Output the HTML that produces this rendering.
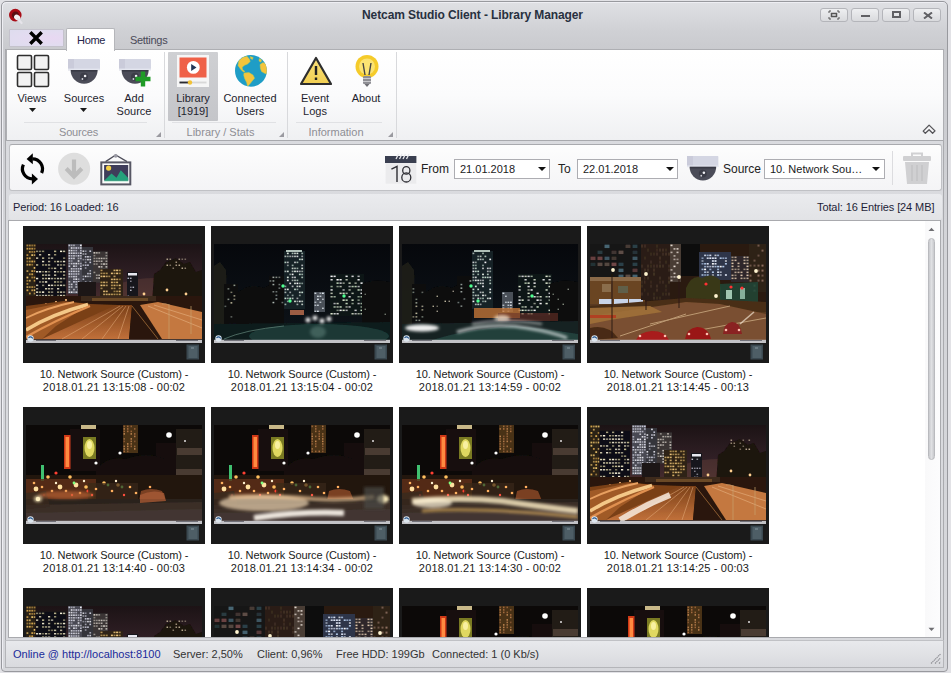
<!DOCTYPE html>
<html><head><meta charset="utf-8">
<style>
*{margin:0;padding:0;box-sizing:border-box}
html,body{width:951px;height:673px;overflow:hidden;background:#e2e2e6;font-family:"Liberation Sans",sans-serif;font-size:11px;color:#1e1e2a}
.a{position:absolute}
#win{left:1px;top:1px;width:947px;height:671px;border:1px solid #98999e;border-radius:5px 5px 4px 4px;box-shadow:inset 1px 1px 0 #eeeef3;background:linear-gradient(#dfe0e4,#cfd0d4 30px,#c9cace 48px,#cdced2 140px,#d3d4d8 220px,#d6d7db);overflow:hidden}
.title{left:-3px;top:8px;width:951px;text-align:center;font-weight:bold;font-size:12px;color:#283040;letter-spacing:-0.1px}
.wbtn{top:8px;width:28px;height:14px;border:1px solid #b4b5ba;border-radius:3px;background:linear-gradient(#eeeff1,#d9dadd)}
.tab{font-size:11px;color:#2a2a3a;letter-spacing:-0.3px}
#ribbon{left:6px;top:49px;width:938px;height:92px;border:1px solid #aeafb3;border-bottom-color:#a8a9ad;background:linear-gradient(#ffffff,#fbfbfc 45px,#eff0f2 90px)}
.grp{top:0;height:90px;border-right:1px solid #d4d5d9}
.gl{color:#8e8e94;font-size:11px;text-align:center;margin-top:1px}
.bt{text-align:center;line-height:13px;font-size:11px;color:#1e1e2e;margin-top:1px}
.sep{height:1px;background:#e0e1e4}
#tb{left:9px;top:144px;width:933px;height:47px;border:1px solid #c0c1c5;border-top-color:#a9aaae;border-radius:3px;background:linear-gradient(#fdfdfd,#f4f4f6)}
#sr{left:9px;top:194px;width:933px;height:26px;border-radius:3px;background:linear-gradient(#eaebee,#e2e3e6)}
#content{left:8px;top:220px;width:933px;height:418px;border:1px solid #a9aaae;background:#fff;overflow:hidden}
.combo{top:159px;height:20px;border:1px solid #adadb2;background:#fff;font-size:11px;padding:3px 0 0 5px;color:#1a1a22}
.dd{width:0;height:0;border-left:4px solid transparent;border-right:4px solid transparent;border-top:4px solid #111}
.lbl{font-size:12px;color:#222}
.th{width:182px;height:137px;background:#1a1a1a}
.ph{left:3px;top:18px;width:176px;height:99px;overflow:hidden}
.cap{width:188px;text-align:center;font-size:11px;line-height:12.5px;color:#1a1a1a;letter-spacing:-0.1px}
#status{left:5px;top:640px;width:939px;height:28px;background:linear-gradient(#e8e9ec,#d9dade);border:1px solid #b4b5b9;border-top-color:#c0c1c5}
.st{top:648px;font-size:11px;color:#333}
</style></head><body>
<svg width="0" height="0" style="position:absolute">
<defs>
<!--SCENES-->
<filter id="bl" x="-5%" y="-5%" width="110%" height="110%"><feGaussianBlur stdDeviation="0.75"/></filter>
<filter id="bl2" x="-30%" y="-30%" width="160%" height="160%"><feGaussianBlur stdDeviation="1.8"/></filter>
<linearGradient id="skyA" x1="0" y1="0" x2="0" y2="1"><stop offset="0" stop-color="#1c1315"/><stop offset="0.35" stop-color="#312026"/><stop offset="0.62" stop-color="#4e3030"/><stop offset="1" stop-color="#4a3030"/></linearGradient>
<linearGradient id="roadA" x1="0" y1="0" x2="0" y2="1"><stop offset="0" stop-color="#7a4018"/><stop offset="1" stop-color="#c0703a"/></linearGradient>
<linearGradient id="skyB" x1="0" y1="0" x2="0" y2="1"><stop offset="0" stop-color="#06080c"/><stop offset="1" stop-color="#0e141a"/></linearGradient>
<symbol id="sA" viewBox="0 0 176 99"><rect width="176" height="99" fill="url(#skyA)"/><ellipse cx="130" cy="52" rx="50" ry="18" fill="#5a3a34" opacity="0.55"/><g filter="url(#bl)"><rect x="0" y="0" width="9.5" height="53" fill="#2a2014"/><rect x="0.5" y="0.6" width="1.8" height="1.8" fill="#d8a850" opacity="0.73"/><rect x="2.9" y="0.6" width="1.8" height="1.8" fill="#d8a850" opacity="0.71"/><rect x="5.3" y="0.6" width="1.8" height="1.8" fill="#d8a850" opacity="0.57"/><rect x="7.7" y="0.6" width="1.8" height="1.8" fill="#d8a850" opacity="0.66"/><rect x="0.5" y="3.8" width="1.8" height="1.8" fill="#d8a850" opacity="0.92"/><rect x="2.9" y="3.8" width="1.8" height="1.8" fill="#d8a850" opacity="0.83"/><rect x="5.3" y="3.8" width="1.8" height="1.8" fill="#d8a850" opacity="0.81"/><rect x="7.7" y="3.8" width="1.8" height="1.8" fill="#d8a850" opacity="0.57"/><rect x="2.9" y="7.0" width="1.8" height="1.8" fill="#d8a850" opacity="0.79"/><rect x="5.3" y="7.0" width="1.8" height="1.8" fill="#d8a850" opacity="0.60"/><rect x="7.7" y="7.0" width="1.8" height="1.8" fill="#d8a850" opacity="0.72"/><rect x="0.5" y="10.2" width="1.8" height="1.8" fill="#d8a850" opacity="0.80"/><rect x="5.3" y="10.2" width="1.8" height="1.8" fill="#f0c870" opacity="0.90"/><rect x="7.7" y="10.2" width="1.8" height="1.8" fill="#f0c870" opacity="0.71"/><rect x="0.5" y="13.4" width="1.8" height="1.8" fill="#d8a850" opacity="0.86"/><rect x="2.9" y="13.4" width="1.8" height="1.8" fill="#f0c870" opacity="0.79"/><rect x="0.5" y="16.6" width="1.8" height="1.8" fill="#d8a850" opacity="0.60"/><rect x="2.9" y="16.6" width="1.8" height="1.8" fill="#f0c870" opacity="0.62"/><rect x="5.3" y="16.6" width="1.8" height="1.8" fill="#d8a850" opacity="0.98"/><rect x="7.7" y="16.6" width="1.8" height="1.8" fill="#f0c870" opacity="0.70"/><rect x="0.5" y="19.8" width="1.8" height="1.8" fill="#f0c870" opacity="0.81"/><rect x="2.9" y="19.8" width="1.8" height="1.8" fill="#d8a850" opacity="0.98"/><rect x="5.3" y="19.8" width="1.8" height="1.8" fill="#d8a850" opacity="0.58"/><rect x="7.7" y="23.0" width="1.8" height="1.8" fill="#f0c870" opacity="0.95"/><rect x="0.5" y="26.2" width="1.8" height="1.8" fill="#f0c870" opacity="0.71"/><rect x="5.3" y="26.2" width="1.8" height="1.8" fill="#d8a850" opacity="0.90"/><rect x="7.7" y="26.2" width="1.8" height="1.8" fill="#d8a850" opacity="0.73"/><rect x="2.9" y="29.4" width="1.8" height="1.8" fill="#d8a850" opacity="0.75"/><rect x="5.3" y="29.4" width="1.8" height="1.8" fill="#d8a850" opacity="0.92"/><rect x="0.5" y="32.6" width="1.8" height="1.8" fill="#f0c870" opacity="0.99"/><rect x="5.3" y="32.6" width="1.8" height="1.8" fill="#d8a850" opacity="0.62"/><rect x="7.7" y="32.6" width="1.8" height="1.8" fill="#d8a850" opacity="0.85"/><rect x="0.5" y="35.8" width="1.8" height="1.8" fill="#d8a850" opacity="0.67"/><rect x="2.9" y="35.8" width="1.8" height="1.8" fill="#f0c870" opacity="0.79"/><rect x="7.7" y="35.8" width="1.8" height="1.8" fill="#d8a850" opacity="0.86"/><rect x="0.5" y="39.0" width="1.8" height="1.8" fill="#d8a850" opacity="0.76"/><rect x="0.5" y="42.2" width="1.8" height="1.8" fill="#f0c870" opacity="0.73"/><rect x="2.9" y="42.2" width="1.8" height="1.8" fill="#f0c870" opacity="0.58"/><rect x="5.3" y="42.2" width="1.8" height="1.8" fill="#d8a850" opacity="0.75"/><rect x="7.7" y="42.2" width="1.8" height="1.8" fill="#d8a850" opacity="0.60"/><rect x="0.5" y="45.4" width="1.8" height="1.8" fill="#d8a850" opacity="0.98"/><rect x="5.3" y="45.4" width="1.8" height="1.8" fill="#d8a850" opacity="0.83"/><rect x="7.7" y="45.4" width="1.8" height="1.8" fill="#f0c870" opacity="0.98"/><rect x="2.9" y="48.6" width="1.8" height="1.8" fill="#d8a850" opacity="0.93"/><rect x="7.7" y="48.6" width="1.8" height="1.8" fill="#f0c870" opacity="0.69"/><rect x="9.5" y="5.5" width="30.5" height="48" fill="#101014"/><rect x="10.0" y="6.6" width="2.2" height="1.5" fill="#c0b890" opacity="0.70"/><rect x="13.0" y="6.6" width="2.2" height="1.5" fill="#c0b890" opacity="0.62"/><rect x="16.0" y="6.6" width="2.2" height="1.5" fill="#c0b890" opacity="0.71"/><rect x="28.0" y="6.6" width="2.2" height="1.5" fill="#c0b890" opacity="0.94"/><rect x="34.0" y="6.6" width="2.2" height="1.5" fill="#fff8e0" opacity="0.96"/><rect x="37.0" y="6.6" width="2.2" height="1.5" fill="#e8e0c0" opacity="0.79"/><rect x="13.0" y="10.0" width="2.2" height="1.5" fill="#e8e0c0" opacity="0.83"/><rect x="22.0" y="10.0" width="2.2" height="1.5" fill="#e8e0c0" opacity="0.92"/><rect x="28.0" y="10.0" width="2.2" height="1.5" fill="#c0b890" opacity="0.77"/><rect x="10.0" y="13.4" width="2.2" height="1.5" fill="#e8e0c0" opacity="0.86"/><rect x="16.0" y="13.4" width="2.2" height="1.5" fill="#c0b890" opacity="0.99"/><rect x="22.0" y="13.4" width="2.2" height="1.5" fill="#e8e0c0" opacity="0.60"/><rect x="25.0" y="13.4" width="2.2" height="1.5" fill="#fff8e0" opacity="0.64"/><rect x="37.0" y="13.4" width="2.2" height="1.5" fill="#c0b890" opacity="0.70"/><rect x="16.0" y="16.8" width="2.2" height="1.5" fill="#fff8e0" opacity="0.90"/><rect x="22.0" y="16.8" width="2.2" height="1.5" fill="#e8e0c0" opacity="0.75"/><rect x="28.0" y="16.8" width="2.2" height="1.5" fill="#c0b890" opacity="0.73"/><rect x="31.0" y="16.8" width="2.2" height="1.5" fill="#e8e0c0" opacity="0.88"/><rect x="34.0" y="16.8" width="2.2" height="1.5" fill="#e8e0c0" opacity="0.56"/><rect x="37.0" y="16.8" width="2.2" height="1.5" fill="#fff8e0" opacity="0.91"/><rect x="10.0" y="20.2" width="2.2" height="1.5" fill="#c0b890" opacity="0.99"/><rect x="16.0" y="20.2" width="2.2" height="1.5" fill="#c0b890" opacity="0.80"/><rect x="19.0" y="20.2" width="2.2" height="1.5" fill="#c0b890" opacity="0.84"/><rect x="22.0" y="20.2" width="2.2" height="1.5" fill="#e8e0c0" opacity="0.75"/><rect x="31.0" y="20.2" width="2.2" height="1.5" fill="#fff8e0" opacity="0.65"/><rect x="34.0" y="20.2" width="2.2" height="1.5" fill="#c0b890" opacity="0.70"/><rect x="37.0" y="20.2" width="2.2" height="1.5" fill="#e8e0c0" opacity="0.58"/><rect x="22.0" y="23.6" width="2.2" height="1.5" fill="#c0b890" opacity="0.61"/><rect x="25.0" y="23.6" width="2.2" height="1.5" fill="#c0b890" opacity="0.56"/><rect x="28.0" y="23.6" width="2.2" height="1.5" fill="#e8e0c0" opacity="0.82"/><rect x="34.0" y="23.6" width="2.2" height="1.5" fill="#e8e0c0" opacity="0.76"/><rect x="10.0" y="27.0" width="2.2" height="1.5" fill="#fff8e0" opacity="0.86"/><rect x="13.0" y="27.0" width="2.2" height="1.5" fill="#fff8e0" opacity="0.90"/><rect x="16.0" y="27.0" width="2.2" height="1.5" fill="#c0b890" opacity="0.58"/><rect x="19.0" y="27.0" width="2.2" height="1.5" fill="#e8e0c0" opacity="0.90"/><rect x="22.0" y="27.0" width="2.2" height="1.5" fill="#c0b890" opacity="0.56"/><rect x="28.0" y="27.0" width="2.2" height="1.5" fill="#fff8e0" opacity="0.83"/><rect x="31.0" y="27.0" width="2.2" height="1.5" fill="#c0b890" opacity="0.64"/><rect x="34.0" y="27.0" width="2.2" height="1.5" fill="#c0b890" opacity="0.79"/><rect x="37.0" y="27.0" width="2.2" height="1.5" fill="#e8e0c0" opacity="0.86"/><rect x="16.0" y="30.4" width="2.2" height="1.5" fill="#c0b890" opacity="0.95"/><rect x="19.0" y="30.4" width="2.2" height="1.5" fill="#fff8e0" opacity="0.61"/><rect x="22.0" y="30.4" width="2.2" height="1.5" fill="#fff8e0" opacity="0.69"/><rect x="28.0" y="30.4" width="2.2" height="1.5" fill="#e8e0c0" opacity="0.85"/><rect x="37.0" y="30.4" width="2.2" height="1.5" fill="#c0b890" opacity="0.84"/><rect x="10.0" y="33.8" width="2.2" height="1.5" fill="#fff8e0" opacity="0.95"/><rect x="16.0" y="33.8" width="2.2" height="1.5" fill="#e8e0c0" opacity="0.73"/><rect x="19.0" y="33.8" width="2.2" height="1.5" fill="#c0b890" opacity="0.92"/><rect x="22.0" y="33.8" width="2.2" height="1.5" fill="#fff8e0" opacity="1.00"/><rect x="25.0" y="33.8" width="2.2" height="1.5" fill="#fff8e0" opacity="0.64"/><rect x="28.0" y="33.8" width="2.2" height="1.5" fill="#c0b890" opacity="0.71"/><rect x="31.0" y="33.8" width="2.2" height="1.5" fill="#fff8e0" opacity="0.75"/><rect x="34.0" y="33.8" width="2.2" height="1.5" fill="#fff8e0" opacity="0.78"/><rect x="37.0" y="33.8" width="2.2" height="1.5" fill="#e8e0c0" opacity="0.60"/><rect x="13.0" y="37.2" width="2.2" height="1.5" fill="#e8e0c0" opacity="0.59"/><rect x="16.0" y="37.2" width="2.2" height="1.5" fill="#e8e0c0" opacity="0.67"/><rect x="19.0" y="37.2" width="2.2" height="1.5" fill="#fff8e0" opacity="0.93"/><rect x="28.0" y="37.2" width="2.2" height="1.5" fill="#c0b890" opacity="0.96"/><rect x="31.0" y="37.2" width="2.2" height="1.5" fill="#c0b890" opacity="0.70"/><rect x="34.0" y="37.2" width="2.2" height="1.5" fill="#c0b890" opacity="0.63"/><rect x="10.0" y="40.6" width="2.2" height="1.5" fill="#e8e0c0" opacity="0.84"/><rect x="16.0" y="40.6" width="2.2" height="1.5" fill="#e8e0c0" opacity="0.58"/><rect x="22.0" y="40.6" width="2.2" height="1.5" fill="#fff8e0" opacity="1.00"/><rect x="25.0" y="40.6" width="2.2" height="1.5" fill="#fff8e0" opacity="0.83"/><rect x="28.0" y="40.6" width="2.2" height="1.5" fill="#c0b890" opacity="0.66"/><rect x="31.0" y="40.6" width="2.2" height="1.5" fill="#e8e0c0" opacity="0.67"/><rect x="34.0" y="40.6" width="2.2" height="1.5" fill="#fff8e0" opacity="0.83"/><rect x="37.0" y="40.6" width="2.2" height="1.5" fill="#e8e0c0" opacity="0.68"/><rect x="10.0" y="44.0" width="2.2" height="1.5" fill="#e8e0c0" opacity="0.67"/><rect x="19.0" y="44.0" width="2.2" height="1.5" fill="#e8e0c0" opacity="0.88"/><rect x="22.0" y="44.0" width="2.2" height="1.5" fill="#e8e0c0" opacity="0.78"/><rect x="25.0" y="44.0" width="2.2" height="1.5" fill="#fff8e0" opacity="0.60"/><rect x="31.0" y="44.0" width="2.2" height="1.5" fill="#fff8e0" opacity="0.80"/><rect x="10.0" y="47.4" width="2.2" height="1.5" fill="#e8e0c0" opacity="0.99"/><rect x="13.0" y="47.4" width="2.2" height="1.5" fill="#c0b890" opacity="0.88"/><rect x="16.0" y="47.4" width="2.2" height="1.5" fill="#fff8e0" opacity="0.99"/><rect x="22.0" y="47.4" width="2.2" height="1.5" fill="#c0b890" opacity="0.88"/><rect x="25.0" y="47.4" width="2.2" height="1.5" fill="#e8e0c0" opacity="0.57"/><rect x="31.0" y="47.4" width="2.2" height="1.5" fill="#c0b890" opacity="0.85"/><rect x="34.0" y="47.4" width="2.2" height="1.5" fill="#e8e0c0" opacity="0.86"/><rect x="37.0" y="47.4" width="2.2" height="1.5" fill="#e8e0c0" opacity="0.62"/><rect x="10.0" y="50.8" width="2.2" height="1.5" fill="#fff8e0" opacity="0.71"/><rect x="13.0" y="50.8" width="2.2" height="1.5" fill="#c0b890" opacity="0.70"/><rect x="16.0" y="50.8" width="2.2" height="1.5" fill="#fff8e0" opacity="0.65"/><rect x="19.0" y="50.8" width="2.2" height="1.5" fill="#fff8e0" opacity="0.72"/><rect x="22.0" y="50.8" width="2.2" height="1.5" fill="#c0b890" opacity="0.85"/><rect x="25.0" y="50.8" width="2.2" height="1.5" fill="#e8e0c0" opacity="0.59"/><rect x="31.0" y="50.8" width="2.2" height="1.5" fill="#c0b890" opacity="0.57"/><rect x="34.0" y="50.8" width="2.2" height="1.5" fill="#fff8e0" opacity="0.83"/><rect x="37.0" y="50.8" width="2.2" height="1.5" fill="#c0b890" opacity="0.93"/><rect x="42" y="0" width="14" height="50" fill="#4a4a52"/><rect x="42.5" y="0.6" width="1.7" height="1.6" fill="#d0d0e0" opacity="0.89"/><rect x="44.8" y="0.6" width="1.7" height="1.6" fill="#d0d0e0" opacity="0.62"/><rect x="47.1" y="0.6" width="1.7" height="1.6" fill="#f0f0f8" opacity="0.57"/><rect x="54.0" y="0.6" width="1.7" height="1.6" fill="#f0f0f8" opacity="0.96"/><rect x="44.8" y="3.2" width="1.7" height="1.6" fill="#f0f0f8" opacity="0.92"/><rect x="47.1" y="3.2" width="1.7" height="1.6" fill="#f0f0f8" opacity="0.59"/><rect x="49.4" y="3.2" width="1.7" height="1.6" fill="#d0d0e0" opacity="0.98"/><rect x="51.7" y="3.2" width="1.7" height="1.6" fill="#d0d0e0" opacity="0.80"/><rect x="54.0" y="3.2" width="1.7" height="1.6" fill="#f0f0f8" opacity="0.77"/><rect x="42.5" y="5.8" width="1.7" height="1.6" fill="#f0f0f8" opacity="0.89"/><rect x="44.8" y="5.8" width="1.7" height="1.6" fill="#f0f0f8" opacity="0.85"/><rect x="47.1" y="5.8" width="1.7" height="1.6" fill="#d0d0e0" opacity="0.66"/><rect x="49.4" y="5.8" width="1.7" height="1.6" fill="#d0d0e0" opacity="0.66"/><rect x="54.0" y="5.8" width="1.7" height="1.6" fill="#d0d0e0" opacity="0.77"/><rect x="42.5" y="8.4" width="1.7" height="1.6" fill="#d0d0e0" opacity="0.96"/><rect x="44.8" y="8.4" width="1.7" height="1.6" fill="#f0f0f8" opacity="0.83"/><rect x="47.1" y="8.4" width="1.7" height="1.6" fill="#f0f0f8" opacity="0.82"/><rect x="49.4" y="8.4" width="1.7" height="1.6" fill="#d0d0e0" opacity="0.83"/><rect x="51.7" y="8.4" width="1.7" height="1.6" fill="#d0d0e0" opacity="0.58"/><rect x="54.0" y="8.4" width="1.7" height="1.6" fill="#f0f0f8" opacity="0.86"/><rect x="42.5" y="11.0" width="1.7" height="1.6" fill="#d0d0e0" opacity="0.87"/><rect x="44.8" y="11.0" width="1.7" height="1.6" fill="#d0d0e0" opacity="0.76"/><rect x="47.1" y="11.0" width="1.7" height="1.6" fill="#f0f0f8" opacity="0.69"/><rect x="49.4" y="11.0" width="1.7" height="1.6" fill="#d0d0e0" opacity="0.56"/><rect x="51.7" y="11.0" width="1.7" height="1.6" fill="#d0d0e0" opacity="1.00"/><rect x="54.0" y="11.0" width="1.7" height="1.6" fill="#f0f0f8" opacity="0.58"/><rect x="42.5" y="13.6" width="1.7" height="1.6" fill="#d0d0e0" opacity="0.98"/><rect x="44.8" y="13.6" width="1.7" height="1.6" fill="#d0d0e0" opacity="0.95"/><rect x="47.1" y="13.6" width="1.7" height="1.6" fill="#f0f0f8" opacity="0.77"/><rect x="51.7" y="13.6" width="1.7" height="1.6" fill="#f0f0f8" opacity="0.55"/><rect x="54.0" y="13.6" width="1.7" height="1.6" fill="#d0d0e0" opacity="0.73"/><rect x="42.5" y="16.2" width="1.7" height="1.6" fill="#d0d0e0" opacity="0.70"/><rect x="44.8" y="16.2" width="1.7" height="1.6" fill="#d0d0e0" opacity="0.55"/><rect x="51.7" y="16.2" width="1.7" height="1.6" fill="#f0f0f8" opacity="0.87"/><rect x="42.5" y="18.8" width="1.7" height="1.6" fill="#d0d0e0" opacity="0.58"/><rect x="44.8" y="18.8" width="1.7" height="1.6" fill="#f0f0f8" opacity="0.71"/><rect x="47.1" y="18.8" width="1.7" height="1.6" fill="#d0d0e0" opacity="0.93"/><rect x="49.4" y="18.8" width="1.7" height="1.6" fill="#f0f0f8" opacity="0.93"/><rect x="51.7" y="18.8" width="1.7" height="1.6" fill="#f0f0f8" opacity="0.66"/><rect x="54.0" y="18.8" width="1.7" height="1.6" fill="#d0d0e0" opacity="0.64"/><rect x="42.5" y="21.4" width="1.7" height="1.6" fill="#d0d0e0" opacity="0.95"/><rect x="47.1" y="21.4" width="1.7" height="1.6" fill="#f0f0f8" opacity="0.87"/><rect x="49.4" y="21.4" width="1.7" height="1.6" fill="#d0d0e0" opacity="0.75"/><rect x="54.0" y="21.4" width="1.7" height="1.6" fill="#d0d0e0" opacity="0.77"/><rect x="44.8" y="24.0" width="1.7" height="1.6" fill="#f0f0f8" opacity="0.76"/><rect x="47.1" y="24.0" width="1.7" height="1.6" fill="#d0d0e0" opacity="0.67"/><rect x="49.4" y="24.0" width="1.7" height="1.6" fill="#d0d0e0" opacity="0.73"/><rect x="51.7" y="24.0" width="1.7" height="1.6" fill="#d0d0e0" opacity="0.80"/><rect x="54.0" y="24.0" width="1.7" height="1.6" fill="#f0f0f8" opacity="0.84"/><rect x="42.5" y="26.6" width="1.7" height="1.6" fill="#d0d0e0" opacity="0.80"/><rect x="44.8" y="26.6" width="1.7" height="1.6" fill="#d0d0e0" opacity="1.00"/><rect x="47.1" y="26.6" width="1.7" height="1.6" fill="#f0f0f8" opacity="0.80"/><rect x="49.4" y="26.6" width="1.7" height="1.6" fill="#f0f0f8" opacity="0.70"/><rect x="51.7" y="26.6" width="1.7" height="1.6" fill="#f0f0f8" opacity="0.72"/><rect x="42.5" y="29.2" width="1.7" height="1.6" fill="#f0f0f8" opacity="0.89"/><rect x="44.8" y="29.2" width="1.7" height="1.6" fill="#d0d0e0" opacity="0.89"/><rect x="47.1" y="29.2" width="1.7" height="1.6" fill="#d0d0e0" opacity="0.70"/><rect x="49.4" y="29.2" width="1.7" height="1.6" fill="#d0d0e0" opacity="0.81"/><rect x="51.7" y="29.2" width="1.7" height="1.6" fill="#f0f0f8" opacity="0.59"/><rect x="42.5" y="31.8" width="1.7" height="1.6" fill="#d0d0e0" opacity="0.74"/><rect x="44.8" y="31.8" width="1.7" height="1.6" fill="#f0f0f8" opacity="0.61"/><rect x="47.1" y="31.8" width="1.7" height="1.6" fill="#d0d0e0" opacity="0.99"/><rect x="49.4" y="31.8" width="1.7" height="1.6" fill="#f0f0f8" opacity="0.73"/><rect x="47.1" y="34.4" width="1.7" height="1.6" fill="#f0f0f8" opacity="0.65"/><rect x="49.4" y="34.4" width="1.7" height="1.6" fill="#f0f0f8" opacity="0.97"/><rect x="51.7" y="34.4" width="1.7" height="1.6" fill="#d0d0e0" opacity="0.59"/><rect x="42.5" y="37.0" width="1.7" height="1.6" fill="#f0f0f8" opacity="0.65"/><rect x="47.1" y="37.0" width="1.7" height="1.6" fill="#d0d0e0" opacity="0.98"/><rect x="49.4" y="37.0" width="1.7" height="1.6" fill="#d0d0e0" opacity="0.86"/><rect x="51.7" y="37.0" width="1.7" height="1.6" fill="#f0f0f8" opacity="0.69"/><rect x="42.5" y="39.6" width="1.7" height="1.6" fill="#d0d0e0" opacity="0.65"/><rect x="44.8" y="39.6" width="1.7" height="1.6" fill="#f0f0f8" opacity="0.79"/><rect x="49.4" y="39.6" width="1.7" height="1.6" fill="#d0d0e0" opacity="0.84"/><rect x="54.0" y="39.6" width="1.7" height="1.6" fill="#f0f0f8" opacity="0.80"/><rect x="42.5" y="42.2" width="1.7" height="1.6" fill="#d0d0e0" opacity="0.87"/><rect x="44.8" y="42.2" width="1.7" height="1.6" fill="#f0f0f8" opacity="0.64"/><rect x="49.4" y="42.2" width="1.7" height="1.6" fill="#f0f0f8" opacity="0.67"/><rect x="51.7" y="42.2" width="1.7" height="1.6" fill="#d0d0e0" opacity="0.65"/><rect x="54.0" y="42.2" width="1.7" height="1.6" fill="#d0d0e0" opacity="0.87"/><rect x="42.5" y="44.8" width="1.7" height="1.6" fill="#d0d0e0" opacity="0.64"/><rect x="47.1" y="44.8" width="1.7" height="1.6" fill="#f0f0f8" opacity="0.64"/><rect x="51.7" y="44.8" width="1.7" height="1.6" fill="#f0f0f8" opacity="0.65"/><rect x="54.0" y="44.8" width="1.7" height="1.6" fill="#d0d0e0" opacity="0.60"/><rect x="42.5" y="47.4" width="1.7" height="1.6" fill="#f0f0f8" opacity="0.95"/><rect x="44.8" y="47.4" width="1.7" height="1.6" fill="#f0f0f8" opacity="0.98"/><rect x="47.1" y="47.4" width="1.7" height="1.6" fill="#d0d0e0" opacity="0.57"/><rect x="49.4" y="47.4" width="1.7" height="1.6" fill="#f0f0f8" opacity="0.74"/><rect x="51.7" y="47.4" width="1.7" height="1.6" fill="#f0f0f8" opacity="0.73"/><rect x="56" y="3" width="11" height="44" fill="#34343a"/><rect x="56.5" y="6.4" width="1.7" height="1.6" fill="#e8e8f0" opacity="0.84"/><rect x="58.8" y="6.4" width="1.7" height="1.6" fill="#c8c8d8" opacity="0.56"/><rect x="63.4" y="6.4" width="1.7" height="1.6" fill="#c8c8d8" opacity="0.99"/><rect x="56.5" y="9.2" width="1.7" height="1.6" fill="#e8e8f0" opacity="0.55"/><rect x="58.8" y="9.2" width="1.7" height="1.6" fill="#c8c8d8" opacity="0.74"/><rect x="58.8" y="12.0" width="1.7" height="1.6" fill="#c8c8d8" opacity="0.92"/><rect x="61.1" y="12.0" width="1.7" height="1.6" fill="#e8e8f0" opacity="0.87"/><rect x="63.4" y="12.0" width="1.7" height="1.6" fill="#c8c8d8" opacity="0.64"/><rect x="56.5" y="14.8" width="1.7" height="1.6" fill="#c8c8d8" opacity="0.56"/><rect x="58.8" y="14.8" width="1.7" height="1.6" fill="#c8c8d8" opacity="0.57"/><rect x="61.1" y="14.8" width="1.7" height="1.6" fill="#e8e8f0" opacity="0.91"/><rect x="63.4" y="14.8" width="1.7" height="1.6" fill="#e8e8f0" opacity="0.89"/><rect x="58.8" y="17.6" width="1.7" height="1.6" fill="#c8c8d8" opacity="0.70"/><rect x="63.4" y="17.6" width="1.7" height="1.6" fill="#c8c8d8" opacity="0.97"/><rect x="56.5" y="20.4" width="1.7" height="1.6" fill="#e8e8f0" opacity="0.56"/><rect x="58.8" y="20.4" width="1.7" height="1.6" fill="#c8c8d8" opacity="0.87"/><rect x="61.1" y="20.4" width="1.7" height="1.6" fill="#c8c8d8" opacity="0.91"/><rect x="58.8" y="23.2" width="1.7" height="1.6" fill="#c8c8d8" opacity="0.63"/><rect x="63.4" y="26.0" width="1.7" height="1.6" fill="#c8c8d8" opacity="0.76"/><rect x="61.1" y="28.8" width="1.7" height="1.6" fill="#c8c8d8" opacity="0.89"/><rect x="63.4" y="28.8" width="1.7" height="1.6" fill="#e8e8f0" opacity="0.84"/><rect x="56.5" y="31.6" width="1.7" height="1.6" fill="#c8c8d8" opacity="0.62"/><rect x="58.8" y="31.6" width="1.7" height="1.6" fill="#e8e8f0" opacity="0.99"/><rect x="61.1" y="31.6" width="1.7" height="1.6" fill="#e8e8f0" opacity="0.64"/><rect x="63.4" y="31.6" width="1.7" height="1.6" fill="#c8c8d8" opacity="0.63"/><rect x="56.5" y="34.4" width="1.7" height="1.6" fill="#c8c8d8" opacity="0.83"/><rect x="58.8" y="37.2" width="1.7" height="1.6" fill="#c8c8d8" opacity="0.68"/><rect x="63.4" y="37.2" width="1.7" height="1.6" fill="#c8c8d8" opacity="0.64"/><rect x="56.5" y="40.0" width="1.7" height="1.6" fill="#e8e8f0" opacity="0.66"/><rect x="58.8" y="40.0" width="1.7" height="1.6" fill="#e8e8f0" opacity="0.70"/><rect x="61.1" y="40.0" width="1.7" height="1.6" fill="#e8e8f0" opacity="0.78"/><rect x="63.4" y="40.0" width="1.7" height="1.6" fill="#e8e8f0" opacity="0.84"/><rect x="58.8" y="42.8" width="1.7" height="1.6" fill="#c8c8d8" opacity="0.95"/><rect x="61.1" y="42.8" width="1.7" height="1.6" fill="#c8c8d8" opacity="0.96"/><rect x="63.4" y="42.8" width="1.7" height="1.6" fill="#c8c8d8" opacity="0.65"/><rect x="67" y="7.5" width="15" height="31" fill="#3a3636"/><rect x="67.5" y="8.1" width="1.8" height="1.5" fill="#e0d8d0" opacity="0.97"/><rect x="69.9" y="8.1" width="1.8" height="1.5" fill="#e0d8d0" opacity="0.75"/><rect x="72.3" y="8.1" width="1.8" height="1.5" fill="#e0d8d0" opacity="0.60"/><rect x="79.5" y="8.1" width="1.8" height="1.5" fill="#c8c0b8" opacity="0.70"/><rect x="67.5" y="10.9" width="1.8" height="1.5" fill="#c8c0b8" opacity="0.57"/><rect x="79.5" y="10.9" width="1.8" height="1.5" fill="#c8c0b8" opacity="0.63"/><rect x="67.5" y="13.7" width="1.8" height="1.5" fill="#e0d8d0" opacity="0.56"/><rect x="69.9" y="13.7" width="1.8" height="1.5" fill="#c8c0b8" opacity="0.58"/><rect x="72.3" y="13.7" width="1.8" height="1.5" fill="#c8c0b8" opacity="0.85"/><rect x="74.7" y="13.7" width="1.8" height="1.5" fill="#e0d8d0" opacity="0.84"/><rect x="77.1" y="13.7" width="1.8" height="1.5" fill="#c8c0b8" opacity="0.73"/><rect x="79.5" y="13.7" width="1.8" height="1.5" fill="#c8c0b8" opacity="0.74"/><rect x="67.5" y="16.5" width="1.8" height="1.5" fill="#c8c0b8" opacity="0.74"/><rect x="69.9" y="16.5" width="1.8" height="1.5" fill="#c8c0b8" opacity="0.84"/><rect x="72.3" y="16.5" width="1.8" height="1.5" fill="#c8c0b8" opacity="0.64"/><rect x="74.7" y="16.5" width="1.8" height="1.5" fill="#e0d8d0" opacity="0.74"/><rect x="79.5" y="16.5" width="1.8" height="1.5" fill="#c8c0b8" opacity="0.76"/><rect x="67.5" y="19.3" width="1.8" height="1.5" fill="#e0d8d0" opacity="0.57"/><rect x="69.9" y="19.3" width="1.8" height="1.5" fill="#c8c0b8" opacity="0.59"/><rect x="74.7" y="19.3" width="1.8" height="1.5" fill="#e0d8d0" opacity="0.62"/><rect x="77.1" y="19.3" width="1.8" height="1.5" fill="#e0d8d0" opacity="0.97"/><rect x="79.5" y="19.3" width="1.8" height="1.5" fill="#c8c0b8" opacity="0.89"/><rect x="72.3" y="22.1" width="1.8" height="1.5" fill="#e0d8d0" opacity="0.99"/><rect x="74.7" y="22.1" width="1.8" height="1.5" fill="#e0d8d0" opacity="0.82"/><rect x="79.5" y="22.1" width="1.8" height="1.5" fill="#e0d8d0" opacity="0.84"/><rect x="74.7" y="24.9" width="1.8" height="1.5" fill="#c8c0b8" opacity="0.63"/><rect x="77.1" y="24.9" width="1.8" height="1.5" fill="#c8c0b8" opacity="0.97"/><rect x="79.5" y="24.9" width="1.8" height="1.5" fill="#c8c0b8" opacity="0.61"/><rect x="67.5" y="27.7" width="1.8" height="1.5" fill="#e0d8d0" opacity="0.57"/><rect x="74.7" y="27.7" width="1.8" height="1.5" fill="#c8c0b8" opacity="0.60"/><rect x="69.9" y="30.5" width="1.8" height="1.5" fill="#c8c0b8" opacity="0.69"/><rect x="72.3" y="30.5" width="1.8" height="1.5" fill="#c8c0b8" opacity="0.85"/><rect x="74.7" y="30.5" width="1.8" height="1.5" fill="#c8c0b8" opacity="0.63"/><rect x="77.1" y="30.5" width="1.8" height="1.5" fill="#c8c0b8" opacity="0.76"/><rect x="79.5" y="30.5" width="1.8" height="1.5" fill="#c8c0b8" opacity="0.93"/><rect x="69.9" y="33.3" width="1.8" height="1.5" fill="#e0d8d0" opacity="0.61"/><rect x="72.3" y="33.3" width="1.8" height="1.5" fill="#e0d8d0" opacity="0.91"/><rect x="74.7" y="33.3" width="1.8" height="1.5" fill="#e0d8d0" opacity="0.57"/><rect x="77.1" y="33.3" width="1.8" height="1.5" fill="#c8c0b8" opacity="0.90"/><rect x="79.5" y="33.3" width="1.8" height="1.5" fill="#e0d8d0" opacity="0.89"/><rect x="74.7" y="36.1" width="1.8" height="1.5" fill="#e0d8d0" opacity="1.00"/><rect x="74" y="25" width="23" height="28" fill="#2e2212"/><rect x="74.5" y="25.6" width="2" height="1.6" fill="#f0c880" opacity="0.68"/><rect x="87.5" y="25.6" width="2" height="1.6" fill="#f0c880" opacity="0.82"/><rect x="90.1" y="25.6" width="2" height="1.6" fill="#f0c880" opacity="0.95"/><rect x="92.7" y="25.6" width="2" height="1.6" fill="#f0c880" opacity="0.61"/><rect x="74.5" y="28.6" width="2" height="1.6" fill="#f0c880" opacity="0.64"/><rect x="77.1" y="28.6" width="2" height="1.6" fill="#d8b068" opacity="0.69"/><rect x="79.7" y="28.6" width="2" height="1.6" fill="#d8b068" opacity="0.73"/><rect x="84.9" y="28.6" width="2" height="1.6" fill="#f0c880" opacity="0.95"/><rect x="87.5" y="28.6" width="2" height="1.6" fill="#f0c880" opacity="0.60"/><rect x="90.1" y="28.6" width="2" height="1.6" fill="#f0c880" opacity="0.98"/><rect x="92.7" y="28.6" width="2" height="1.6" fill="#d8b068" opacity="0.66"/><rect x="74.5" y="31.6" width="2" height="1.6" fill="#f0c880" opacity="0.88"/><rect x="77.1" y="31.6" width="2" height="1.6" fill="#f0c880" opacity="1.00"/><rect x="79.7" y="31.6" width="2" height="1.6" fill="#f0c880" opacity="0.70"/><rect x="82.3" y="31.6" width="2" height="1.6" fill="#d8b068" opacity="0.63"/><rect x="87.5" y="31.6" width="2" height="1.6" fill="#f0c880" opacity="0.69"/><rect x="84.9" y="34.6" width="2" height="1.6" fill="#f0c880" opacity="0.83"/><rect x="87.5" y="34.6" width="2" height="1.6" fill="#f0c880" opacity="0.95"/><rect x="90.1" y="34.6" width="2" height="1.6" fill="#d8b068" opacity="0.83"/><rect x="92.7" y="34.6" width="2" height="1.6" fill="#d8b068" opacity="0.55"/><rect x="74.5" y="37.6" width="2" height="1.6" fill="#d8b068" opacity="0.79"/><rect x="77.1" y="37.6" width="2" height="1.6" fill="#f0c880" opacity="0.81"/><rect x="79.7" y="37.6" width="2" height="1.6" fill="#d8b068" opacity="0.71"/><rect x="84.9" y="37.6" width="2" height="1.6" fill="#d8b068" opacity="0.97"/><rect x="87.5" y="37.6" width="2" height="1.6" fill="#d8b068" opacity="0.75"/><rect x="90.1" y="37.6" width="2" height="1.6" fill="#d8b068" opacity="0.94"/><rect x="74.5" y="40.6" width="2" height="1.6" fill="#f0c880" opacity="0.99"/><rect x="77.1" y="40.6" width="2" height="1.6" fill="#f0c880" opacity="0.82"/><rect x="79.7" y="40.6" width="2" height="1.6" fill="#f0c880" opacity="0.66"/><rect x="84.9" y="40.6" width="2" height="1.6" fill="#d8b068" opacity="0.73"/><rect x="87.5" y="40.6" width="2" height="1.6" fill="#d8b068" opacity="0.96"/><rect x="90.1" y="40.6" width="2" height="1.6" fill="#d8b068" opacity="0.61"/><rect x="92.7" y="40.6" width="2" height="1.6" fill="#f0c880" opacity="0.92"/><rect x="74.5" y="43.6" width="2" height="1.6" fill="#f0c880" opacity="0.58"/><rect x="84.9" y="43.6" width="2" height="1.6" fill="#d8b068" opacity="0.72"/><rect x="87.5" y="43.6" width="2" height="1.6" fill="#f0c880" opacity="0.59"/><rect x="92.7" y="43.6" width="2" height="1.6" fill="#d8b068" opacity="0.67"/><rect x="77.1" y="46.6" width="2" height="1.6" fill="#f0c880" opacity="0.87"/><rect x="79.7" y="46.6" width="2" height="1.6" fill="#f0c880" opacity="0.86"/><rect x="87.5" y="46.6" width="2" height="1.6" fill="#d8b068" opacity="0.59"/><rect x="90.1" y="46.6" width="2" height="1.6" fill="#d8b068" opacity="0.67"/><rect x="92.7" y="46.6" width="2" height="1.6" fill="#d8b068" opacity="0.98"/><rect x="77.1" y="49.6" width="2" height="1.6" fill="#f0c880" opacity="0.70"/><rect x="79.7" y="49.6" width="2" height="1.6" fill="#f0c880" opacity="0.76"/><rect x="82.3" y="49.6" width="2" height="1.6" fill="#d8b068" opacity="0.94"/><rect x="84.9" y="49.6" width="2" height="1.6" fill="#d8b068" opacity="0.81"/><rect x="87.5" y="49.6" width="2" height="1.6" fill="#d8b068" opacity="0.73"/><rect x="90.1" y="49.6" width="2" height="1.6" fill="#d8b068" opacity="0.62"/><rect x="92.7" y="49.6" width="2" height="1.6" fill="#d8b068" opacity="0.83"/><rect x="101" y="28" width="11" height="25" fill="#18161a"/><rect x="102" y="29" width="9" height="2.5" fill="#e8e8f0"/><rect x="101.5" y="33.6" width="1.6" height="1.4" fill="#c0c0d0" opacity="0.87"/><rect x="104.0" y="33.6" width="1.6" height="1.4" fill="#c0c0d0" opacity="0.86"/><rect x="104.0" y="36.6" width="1.6" height="1.4" fill="#c0c0d0" opacity="0.64"/><rect x="104.0" y="42.6" width="1.6" height="1.4" fill="#c0c0d0" opacity="0.60"/><rect x="106.5" y="42.6" width="1.6" height="1.4" fill="#c0c0d0" opacity="0.92"/><rect x="104.0" y="45.6" width="1.6" height="1.4" fill="#c0c0d0" opacity="0.91"/><rect x="101.5" y="51.6" width="1.6" height="1.4" fill="#c0c0d0" opacity="0.96"/><rect x="52" y="38" width="18" height="15" fill="#1c1814"/><path d="M126 60 L128 30 L134 26 L140 18 L150 14 L158 20 L164 18 L170 28 L176 26 L176 62Z" fill="#1a120c"/><rect x="140.5" y="14.6" width="1.6" height="1.2" fill="#e0d0b0" opacity="0.91"/><rect x="143.5" y="14.6" width="1.6" height="1.2" fill="#e0d0b0" opacity="0.71"/><rect x="152.5" y="14.6" width="1.6" height="1.2" fill="#e0d0b0" opacity="0.81"/><rect x="155.5" y="14.6" width="1.6" height="1.2" fill="#e0d0b0" opacity="0.55"/><rect x="158.5" y="14.6" width="1.6" height="1.2" fill="#e0d0b0" opacity="0.55"/><rect x="149.5" y="17.6" width="1.6" height="1.2" fill="#e0d0b0" opacity="0.82"/><rect x="140.5" y="20.6" width="1.6" height="1.2" fill="#e0d0b0" opacity="0.97"/><rect x="143.5" y="20.6" width="1.6" height="1.2" fill="#e0d0b0" opacity="0.60"/><rect x="149.5" y="20.6" width="1.6" height="1.2" fill="#e0d0b0" opacity="0.83"/><rect x="152.5" y="20.6" width="1.6" height="1.2" fill="#e0d0b0" opacity="0.97"/><rect x="146.5" y="23.6" width="1.6" height="1.2" fill="#e0d0b0" opacity="0.67"/><rect x="155.5" y="23.6" width="1.6" height="1.2" fill="#e0d0b0" opacity="0.97"/><rect x="158.5" y="23.6" width="1.6" height="1.2" fill="#e0d0b0" opacity="0.71"/><circle cx="141" cy="46" r="1.4" fill="#ffd090"/><circle cx="160" cy="50" r="1.4" fill="#ffd090"/><circle cx="118" cy="50" r="1.4" fill="#ffd090"/><circle cx="150" cy="56" r="1.4" fill="#ffd090"/><rect x="0" y="52" width="176" height="47" fill="#2a180c"/><rect x="55" y="52" width="75" height="5" fill="#3e2a1a"/><circle cx="30" cy="58" r="1.1" fill="#ffc080"/><circle cx="40" cy="56" r="1.1" fill="#ffc080"/><circle cx="96" cy="56" r="1.1" fill="#ffc080"/><circle cx="112" cy="55" r="1.1" fill="#ffc080"/><circle cx="20" cy="60" r="1.1" fill="#ffc080"/><path d="M0 62 L38 57 L64 60 L92 61 L106 61 L103 95 L0 95Z" fill="#7a4018"/><path d="M0 66 L40 58 L64 60 L30 82 L16 95 L0 95Z" fill="#a05a28"/><path d="M0 86 Q26 70 62 60.5" stroke="#f4c888" stroke-width="3.6" fill="none"/><path d="M0 93 Q30 76 64 62" stroke="#e09050" stroke-width="2.4" fill="none"/><path d="M0 74 Q20 64 48 58" stroke="#e8a060" stroke-width="1.8" fill="none"/><path d="M16 95 L90 61 L106 61 L103 95Z" fill="url(#roadA)"/><path d="M36 95 L94 62 M56 95 L97 62 M76 95 L100 62 M92 95 L103 62" stroke="#e8b080" stroke-width="0.9" opacity="0.55"/><path d="M103 95 L106 61 L114 61 L136 95Z" fill="#2a180c"/><path d="M106 62 L132 95" stroke="#8a5a30" stroke-width="1"/><path d="M114 61 L132 58 L176 68 L176 95 L136 95Z" fill="#c47840"/><path d="M122 62 L176 84 M128 61 L176 76" stroke="#eab888" stroke-width="1" opacity="0.55"/><path d="M143 60 L143 95 M165 62 L165 90" stroke="#c8a070" stroke-width="0.7"/><path d="M143 61 Q140 59 136 60" stroke="#c8a070" stroke-width="0.6" fill="none"/><rect x="66" y="54" width="56" height="3" fill="#6a4828"/></g><rect x="0" y="95.8" width="176" height="3.2" fill="#c2c2c6"/><rect x="10" y="96" width="20" height="1" fill="#707078"/><rect x="150" y="96" width="22" height="1" fill="#707078"/><circle cx="4.5" cy="94.5" r="3.2" fill="#dde6ee"/><path d="M2.5 94 Q4.5 91.5 7 94.5" stroke="#2a5a90" stroke-width="1.1" fill="none"/></symbol>
<symbol id="sA2" viewBox="0 0 176 99"><rect width="176" height="99" fill="url(#skyA)"/><ellipse cx="130" cy="52" rx="50" ry="18" fill="#5a3a34" opacity="0.55"/><g filter="url(#bl)"><rect x="0" y="0" width="9.5" height="53" fill="#2a2014"/><rect x="0.5" y="0.6" width="1.8" height="1.8" fill="#d8a850" opacity="0.94"/><rect x="2.9" y="0.6" width="1.8" height="1.8" fill="#f0c870" opacity="0.63"/><rect x="5.3" y="0.6" width="1.8" height="1.8" fill="#f0c870" opacity="0.81"/><rect x="7.7" y="0.6" width="1.8" height="1.8" fill="#f0c870" opacity="0.84"/><rect x="2.9" y="3.8" width="1.8" height="1.8" fill="#f0c870" opacity="0.69"/><rect x="0.5" y="7.0" width="1.8" height="1.8" fill="#d8a850" opacity="0.99"/><rect x="7.7" y="7.0" width="1.8" height="1.8" fill="#d8a850" opacity="0.70"/><rect x="0.5" y="10.2" width="1.8" height="1.8" fill="#d8a850" opacity="0.62"/><rect x="5.3" y="10.2" width="1.8" height="1.8" fill="#d8a850" opacity="0.99"/><rect x="2.9" y="13.4" width="1.8" height="1.8" fill="#d8a850" opacity="0.60"/><rect x="7.7" y="13.4" width="1.8" height="1.8" fill="#f0c870" opacity="0.76"/><rect x="0.5" y="16.6" width="1.8" height="1.8" fill="#f0c870" opacity="0.86"/><rect x="2.9" y="16.6" width="1.8" height="1.8" fill="#f0c870" opacity="0.76"/><rect x="5.3" y="16.6" width="1.8" height="1.8" fill="#f0c870" opacity="0.55"/><rect x="7.7" y="16.6" width="1.8" height="1.8" fill="#f0c870" opacity="0.87"/><rect x="0.5" y="19.8" width="1.8" height="1.8" fill="#f0c870" opacity="0.93"/><rect x="2.9" y="23.0" width="1.8" height="1.8" fill="#d8a850" opacity="0.86"/><rect x="7.7" y="23.0" width="1.8" height="1.8" fill="#f0c870" opacity="0.67"/><rect x="5.3" y="26.2" width="1.8" height="1.8" fill="#f0c870" opacity="0.87"/><rect x="0.5" y="29.4" width="1.8" height="1.8" fill="#f0c870" opacity="0.77"/><rect x="2.9" y="29.4" width="1.8" height="1.8" fill="#f0c870" opacity="0.78"/><rect x="2.9" y="32.6" width="1.8" height="1.8" fill="#d8a850" opacity="0.72"/><rect x="5.3" y="32.6" width="1.8" height="1.8" fill="#d8a850" opacity="0.57"/><rect x="7.7" y="32.6" width="1.8" height="1.8" fill="#d8a850" opacity="0.87"/><rect x="2.9" y="35.8" width="1.8" height="1.8" fill="#f0c870" opacity="0.60"/><rect x="5.3" y="35.8" width="1.8" height="1.8" fill="#d8a850" opacity="0.87"/><rect x="7.7" y="35.8" width="1.8" height="1.8" fill="#f0c870" opacity="0.78"/><rect x="0.5" y="39.0" width="1.8" height="1.8" fill="#f0c870" opacity="0.64"/><rect x="5.3" y="39.0" width="1.8" height="1.8" fill="#d8a850" opacity="0.88"/><rect x="2.9" y="42.2" width="1.8" height="1.8" fill="#f0c870" opacity="0.73"/><rect x="5.3" y="42.2" width="1.8" height="1.8" fill="#f0c870" opacity="0.96"/><rect x="2.9" y="45.4" width="1.8" height="1.8" fill="#d8a850" opacity="0.65"/><rect x="0.5" y="48.6" width="1.8" height="1.8" fill="#d8a850" opacity="1.00"/><rect x="5.3" y="48.6" width="1.8" height="1.8" fill="#d8a850" opacity="0.61"/><rect x="9.5" y="5.5" width="30.5" height="48" fill="#101014"/><rect x="16.0" y="6.6" width="2.2" height="1.5" fill="#c0b890" opacity="0.87"/><rect x="22.0" y="6.6" width="2.2" height="1.5" fill="#c0b890" opacity="0.84"/><rect x="31.0" y="6.6" width="2.2" height="1.5" fill="#fff8e0" opacity="0.89"/><rect x="10.0" y="10.0" width="2.2" height="1.5" fill="#e8e0c0" opacity="0.67"/><rect x="13.0" y="10.0" width="2.2" height="1.5" fill="#fff8e0" opacity="0.99"/><rect x="19.0" y="10.0" width="2.2" height="1.5" fill="#c0b890" opacity="0.91"/><rect x="22.0" y="10.0" width="2.2" height="1.5" fill="#c0b890" opacity="0.69"/><rect x="25.0" y="10.0" width="2.2" height="1.5" fill="#fff8e0" opacity="0.83"/><rect x="28.0" y="10.0" width="2.2" height="1.5" fill="#fff8e0" opacity="0.62"/><rect x="31.0" y="10.0" width="2.2" height="1.5" fill="#fff8e0" opacity="0.58"/><rect x="13.0" y="13.4" width="2.2" height="1.5" fill="#fff8e0" opacity="0.83"/><rect x="16.0" y="13.4" width="2.2" height="1.5" fill="#e8e0c0" opacity="0.64"/><rect x="19.0" y="13.4" width="2.2" height="1.5" fill="#fff8e0" opacity="0.66"/><rect x="22.0" y="13.4" width="2.2" height="1.5" fill="#e8e0c0" opacity="0.93"/><rect x="25.0" y="13.4" width="2.2" height="1.5" fill="#fff8e0" opacity="0.71"/><rect x="28.0" y="13.4" width="2.2" height="1.5" fill="#fff8e0" opacity="0.91"/><rect x="31.0" y="13.4" width="2.2" height="1.5" fill="#c0b890" opacity="0.82"/><rect x="19.0" y="16.8" width="2.2" height="1.5" fill="#c0b890" opacity="0.65"/><rect x="22.0" y="16.8" width="2.2" height="1.5" fill="#fff8e0" opacity="0.85"/><rect x="25.0" y="16.8" width="2.2" height="1.5" fill="#e8e0c0" opacity="0.67"/><rect x="28.0" y="16.8" width="2.2" height="1.5" fill="#e8e0c0" opacity="0.76"/><rect x="31.0" y="16.8" width="2.2" height="1.5" fill="#fff8e0" opacity="0.76"/><rect x="34.0" y="16.8" width="2.2" height="1.5" fill="#fff8e0" opacity="0.66"/><rect x="37.0" y="16.8" width="2.2" height="1.5" fill="#c0b890" opacity="0.94"/><rect x="10.0" y="20.2" width="2.2" height="1.5" fill="#fff8e0" opacity="0.76"/><rect x="13.0" y="20.2" width="2.2" height="1.5" fill="#c0b890" opacity="0.68"/><rect x="16.0" y="20.2" width="2.2" height="1.5" fill="#fff8e0" opacity="0.74"/><rect x="22.0" y="20.2" width="2.2" height="1.5" fill="#c0b890" opacity="0.71"/><rect x="28.0" y="20.2" width="2.2" height="1.5" fill="#e8e0c0" opacity="0.86"/><rect x="34.0" y="20.2" width="2.2" height="1.5" fill="#e8e0c0" opacity="0.78"/><rect x="37.0" y="20.2" width="2.2" height="1.5" fill="#e8e0c0" opacity="0.57"/><rect x="16.0" y="23.6" width="2.2" height="1.5" fill="#c0b890" opacity="0.71"/><rect x="19.0" y="23.6" width="2.2" height="1.5" fill="#c0b890" opacity="0.80"/><rect x="25.0" y="23.6" width="2.2" height="1.5" fill="#fff8e0" opacity="0.74"/><rect x="28.0" y="23.6" width="2.2" height="1.5" fill="#fff8e0" opacity="0.68"/><rect x="34.0" y="23.6" width="2.2" height="1.5" fill="#c0b890" opacity="0.99"/><rect x="10.0" y="27.0" width="2.2" height="1.5" fill="#e8e0c0" opacity="0.84"/><rect x="16.0" y="27.0" width="2.2" height="1.5" fill="#fff8e0" opacity="0.87"/><rect x="19.0" y="27.0" width="2.2" height="1.5" fill="#c0b890" opacity="0.59"/><rect x="25.0" y="27.0" width="2.2" height="1.5" fill="#c0b890" opacity="0.95"/><rect x="28.0" y="27.0" width="2.2" height="1.5" fill="#e8e0c0" opacity="0.73"/><rect x="31.0" y="27.0" width="2.2" height="1.5" fill="#e8e0c0" opacity="0.64"/><rect x="31.0" y="30.4" width="2.2" height="1.5" fill="#c0b890" opacity="0.59"/><rect x="34.0" y="30.4" width="2.2" height="1.5" fill="#c0b890" opacity="0.76"/><rect x="10.0" y="33.8" width="2.2" height="1.5" fill="#e8e0c0" opacity="0.94"/><rect x="13.0" y="33.8" width="2.2" height="1.5" fill="#e8e0c0" opacity="0.96"/><rect x="19.0" y="33.8" width="2.2" height="1.5" fill="#e8e0c0" opacity="0.90"/><rect x="22.0" y="33.8" width="2.2" height="1.5" fill="#fff8e0" opacity="0.94"/><rect x="25.0" y="33.8" width="2.2" height="1.5" fill="#e8e0c0" opacity="0.69"/><rect x="28.0" y="33.8" width="2.2" height="1.5" fill="#c0b890" opacity="0.81"/><rect x="34.0" y="33.8" width="2.2" height="1.5" fill="#c0b890" opacity="0.57"/><rect x="37.0" y="33.8" width="2.2" height="1.5" fill="#fff8e0" opacity="0.81"/><rect x="13.0" y="37.2" width="2.2" height="1.5" fill="#e8e0c0" opacity="0.86"/><rect x="16.0" y="37.2" width="2.2" height="1.5" fill="#c0b890" opacity="0.99"/><rect x="19.0" y="37.2" width="2.2" height="1.5" fill="#fff8e0" opacity="0.80"/><rect x="22.0" y="37.2" width="2.2" height="1.5" fill="#fff8e0" opacity="0.65"/><rect x="25.0" y="37.2" width="2.2" height="1.5" fill="#e8e0c0" opacity="0.74"/><rect x="28.0" y="37.2" width="2.2" height="1.5" fill="#c0b890" opacity="0.60"/><rect x="34.0" y="37.2" width="2.2" height="1.5" fill="#e8e0c0" opacity="0.61"/><rect x="37.0" y="37.2" width="2.2" height="1.5" fill="#c0b890" opacity="0.81"/><rect x="10.0" y="40.6" width="2.2" height="1.5" fill="#c0b890" opacity="0.63"/><rect x="13.0" y="40.6" width="2.2" height="1.5" fill="#c0b890" opacity="0.87"/><rect x="22.0" y="40.6" width="2.2" height="1.5" fill="#c0b890" opacity="0.80"/><rect x="25.0" y="40.6" width="2.2" height="1.5" fill="#c0b890" opacity="0.97"/><rect x="28.0" y="40.6" width="2.2" height="1.5" fill="#e8e0c0" opacity="0.87"/><rect x="31.0" y="40.6" width="2.2" height="1.5" fill="#e8e0c0" opacity="0.95"/><rect x="10.0" y="44.0" width="2.2" height="1.5" fill="#fff8e0" opacity="0.88"/><rect x="13.0" y="44.0" width="2.2" height="1.5" fill="#fff8e0" opacity="0.82"/><rect x="16.0" y="44.0" width="2.2" height="1.5" fill="#c0b890" opacity="0.88"/><rect x="19.0" y="44.0" width="2.2" height="1.5" fill="#e8e0c0" opacity="0.62"/><rect x="25.0" y="44.0" width="2.2" height="1.5" fill="#c0b890" opacity="0.62"/><rect x="31.0" y="44.0" width="2.2" height="1.5" fill="#fff8e0" opacity="0.98"/><rect x="37.0" y="44.0" width="2.2" height="1.5" fill="#fff8e0" opacity="0.68"/><rect x="19.0" y="47.4" width="2.2" height="1.5" fill="#c0b890" opacity="0.88"/><rect x="22.0" y="47.4" width="2.2" height="1.5" fill="#e8e0c0" opacity="0.82"/><rect x="25.0" y="47.4" width="2.2" height="1.5" fill="#fff8e0" opacity="0.99"/><rect x="28.0" y="47.4" width="2.2" height="1.5" fill="#fff8e0" opacity="0.86"/><rect x="10.0" y="50.8" width="2.2" height="1.5" fill="#e8e0c0" opacity="0.69"/><rect x="13.0" y="50.8" width="2.2" height="1.5" fill="#e8e0c0" opacity="0.81"/><rect x="22.0" y="50.8" width="2.2" height="1.5" fill="#e8e0c0" opacity="0.92"/><rect x="28.0" y="50.8" width="2.2" height="1.5" fill="#fff8e0" opacity="0.99"/><rect x="34.0" y="50.8" width="2.2" height="1.5" fill="#fff8e0" opacity="0.71"/><rect x="37.0" y="50.8" width="2.2" height="1.5" fill="#c0b890" opacity="0.77"/><rect x="42" y="0" width="14" height="50" fill="#4a4a52"/><rect x="42.5" y="0.6" width="1.7" height="1.6" fill="#f0f0f8" opacity="0.69"/><rect x="44.8" y="0.6" width="1.7" height="1.6" fill="#d0d0e0" opacity="0.76"/><rect x="47.1" y="0.6" width="1.7" height="1.6" fill="#d0d0e0" opacity="0.81"/><rect x="49.4" y="0.6" width="1.7" height="1.6" fill="#d0d0e0" opacity="0.76"/><rect x="51.7" y="0.6" width="1.7" height="1.6" fill="#d0d0e0" opacity="0.90"/><rect x="54.0" y="0.6" width="1.7" height="1.6" fill="#d0d0e0" opacity="0.95"/><rect x="42.5" y="3.2" width="1.7" height="1.6" fill="#d0d0e0" opacity="0.78"/><rect x="44.8" y="3.2" width="1.7" height="1.6" fill="#f0f0f8" opacity="0.64"/><rect x="47.1" y="3.2" width="1.7" height="1.6" fill="#d0d0e0" opacity="0.71"/><rect x="49.4" y="3.2" width="1.7" height="1.6" fill="#d0d0e0" opacity="0.90"/><rect x="54.0" y="3.2" width="1.7" height="1.6" fill="#d0d0e0" opacity="0.72"/><rect x="42.5" y="5.8" width="1.7" height="1.6" fill="#d0d0e0" opacity="0.90"/><rect x="44.8" y="5.8" width="1.7" height="1.6" fill="#f0f0f8" opacity="0.71"/><rect x="47.1" y="5.8" width="1.7" height="1.6" fill="#f0f0f8" opacity="0.59"/><rect x="49.4" y="5.8" width="1.7" height="1.6" fill="#d0d0e0" opacity="0.81"/><rect x="51.7" y="5.8" width="1.7" height="1.6" fill="#d0d0e0" opacity="0.74"/><rect x="49.4" y="8.4" width="1.7" height="1.6" fill="#f0f0f8" opacity="0.70"/><rect x="54.0" y="8.4" width="1.7" height="1.6" fill="#f0f0f8" opacity="0.57"/><rect x="42.5" y="11.0" width="1.7" height="1.6" fill="#d0d0e0" opacity="0.77"/><rect x="51.7" y="11.0" width="1.7" height="1.6" fill="#f0f0f8" opacity="0.87"/><rect x="54.0" y="11.0" width="1.7" height="1.6" fill="#d0d0e0" opacity="0.80"/><rect x="42.5" y="13.6" width="1.7" height="1.6" fill="#d0d0e0" opacity="0.63"/><rect x="47.1" y="13.6" width="1.7" height="1.6" fill="#f0f0f8" opacity="1.00"/><rect x="49.4" y="13.6" width="1.7" height="1.6" fill="#f0f0f8" opacity="0.97"/><rect x="54.0" y="13.6" width="1.7" height="1.6" fill="#f0f0f8" opacity="0.93"/><rect x="42.5" y="16.2" width="1.7" height="1.6" fill="#d0d0e0" opacity="0.58"/><rect x="44.8" y="16.2" width="1.7" height="1.6" fill="#f0f0f8" opacity="0.97"/><rect x="47.1" y="16.2" width="1.7" height="1.6" fill="#d0d0e0" opacity="0.82"/><rect x="49.4" y="16.2" width="1.7" height="1.6" fill="#f0f0f8" opacity="0.76"/><rect x="51.7" y="16.2" width="1.7" height="1.6" fill="#d0d0e0" opacity="0.61"/><rect x="54.0" y="16.2" width="1.7" height="1.6" fill="#f0f0f8" opacity="0.75"/><rect x="49.4" y="18.8" width="1.7" height="1.6" fill="#f0f0f8" opacity="0.91"/><rect x="51.7" y="18.8" width="1.7" height="1.6" fill="#f0f0f8" opacity="0.59"/><rect x="54.0" y="18.8" width="1.7" height="1.6" fill="#d0d0e0" opacity="0.95"/><rect x="42.5" y="21.4" width="1.7" height="1.6" fill="#d0d0e0" opacity="0.98"/><rect x="47.1" y="21.4" width="1.7" height="1.6" fill="#f0f0f8" opacity="0.83"/><rect x="49.4" y="21.4" width="1.7" height="1.6" fill="#d0d0e0" opacity="0.70"/><rect x="51.7" y="21.4" width="1.7" height="1.6" fill="#f0f0f8" opacity="0.83"/><rect x="54.0" y="21.4" width="1.7" height="1.6" fill="#f0f0f8" opacity="0.88"/><rect x="42.5" y="24.0" width="1.7" height="1.6" fill="#d0d0e0" opacity="0.80"/><rect x="44.8" y="24.0" width="1.7" height="1.6" fill="#f0f0f8" opacity="0.67"/><rect x="47.1" y="24.0" width="1.7" height="1.6" fill="#f0f0f8" opacity="0.56"/><rect x="49.4" y="24.0" width="1.7" height="1.6" fill="#d0d0e0" opacity="0.70"/><rect x="51.7" y="24.0" width="1.7" height="1.6" fill="#d0d0e0" opacity="0.60"/><rect x="54.0" y="24.0" width="1.7" height="1.6" fill="#d0d0e0" opacity="0.60"/><rect x="44.8" y="26.6" width="1.7" height="1.6" fill="#f0f0f8" opacity="0.80"/><rect x="49.4" y="26.6" width="1.7" height="1.6" fill="#f0f0f8" opacity="0.99"/><rect x="51.7" y="26.6" width="1.7" height="1.6" fill="#d0d0e0" opacity="1.00"/><rect x="42.5" y="29.2" width="1.7" height="1.6" fill="#d0d0e0" opacity="0.74"/><rect x="44.8" y="29.2" width="1.7" height="1.6" fill="#d0d0e0" opacity="0.61"/><rect x="47.1" y="29.2" width="1.7" height="1.6" fill="#d0d0e0" opacity="0.91"/><rect x="49.4" y="29.2" width="1.7" height="1.6" fill="#f0f0f8" opacity="0.75"/><rect x="42.5" y="31.8" width="1.7" height="1.6" fill="#d0d0e0" opacity="0.75"/><rect x="47.1" y="31.8" width="1.7" height="1.6" fill="#f0f0f8" opacity="0.61"/><rect x="49.4" y="31.8" width="1.7" height="1.6" fill="#f0f0f8" opacity="0.87"/><rect x="51.7" y="31.8" width="1.7" height="1.6" fill="#f0f0f8" opacity="0.92"/><rect x="42.5" y="34.4" width="1.7" height="1.6" fill="#d0d0e0" opacity="0.63"/><rect x="44.8" y="34.4" width="1.7" height="1.6" fill="#f0f0f8" opacity="0.81"/><rect x="47.1" y="34.4" width="1.7" height="1.6" fill="#f0f0f8" opacity="0.86"/><rect x="49.4" y="34.4" width="1.7" height="1.6" fill="#f0f0f8" opacity="0.78"/><rect x="51.7" y="34.4" width="1.7" height="1.6" fill="#d0d0e0" opacity="0.93"/><rect x="42.5" y="37.0" width="1.7" height="1.6" fill="#f0f0f8" opacity="0.73"/><rect x="47.1" y="37.0" width="1.7" height="1.6" fill="#d0d0e0" opacity="0.66"/><rect x="49.4" y="37.0" width="1.7" height="1.6" fill="#d0d0e0" opacity="0.57"/><rect x="51.7" y="37.0" width="1.7" height="1.6" fill="#f0f0f8" opacity="0.71"/><rect x="44.8" y="39.6" width="1.7" height="1.6" fill="#d0d0e0" opacity="0.87"/><rect x="51.7" y="39.6" width="1.7" height="1.6" fill="#d0d0e0" opacity="0.81"/><rect x="42.5" y="42.2" width="1.7" height="1.6" fill="#f0f0f8" opacity="0.98"/><rect x="44.8" y="42.2" width="1.7" height="1.6" fill="#f0f0f8" opacity="0.79"/><rect x="47.1" y="42.2" width="1.7" height="1.6" fill="#f0f0f8" opacity="0.66"/><rect x="49.4" y="42.2" width="1.7" height="1.6" fill="#f0f0f8" opacity="0.63"/><rect x="51.7" y="42.2" width="1.7" height="1.6" fill="#f0f0f8" opacity="0.56"/><rect x="42.5" y="44.8" width="1.7" height="1.6" fill="#d0d0e0" opacity="0.56"/><rect x="44.8" y="44.8" width="1.7" height="1.6" fill="#d0d0e0" opacity="0.79"/><rect x="47.1" y="44.8" width="1.7" height="1.6" fill="#f0f0f8" opacity="0.71"/><rect x="49.4" y="44.8" width="1.7" height="1.6" fill="#f0f0f8" opacity="0.57"/><rect x="51.7" y="44.8" width="1.7" height="1.6" fill="#d0d0e0" opacity="0.81"/><rect x="42.5" y="47.4" width="1.7" height="1.6" fill="#f0f0f8" opacity="0.73"/><rect x="44.8" y="47.4" width="1.7" height="1.6" fill="#f0f0f8" opacity="0.94"/><rect x="47.1" y="47.4" width="1.7" height="1.6" fill="#d0d0e0" opacity="0.89"/><rect x="49.4" y="47.4" width="1.7" height="1.6" fill="#f0f0f8" opacity="0.97"/><rect x="51.7" y="47.4" width="1.7" height="1.6" fill="#d0d0e0" opacity="0.82"/><rect x="54.0" y="47.4" width="1.7" height="1.6" fill="#f0f0f8" opacity="0.73"/><rect x="56" y="3" width="11" height="44" fill="#34343a"/><rect x="61.1" y="3.6" width="1.7" height="1.6" fill="#e8e8f0" opacity="0.93"/><rect x="63.4" y="6.4" width="1.7" height="1.6" fill="#c8c8d8" opacity="0.93"/><rect x="56.5" y="9.2" width="1.7" height="1.6" fill="#e8e8f0" opacity="0.98"/><rect x="61.1" y="9.2" width="1.7" height="1.6" fill="#c8c8d8" opacity="0.85"/><rect x="63.4" y="9.2" width="1.7" height="1.6" fill="#e8e8f0" opacity="0.79"/><rect x="56.5" y="12.0" width="1.7" height="1.6" fill="#c8c8d8" opacity="0.64"/><rect x="61.1" y="12.0" width="1.7" height="1.6" fill="#c8c8d8" opacity="0.99"/><rect x="58.8" y="17.6" width="1.7" height="1.6" fill="#c8c8d8" opacity="0.96"/><rect x="58.8" y="20.4" width="1.7" height="1.6" fill="#e8e8f0" opacity="0.66"/><rect x="61.1" y="20.4" width="1.7" height="1.6" fill="#c8c8d8" opacity="0.66"/><rect x="63.4" y="20.4" width="1.7" height="1.6" fill="#e8e8f0" opacity="0.69"/><rect x="58.8" y="23.2" width="1.7" height="1.6" fill="#c8c8d8" opacity="0.59"/><rect x="56.5" y="26.0" width="1.7" height="1.6" fill="#e8e8f0" opacity="0.95"/><rect x="63.4" y="26.0" width="1.7" height="1.6" fill="#e8e8f0" opacity="0.88"/><rect x="56.5" y="28.8" width="1.7" height="1.6" fill="#c8c8d8" opacity="0.82"/><rect x="63.4" y="28.8" width="1.7" height="1.6" fill="#c8c8d8" opacity="0.76"/><rect x="56.5" y="31.6" width="1.7" height="1.6" fill="#c8c8d8" opacity="0.76"/><rect x="58.8" y="31.6" width="1.7" height="1.6" fill="#e8e8f0" opacity="0.70"/><rect x="61.1" y="31.6" width="1.7" height="1.6" fill="#c8c8d8" opacity="0.99"/><rect x="63.4" y="31.6" width="1.7" height="1.6" fill="#c8c8d8" opacity="0.62"/><rect x="58.8" y="34.4" width="1.7" height="1.6" fill="#c8c8d8" opacity="0.77"/><rect x="61.1" y="34.4" width="1.7" height="1.6" fill="#e8e8f0" opacity="0.68"/><rect x="56.5" y="37.2" width="1.7" height="1.6" fill="#e8e8f0" opacity="0.82"/><rect x="58.8" y="37.2" width="1.7" height="1.6" fill="#e8e8f0" opacity="0.78"/><rect x="63.4" y="37.2" width="1.7" height="1.6" fill="#e8e8f0" opacity="0.78"/><rect x="63.4" y="40.0" width="1.7" height="1.6" fill="#c8c8d8" opacity="0.61"/><rect x="56.5" y="42.8" width="1.7" height="1.6" fill="#c8c8d8" opacity="0.92"/><rect x="58.8" y="42.8" width="1.7" height="1.6" fill="#c8c8d8" opacity="0.67"/><rect x="67" y="7.5" width="15" height="31" fill="#3a3636"/><rect x="69.9" y="8.1" width="1.8" height="1.5" fill="#e0d8d0" opacity="0.55"/><rect x="77.1" y="8.1" width="1.8" height="1.5" fill="#e0d8d0" opacity="0.74"/><rect x="72.3" y="10.9" width="1.8" height="1.5" fill="#c8c0b8" opacity="0.86"/><rect x="74.7" y="10.9" width="1.8" height="1.5" fill="#c8c0b8" opacity="0.68"/><rect x="77.1" y="10.9" width="1.8" height="1.5" fill="#c8c0b8" opacity="0.84"/><rect x="79.5" y="10.9" width="1.8" height="1.5" fill="#c8c0b8" opacity="0.72"/><rect x="67.5" y="13.7" width="1.8" height="1.5" fill="#c8c0b8" opacity="0.91"/><rect x="69.9" y="13.7" width="1.8" height="1.5" fill="#c8c0b8" opacity="0.81"/><rect x="72.3" y="13.7" width="1.8" height="1.5" fill="#c8c0b8" opacity="0.70"/><rect x="67.5" y="16.5" width="1.8" height="1.5" fill="#c8c0b8" opacity="0.95"/><rect x="72.3" y="16.5" width="1.8" height="1.5" fill="#c8c0b8" opacity="0.80"/><rect x="74.7" y="16.5" width="1.8" height="1.5" fill="#c8c0b8" opacity="0.79"/><rect x="79.5" y="16.5" width="1.8" height="1.5" fill="#c8c0b8" opacity="0.73"/><rect x="67.5" y="19.3" width="1.8" height="1.5" fill="#c8c0b8" opacity="0.75"/><rect x="69.9" y="19.3" width="1.8" height="1.5" fill="#e0d8d0" opacity="0.79"/><rect x="72.3" y="19.3" width="1.8" height="1.5" fill="#c8c0b8" opacity="0.78"/><rect x="79.5" y="19.3" width="1.8" height="1.5" fill="#e0d8d0" opacity="0.98"/><rect x="67.5" y="22.1" width="1.8" height="1.5" fill="#c8c0b8" opacity="0.90"/><rect x="79.5" y="22.1" width="1.8" height="1.5" fill="#c8c0b8" opacity="0.69"/><rect x="72.3" y="24.9" width="1.8" height="1.5" fill="#e0d8d0" opacity="0.85"/><rect x="74.7" y="24.9" width="1.8" height="1.5" fill="#c8c0b8" opacity="0.92"/><rect x="67.5" y="27.7" width="1.8" height="1.5" fill="#e0d8d0" opacity="0.79"/><rect x="72.3" y="27.7" width="1.8" height="1.5" fill="#e0d8d0" opacity="0.74"/><rect x="74.7" y="27.7" width="1.8" height="1.5" fill="#e0d8d0" opacity="0.71"/><rect x="67.5" y="30.5" width="1.8" height="1.5" fill="#c8c0b8" opacity="0.55"/><rect x="69.9" y="30.5" width="1.8" height="1.5" fill="#e0d8d0" opacity="0.96"/><rect x="72.3" y="30.5" width="1.8" height="1.5" fill="#e0d8d0" opacity="0.81"/><rect x="77.1" y="30.5" width="1.8" height="1.5" fill="#c8c0b8" opacity="0.90"/><rect x="72.3" y="33.3" width="1.8" height="1.5" fill="#e0d8d0" opacity="0.81"/><rect x="74.7" y="33.3" width="1.8" height="1.5" fill="#e0d8d0" opacity="0.62"/><rect x="77.1" y="33.3" width="1.8" height="1.5" fill="#e0d8d0" opacity="0.56"/><rect x="79.5" y="33.3" width="1.8" height="1.5" fill="#c8c0b8" opacity="0.92"/><rect x="72.3" y="36.1" width="1.8" height="1.5" fill="#e0d8d0" opacity="0.86"/><rect x="77.1" y="36.1" width="1.8" height="1.5" fill="#e0d8d0" opacity="0.71"/><rect x="79.5" y="36.1" width="1.8" height="1.5" fill="#c8c0b8" opacity="0.83"/><rect x="74" y="25" width="23" height="28" fill="#2e2212"/><rect x="79.7" y="25.6" width="2" height="1.6" fill="#d8b068" opacity="0.75"/><rect x="82.3" y="25.6" width="2" height="1.6" fill="#d8b068" opacity="0.65"/><rect x="84.9" y="25.6" width="2" height="1.6" fill="#d8b068" opacity="0.75"/><rect x="90.1" y="25.6" width="2" height="1.6" fill="#d8b068" opacity="0.62"/><rect x="92.7" y="25.6" width="2" height="1.6" fill="#d8b068" opacity="0.69"/><rect x="79.7" y="28.6" width="2" height="1.6" fill="#f0c880" opacity="0.98"/><rect x="82.3" y="28.6" width="2" height="1.6" fill="#d8b068" opacity="0.66"/><rect x="84.9" y="28.6" width="2" height="1.6" fill="#d8b068" opacity="0.74"/><rect x="87.5" y="28.6" width="2" height="1.6" fill="#f0c880" opacity="0.56"/><rect x="92.7" y="28.6" width="2" height="1.6" fill="#d8b068" opacity="0.71"/><rect x="74.5" y="31.6" width="2" height="1.6" fill="#f0c880" opacity="0.73"/><rect x="77.1" y="31.6" width="2" height="1.6" fill="#f0c880" opacity="0.79"/><rect x="79.7" y="31.6" width="2" height="1.6" fill="#f0c880" opacity="0.84"/><rect x="84.9" y="31.6" width="2" height="1.6" fill="#f0c880" opacity="0.80"/><rect x="87.5" y="31.6" width="2" height="1.6" fill="#f0c880" opacity="0.68"/><rect x="90.1" y="31.6" width="2" height="1.6" fill="#d8b068" opacity="0.68"/><rect x="92.7" y="31.6" width="2" height="1.6" fill="#d8b068" opacity="0.66"/><rect x="74.5" y="34.6" width="2" height="1.6" fill="#d8b068" opacity="0.67"/><rect x="79.7" y="34.6" width="2" height="1.6" fill="#f0c880" opacity="0.76"/><rect x="84.9" y="34.6" width="2" height="1.6" fill="#f0c880" opacity="0.71"/><rect x="90.1" y="34.6" width="2" height="1.6" fill="#d8b068" opacity="0.68"/><rect x="92.7" y="34.6" width="2" height="1.6" fill="#d8b068" opacity="0.65"/><rect x="74.5" y="37.6" width="2" height="1.6" fill="#d8b068" opacity="0.97"/><rect x="79.7" y="37.6" width="2" height="1.6" fill="#f0c880" opacity="0.81"/><rect x="82.3" y="37.6" width="2" height="1.6" fill="#d8b068" opacity="0.73"/><rect x="84.9" y="37.6" width="2" height="1.6" fill="#d8b068" opacity="0.94"/><rect x="87.5" y="37.6" width="2" height="1.6" fill="#d8b068" opacity="0.79"/><rect x="90.1" y="37.6" width="2" height="1.6" fill="#f0c880" opacity="0.56"/><rect x="74.5" y="40.6" width="2" height="1.6" fill="#d8b068" opacity="0.73"/><rect x="77.1" y="40.6" width="2" height="1.6" fill="#d8b068" opacity="0.90"/><rect x="79.7" y="40.6" width="2" height="1.6" fill="#d8b068" opacity="0.85"/><rect x="82.3" y="40.6" width="2" height="1.6" fill="#f0c880" opacity="0.91"/><rect x="87.5" y="40.6" width="2" height="1.6" fill="#f0c880" opacity="0.59"/><rect x="90.1" y="40.6" width="2" height="1.6" fill="#f0c880" opacity="0.68"/><rect x="92.7" y="40.6" width="2" height="1.6" fill="#f0c880" opacity="0.90"/><rect x="79.7" y="43.6" width="2" height="1.6" fill="#f0c880" opacity="0.63"/><rect x="82.3" y="43.6" width="2" height="1.6" fill="#f0c880" opacity="0.95"/><rect x="84.9" y="43.6" width="2" height="1.6" fill="#f0c880" opacity="0.66"/><rect x="90.1" y="43.6" width="2" height="1.6" fill="#d8b068" opacity="0.63"/><rect x="92.7" y="43.6" width="2" height="1.6" fill="#d8b068" opacity="0.87"/><rect x="74.5" y="46.6" width="2" height="1.6" fill="#d8b068" opacity="0.82"/><rect x="77.1" y="46.6" width="2" height="1.6" fill="#f0c880" opacity="0.62"/><rect x="82.3" y="46.6" width="2" height="1.6" fill="#d8b068" opacity="0.80"/><rect x="84.9" y="46.6" width="2" height="1.6" fill="#f0c880" opacity="0.87"/><rect x="87.5" y="46.6" width="2" height="1.6" fill="#f0c880" opacity="0.85"/><rect x="90.1" y="46.6" width="2" height="1.6" fill="#d8b068" opacity="0.60"/><rect x="82.3" y="49.6" width="2" height="1.6" fill="#d8b068" opacity="0.99"/><rect x="87.5" y="49.6" width="2" height="1.6" fill="#f0c880" opacity="0.64"/><rect x="101" y="28" width="11" height="25" fill="#18161a"/><rect x="102" y="29" width="9" height="2.5" fill="#e8e8f0"/><rect x="101.5" y="33.6" width="1.6" height="1.4" fill="#c0c0d0" opacity="1.00"/><rect x="106.5" y="33.6" width="1.6" height="1.4" fill="#c0c0d0" opacity="0.71"/><rect x="101.5" y="42.6" width="1.6" height="1.4" fill="#c0c0d0" opacity="0.77"/><rect x="104.0" y="42.6" width="1.6" height="1.4" fill="#c0c0d0" opacity="0.63"/><rect x="106.5" y="42.6" width="1.6" height="1.4" fill="#c0c0d0" opacity="0.79"/><rect x="109.0" y="42.6" width="1.6" height="1.4" fill="#c0c0d0" opacity="0.63"/><rect x="104.0" y="45.6" width="1.6" height="1.4" fill="#c0c0d0" opacity="0.61"/><rect x="106.5" y="48.6" width="1.6" height="1.4" fill="#c0c0d0" opacity="0.61"/><rect x="104.0" y="51.6" width="1.6" height="1.4" fill="#c0c0d0" opacity="0.81"/><rect x="106.5" y="51.6" width="1.6" height="1.4" fill="#c0c0d0" opacity="0.80"/><rect x="52" y="38" width="18" height="15" fill="#1c1814"/><path d="M126 60 L128 30 L134 26 L140 18 L150 14 L158 20 L164 18 L170 28 L176 26 L176 62Z" fill="#1a120c"/><rect x="140.5" y="14.6" width="1.6" height="1.2" fill="#e0d0b0" opacity="0.82"/><rect x="152.5" y="14.6" width="1.6" height="1.2" fill="#e0d0b0" opacity="0.56"/><rect x="158.5" y="14.6" width="1.6" height="1.2" fill="#e0d0b0" opacity="0.69"/><rect x="140.5" y="17.6" width="1.6" height="1.2" fill="#e0d0b0" opacity="0.75"/><rect x="143.5" y="17.6" width="1.6" height="1.2" fill="#e0d0b0" opacity="0.75"/><rect x="149.5" y="17.6" width="1.6" height="1.2" fill="#e0d0b0" opacity="0.57"/><rect x="143.5" y="20.6" width="1.6" height="1.2" fill="#e0d0b0" opacity="0.60"/><rect x="152.5" y="20.6" width="1.6" height="1.2" fill="#e0d0b0" opacity="0.55"/><rect x="149.5" y="23.6" width="1.6" height="1.2" fill="#e0d0b0" opacity="0.59"/><rect x="155.5" y="23.6" width="1.6" height="1.2" fill="#e0d0b0" opacity="0.93"/><rect x="158.5" y="23.6" width="1.6" height="1.2" fill="#e0d0b0" opacity="0.98"/><circle cx="141" cy="46" r="1.4" fill="#ffd090"/><circle cx="160" cy="50" r="1.4" fill="#ffd090"/><circle cx="118" cy="50" r="1.4" fill="#ffd090"/><circle cx="150" cy="56" r="1.4" fill="#ffd090"/><rect x="0" y="52" width="176" height="47" fill="#2a180c"/><rect x="55" y="52" width="75" height="5" fill="#3e2a1a"/><circle cx="30" cy="58" r="1.1" fill="#ffc080"/><circle cx="40" cy="56" r="1.1" fill="#ffc080"/><circle cx="96" cy="56" r="1.1" fill="#ffc080"/><circle cx="112" cy="55" r="1.1" fill="#ffc080"/><circle cx="20" cy="60" r="1.1" fill="#ffc080"/><path d="M0 62 L38 57 L64 60 L92 61 L106 61 L103 95 L0 95Z" fill="#7a4018"/><path d="M0 66 L40 58 L64 60 L30 82 L16 95 L0 95Z" fill="#a05a28"/><path d="M0 86 Q26 70 62 60.5" stroke="#f4c888" stroke-width="3.6" fill="none"/><path d="M0 93 Q30 76 64 62" stroke="#e09050" stroke-width="2.4" fill="none"/><path d="M0 74 Q20 64 48 58" stroke="#e8a060" stroke-width="1.8" fill="none"/><path d="M16 95 L90 61 L106 61 L103 95Z" fill="url(#roadA)"/><path d="M36 95 L94 62 M56 95 L97 62 M76 95 L100 62 M92 95 L103 62" stroke="#e8b080" stroke-width="0.9" opacity="0.55"/><path d="M103 95 L106 61 L114 61 L136 95Z" fill="#2a180c"/><path d="M106 62 L132 95" stroke="#8a5a30" stroke-width="1"/><path d="M114 61 L132 58 L176 68 L176 95 L136 95Z" fill="#c47840"/><path d="M122 62 L176 84 M128 61 L176 76" stroke="#eab888" stroke-width="1" opacity="0.55"/><path d="M143 60 L143 95 M165 62 L165 90" stroke="#c8a070" stroke-width="0.7"/><path d="M143 61 Q140 59 136 60" stroke="#c8a070" stroke-width="0.6" fill="none"/><rect x="66" y="54" width="56" height="3" fill="#6a4828"/><path d="M30 95 Q55 80 80 70" stroke="#f8ece0" stroke-width="6" fill="none" opacity="0.85"/></g><rect x="0" y="95.8" width="176" height="3.2" fill="#c2c2c6"/><rect x="10" y="96" width="20" height="1" fill="#707078"/><rect x="150" y="96" width="22" height="1" fill="#707078"/><circle cx="4.5" cy="94.5" r="3.2" fill="#dde6ee"/><path d="M2.5 94 Q4.5 91.5 7 94.5" stroke="#2a5a90" stroke-width="1.1" fill="none"/></symbol>
<symbol id="sB" viewBox="0 0 176 99"><rect width="176" height="99" fill="url(#skyB)"/><g filter="url(#bl)"><path d="M0 22 L6 18 L12 26 L14 85 L0 85Z" fill="#1e2018" opacity="0.9"/><rect x="10" y="40" width="14" height="42" fill="#0c0e10"/><rect x="19.5" y="40.6" width="1.8" height="1.5" fill="#a0a898" opacity="0.88"/><rect x="13.5" y="44.1" width="1.8" height="1.5" fill="#a0a898" opacity="0.69"/><rect x="16.5" y="47.6" width="1.8" height="1.5" fill="#c8c0a0" opacity="0.60"/><rect x="19.5" y="51.1" width="1.8" height="1.5" fill="#c8c0a0" opacity="0.77"/><rect x="13.5" y="54.6" width="1.8" height="1.5" fill="#a0a898" opacity="0.82"/><rect x="19.5" y="54.6" width="1.8" height="1.5" fill="#c8c0a0" opacity="0.62"/><rect x="16.5" y="58.1" width="1.8" height="1.5" fill="#c8c0a0" opacity="0.93"/><rect x="10.5" y="61.6" width="1.8" height="1.5" fill="#a0a898" opacity="0.55"/><rect x="16.5" y="72.1" width="1.8" height="1.5" fill="#a0a898" opacity="0.55"/><path d="M22 50 Q35 38 50 44 Q62 36 70 42 L70 86 L22 86Z" fill="#0a0c0c"/><rect x="55" y="32" width="15" height="34" fill="#0c0e10"/><rect x="58.5" y="32.6" width="1.8" height="1.5" fill="#b0b8b0" opacity="0.90"/><rect x="61.5" y="32.6" width="1.8" height="1.5" fill="#b0b8b0" opacity="0.73"/><rect x="64.5" y="32.6" width="1.8" height="1.5" fill="#b0b8b0" opacity="0.56"/><rect x="55.5" y="36.2" width="1.8" height="1.5" fill="#b0b8b0" opacity="0.60"/><rect x="58.5" y="36.2" width="1.8" height="1.5" fill="#b0b8b0" opacity="0.83"/><rect x="58.5" y="39.8" width="1.8" height="1.5" fill="#b0b8b0" opacity="0.91"/><rect x="64.5" y="39.8" width="1.8" height="1.5" fill="#b0b8b0" opacity="0.61"/><rect x="64.5" y="43.4" width="1.8" height="1.5" fill="#b0b8b0" opacity="0.59"/><rect x="58.5" y="47.0" width="1.8" height="1.5" fill="#b0b8b0" opacity="0.66"/><rect x="61.5" y="47.0" width="1.8" height="1.5" fill="#b0b8b0" opacity="0.56"/><rect x="61.5" y="50.6" width="1.8" height="1.5" fill="#b0b8b0" opacity="0.63"/><rect x="61.5" y="54.2" width="1.8" height="1.5" fill="#b0b8b0" opacity="0.79"/><rect x="58.5" y="57.8" width="1.8" height="1.5" fill="#b0b8b0" opacity="1.00"/><rect x="67.5" y="57.8" width="1.8" height="1.5" fill="#b0b8b0" opacity="0.58"/><rect x="70" y="7" width="21" height="58" fill="#162026"/><rect x="72" y="6" width="16" height="2" fill="#b0c0b8"/><rect x="72.9" y="8.6" width="1.8" height="1.6" fill="#e8f4e8" opacity="0.94"/><rect x="77.7" y="8.6" width="1.8" height="1.6" fill="#c8e0d0" opacity="0.79"/><rect x="80.1" y="8.6" width="1.8" height="1.6" fill="#e8f4e8" opacity="0.82"/><rect x="82.5" y="8.6" width="1.8" height="1.6" fill="#e8f4e8" opacity="0.92"/><rect x="87.3" y="8.6" width="1.8" height="1.6" fill="#c8e0d0" opacity="0.72"/><rect x="70.5" y="11.6" width="1.8" height="1.6" fill="#e8f4e8" opacity="0.70"/><rect x="72.9" y="11.6" width="1.8" height="1.6" fill="#e8f4e8" opacity="0.56"/><rect x="75.3" y="11.6" width="1.8" height="1.6" fill="#ffffff" opacity="0.57"/><rect x="77.7" y="11.6" width="1.8" height="1.6" fill="#ffffff" opacity="0.61"/><rect x="80.1" y="11.6" width="1.8" height="1.6" fill="#e8f4e8" opacity="0.78"/><rect x="82.5" y="11.6" width="1.8" height="1.6" fill="#ffffff" opacity="0.81"/><rect x="87.3" y="11.6" width="1.8" height="1.6" fill="#ffffff" opacity="0.57"/><rect x="84.9" y="14.6" width="1.8" height="1.6" fill="#c8e0d0" opacity="0.91"/><rect x="87.3" y="14.6" width="1.8" height="1.6" fill="#e8f4e8" opacity="0.86"/><rect x="70.5" y="17.6" width="1.8" height="1.6" fill="#c8e0d0" opacity="0.88"/><rect x="72.9" y="17.6" width="1.8" height="1.6" fill="#ffffff" opacity="0.66"/><rect x="80.1" y="17.6" width="1.8" height="1.6" fill="#ffffff" opacity="0.70"/><rect x="82.5" y="17.6" width="1.8" height="1.6" fill="#c8e0d0" opacity="0.78"/><rect x="72.9" y="20.6" width="1.8" height="1.6" fill="#e8f4e8" opacity="0.55"/><rect x="77.7" y="20.6" width="1.8" height="1.6" fill="#c8e0d0" opacity="0.73"/><rect x="87.3" y="20.6" width="1.8" height="1.6" fill="#ffffff" opacity="0.69"/><rect x="77.7" y="23.6" width="1.8" height="1.6" fill="#e8f4e8" opacity="0.81"/><rect x="80.1" y="23.6" width="1.8" height="1.6" fill="#e8f4e8" opacity="0.69"/><rect x="82.5" y="23.6" width="1.8" height="1.6" fill="#c8e0d0" opacity="0.71"/><rect x="87.3" y="23.6" width="1.8" height="1.6" fill="#e8f4e8" opacity="0.93"/><rect x="70.5" y="26.6" width="1.8" height="1.6" fill="#e8f4e8" opacity="0.67"/><rect x="72.9" y="26.6" width="1.8" height="1.6" fill="#e8f4e8" opacity="0.89"/><rect x="77.7" y="26.6" width="1.8" height="1.6" fill="#e8f4e8" opacity="0.65"/><rect x="80.1" y="26.6" width="1.8" height="1.6" fill="#e8f4e8" opacity="0.95"/><rect x="82.5" y="26.6" width="1.8" height="1.6" fill="#ffffff" opacity="0.84"/><rect x="84.9" y="26.6" width="1.8" height="1.6" fill="#ffffff" opacity="0.58"/><rect x="87.3" y="26.6" width="1.8" height="1.6" fill="#e8f4e8" opacity="0.59"/><rect x="75.3" y="29.6" width="1.8" height="1.6" fill="#e8f4e8" opacity="0.55"/><rect x="77.7" y="29.6" width="1.8" height="1.6" fill="#ffffff" opacity="0.94"/><rect x="84.9" y="29.6" width="1.8" height="1.6" fill="#c8e0d0" opacity="0.94"/><rect x="87.3" y="29.6" width="1.8" height="1.6" fill="#c8e0d0" opacity="0.73"/><rect x="72.9" y="32.6" width="1.8" height="1.6" fill="#e8f4e8" opacity="0.94"/><rect x="77.7" y="32.6" width="1.8" height="1.6" fill="#ffffff" opacity="0.70"/><rect x="80.1" y="32.6" width="1.8" height="1.6" fill="#ffffff" opacity="0.73"/><rect x="87.3" y="32.6" width="1.8" height="1.6" fill="#c8e0d0" opacity="0.80"/><rect x="72.9" y="35.6" width="1.8" height="1.6" fill="#ffffff" opacity="0.87"/><rect x="77.7" y="35.6" width="1.8" height="1.6" fill="#e8f4e8" opacity="0.62"/><rect x="80.1" y="35.6" width="1.8" height="1.6" fill="#e8f4e8" opacity="0.71"/><rect x="82.5" y="35.6" width="1.8" height="1.6" fill="#c8e0d0" opacity="0.79"/><rect x="75.3" y="38.6" width="1.8" height="1.6" fill="#ffffff" opacity="0.83"/><rect x="80.1" y="38.6" width="1.8" height="1.6" fill="#e8f4e8" opacity="0.90"/><rect x="82.5" y="38.6" width="1.8" height="1.6" fill="#ffffff" opacity="0.99"/><rect x="84.9" y="38.6" width="1.8" height="1.6" fill="#c8e0d0" opacity="0.71"/><rect x="87.3" y="38.6" width="1.8" height="1.6" fill="#c8e0d0" opacity="0.61"/><rect x="70.5" y="41.6" width="1.8" height="1.6" fill="#c8e0d0" opacity="0.59"/><rect x="77.7" y="41.6" width="1.8" height="1.6" fill="#ffffff" opacity="0.65"/><rect x="82.5" y="41.6" width="1.8" height="1.6" fill="#e8f4e8" opacity="0.83"/><rect x="84.9" y="41.6" width="1.8" height="1.6" fill="#ffffff" opacity="0.78"/><rect x="70.5" y="44.6" width="1.8" height="1.6" fill="#ffffff" opacity="0.71"/><rect x="72.9" y="44.6" width="1.8" height="1.6" fill="#e8f4e8" opacity="0.94"/><rect x="80.1" y="44.6" width="1.8" height="1.6" fill="#c8e0d0" opacity="0.90"/><rect x="82.5" y="44.6" width="1.8" height="1.6" fill="#c8e0d0" opacity="0.65"/><rect x="70.5" y="47.6" width="1.8" height="1.6" fill="#e8f4e8" opacity="0.70"/><rect x="75.3" y="47.6" width="1.8" height="1.6" fill="#ffffff" opacity="0.56"/><rect x="84.9" y="47.6" width="1.8" height="1.6" fill="#e8f4e8" opacity="0.80"/><rect x="87.3" y="47.6" width="1.8" height="1.6" fill="#c8e0d0" opacity="0.98"/><rect x="72.9" y="50.6" width="1.8" height="1.6" fill="#c8e0d0" opacity="0.56"/><rect x="77.7" y="50.6" width="1.8" height="1.6" fill="#c8e0d0" opacity="0.64"/><rect x="84.9" y="50.6" width="1.8" height="1.6" fill="#c8e0d0" opacity="0.65"/><rect x="70.5" y="53.6" width="1.8" height="1.6" fill="#c8e0d0" opacity="0.98"/><rect x="72.9" y="53.6" width="1.8" height="1.6" fill="#c8e0d0" opacity="0.68"/><rect x="75.3" y="53.6" width="1.8" height="1.6" fill="#c8e0d0" opacity="0.94"/><rect x="77.7" y="53.6" width="1.8" height="1.6" fill="#c8e0d0" opacity="0.86"/><rect x="82.5" y="53.6" width="1.8" height="1.6" fill="#ffffff" opacity="0.57"/><rect x="72.9" y="56.6" width="1.8" height="1.6" fill="#c8e0d0" opacity="0.63"/><rect x="80.1" y="56.6" width="1.8" height="1.6" fill="#e8f4e8" opacity="0.91"/><rect x="82.5" y="56.6" width="1.8" height="1.6" fill="#e8f4e8" opacity="0.61"/><rect x="84.9" y="56.6" width="1.8" height="1.6" fill="#ffffff" opacity="0.88"/><rect x="87.3" y="56.6" width="1.8" height="1.6" fill="#e8f4e8" opacity="0.76"/><rect x="70.5" y="59.6" width="1.8" height="1.6" fill="#c8e0d0" opacity="0.70"/><rect x="82.5" y="59.6" width="1.8" height="1.6" fill="#e8f4e8" opacity="0.64"/><rect x="87.3" y="59.6" width="1.8" height="1.6" fill="#e8f4e8" opacity="0.78"/><rect x="100" y="48" width="11" height="20" fill="#4a5058"/><rect x="100.5" y="48.6" width="1.8" height="1.4" fill="#e0e8f0" opacity="0.86"/><rect x="105.5" y="48.6" width="1.8" height="1.4" fill="#e0e8f0" opacity="0.58"/><rect x="108.0" y="48.6" width="1.8" height="1.4" fill="#e0e8f0" opacity="0.99"/><rect x="103.0" y="51.6" width="1.8" height="1.4" fill="#e0e8f0" opacity="0.86"/><rect x="105.5" y="51.6" width="1.8" height="1.4" fill="#e0e8f0" opacity="0.79"/><rect x="103.0" y="54.6" width="1.8" height="1.4" fill="#e0e8f0" opacity="0.93"/><rect x="108.0" y="54.6" width="1.8" height="1.4" fill="#e0e8f0" opacity="0.67"/><rect x="100.5" y="57.6" width="1.8" height="1.4" fill="#e0e8f0" opacity="0.67"/><rect x="105.5" y="57.6" width="1.8" height="1.4" fill="#e0e8f0" opacity="0.73"/><rect x="100.5" y="60.6" width="1.8" height="1.4" fill="#e0e8f0" opacity="0.70"/><rect x="103.0" y="60.6" width="1.8" height="1.4" fill="#e0e8f0" opacity="0.79"/><rect x="108.0" y="63.6" width="1.8" height="1.4" fill="#e0e8f0" opacity="0.79"/><rect x="100.5" y="66.6" width="1.8" height="1.4" fill="#e0e8f0" opacity="0.72"/><rect x="103.0" y="66.6" width="1.8" height="1.4" fill="#e0e8f0" opacity="0.91"/><rect x="116" y="30" width="34" height="42" fill="#101619"/><rect x="116.5" y="31.6" width="2.2" height="1.5" fill="#ffffff" opacity="0.97"/><rect x="119.5" y="31.6" width="2.2" height="1.5" fill="#ffffff" opacity="0.88"/><rect x="131.5" y="31.6" width="2.2" height="1.5" fill="#ffffff" opacity="0.90"/><rect x="137.5" y="31.6" width="2.2" height="1.5" fill="#ffffff" opacity="0.80"/><rect x="143.5" y="31.6" width="2.2" height="1.5" fill="#ffffff" opacity="0.69"/><rect x="116.5" y="35.0" width="2.2" height="1.5" fill="#ffffff" opacity="0.84"/><rect x="122.5" y="35.0" width="2.2" height="1.5" fill="#ffffff" opacity="1.00"/><rect x="125.5" y="35.0" width="2.2" height="1.5" fill="#ffffff" opacity="0.91"/><rect x="131.5" y="35.0" width="2.2" height="1.5" fill="#e8f4d8" opacity="0.73"/><rect x="143.5" y="35.0" width="2.2" height="1.5" fill="#ffffff" opacity="0.91"/><rect x="122.5" y="38.4" width="2.2" height="1.5" fill="#c8e0c0" opacity="0.94"/><rect x="125.5" y="38.4" width="2.2" height="1.5" fill="#ffffff" opacity="0.76"/><rect x="128.5" y="38.4" width="2.2" height="1.5" fill="#e8f4d8" opacity="0.58"/><rect x="134.5" y="38.4" width="2.2" height="1.5" fill="#e8f4d8" opacity="0.79"/><rect x="140.5" y="38.4" width="2.2" height="1.5" fill="#e8f4d8" opacity="0.62"/><rect x="146.5" y="38.4" width="2.2" height="1.5" fill="#ffffff" opacity="0.94"/><rect x="116.5" y="41.8" width="2.2" height="1.5" fill="#c8e0c0" opacity="0.71"/><rect x="122.5" y="41.8" width="2.2" height="1.5" fill="#c8e0c0" opacity="0.62"/><rect x="125.5" y="41.8" width="2.2" height="1.5" fill="#e8f4d8" opacity="0.71"/><rect x="134.5" y="41.8" width="2.2" height="1.5" fill="#ffffff" opacity="0.59"/><rect x="137.5" y="41.8" width="2.2" height="1.5" fill="#c8e0c0" opacity="0.86"/><rect x="140.5" y="41.8" width="2.2" height="1.5" fill="#c8e0c0" opacity="0.88"/><rect x="143.5" y="41.8" width="2.2" height="1.5" fill="#ffffff" opacity="0.62"/><rect x="116.5" y="45.2" width="2.2" height="1.5" fill="#ffffff" opacity="0.85"/><rect x="128.5" y="45.2" width="2.2" height="1.5" fill="#ffffff" opacity="0.64"/><rect x="134.5" y="45.2" width="2.2" height="1.5" fill="#e8f4d8" opacity="0.69"/><rect x="143.5" y="45.2" width="2.2" height="1.5" fill="#c8e0c0" opacity="0.93"/><rect x="146.5" y="45.2" width="2.2" height="1.5" fill="#ffffff" opacity="0.77"/><rect x="116.5" y="48.6" width="2.2" height="1.5" fill="#e8f4d8" opacity="0.74"/><rect x="125.5" y="48.6" width="2.2" height="1.5" fill="#e8f4d8" opacity="0.87"/><rect x="128.5" y="48.6" width="2.2" height="1.5" fill="#e8f4d8" opacity="0.87"/><rect x="131.5" y="48.6" width="2.2" height="1.5" fill="#c8e0c0" opacity="0.74"/><rect x="137.5" y="48.6" width="2.2" height="1.5" fill="#e8f4d8" opacity="0.72"/><rect x="146.5" y="48.6" width="2.2" height="1.5" fill="#ffffff" opacity="0.81"/><rect x="116.5" y="52.0" width="2.2" height="1.5" fill="#e8f4d8" opacity="0.70"/><rect x="119.5" y="52.0" width="2.2" height="1.5" fill="#c8e0c0" opacity="0.72"/><rect x="134.5" y="52.0" width="2.2" height="1.5" fill="#ffffff" opacity="0.80"/><rect x="143.5" y="52.0" width="2.2" height="1.5" fill="#c8e0c0" opacity="0.63"/><rect x="146.5" y="52.0" width="2.2" height="1.5" fill="#c8e0c0" opacity="0.77"/><rect x="128.5" y="55.4" width="2.2" height="1.5" fill="#e8f4d8" opacity="0.97"/><rect x="131.5" y="55.4" width="2.2" height="1.5" fill="#c8e0c0" opacity="0.90"/><rect x="137.5" y="55.4" width="2.2" height="1.5" fill="#e8f4d8" opacity="0.93"/><rect x="143.5" y="55.4" width="2.2" height="1.5" fill="#c8e0c0" opacity="0.59"/><rect x="119.5" y="58.8" width="2.2" height="1.5" fill="#ffffff" opacity="0.64"/><rect x="122.5" y="58.8" width="2.2" height="1.5" fill="#e8f4d8" opacity="0.80"/><rect x="131.5" y="58.8" width="2.2" height="1.5" fill="#c8e0c0" opacity="0.92"/><rect x="137.5" y="58.8" width="2.2" height="1.5" fill="#c8e0c0" opacity="0.64"/><rect x="143.5" y="58.8" width="2.2" height="1.5" fill="#ffffff" opacity="0.67"/><rect x="146.5" y="58.8" width="2.2" height="1.5" fill="#c8e0c0" opacity="0.72"/><rect x="119.5" y="62.2" width="2.2" height="1.5" fill="#c8e0c0" opacity="0.78"/><rect x="122.5" y="62.2" width="2.2" height="1.5" fill="#e8f4d8" opacity="0.69"/><rect x="125.5" y="62.2" width="2.2" height="1.5" fill="#c8e0c0" opacity="0.91"/><rect x="131.5" y="62.2" width="2.2" height="1.5" fill="#e8f4d8" opacity="0.61"/><rect x="134.5" y="62.2" width="2.2" height="1.5" fill="#ffffff" opacity="0.72"/><rect x="146.5" y="62.2" width="2.2" height="1.5" fill="#c8e0c0" opacity="0.64"/><rect x="122.5" y="65.6" width="2.2" height="1.5" fill="#c8e0c0" opacity="0.55"/><rect x="125.5" y="65.6" width="2.2" height="1.5" fill="#ffffff" opacity="0.92"/><rect x="128.5" y="65.6" width="2.2" height="1.5" fill="#e8f4d8" opacity="0.91"/><rect x="131.5" y="65.6" width="2.2" height="1.5" fill="#ffffff" opacity="0.64"/><rect x="140.5" y="65.6" width="2.2" height="1.5" fill="#ffffff" opacity="0.75"/><rect x="146.5" y="65.6" width="2.2" height="1.5" fill="#c8e0c0" opacity="0.94"/><rect x="116.5" y="69.0" width="2.2" height="1.5" fill="#e8f4d8" opacity="0.94"/><rect x="119.5" y="69.0" width="2.2" height="1.5" fill="#ffffff" opacity="0.77"/><rect x="122.5" y="69.0" width="2.2" height="1.5" fill="#ffffff" opacity="0.80"/><rect x="137.5" y="69.0" width="2.2" height="1.5" fill="#e8f4d8" opacity="0.79"/><rect x="140.5" y="69.0" width="2.2" height="1.5" fill="#ffffff" opacity="0.64"/><rect x="143.5" y="69.0" width="2.2" height="1.5" fill="#e8f4d8" opacity="0.64"/><rect x="146.5" y="69.0" width="2.2" height="1.5" fill="#e8f4d8" opacity="0.74"/><path d="M148 40 Q160 34 176 38 L176 88 L148 88Z" fill="#0a0c0c"/><rect x="150.5" y="49.6" width="1.5" height="1.4" fill="#b0b8a8" opacity="0.57"/><rect x="150.5" y="64.6" width="1.5" height="1.4" fill="#b0b8a8" opacity="0.62"/><rect x="170.5" y="69.6" width="1.5" height="1.4" fill="#b0b8a8" opacity="0.60"/><circle cx="69" cy="42" r="1.7" fill="#50ff90"/><circle cx="76" cy="57" r="1.7" fill="#50ff90"/><circle cx="130" cy="52" r="1.7" fill="#50ff90"/><rect x="76" y="66" width="14" height="5" fill="#c07050" opacity="0.8"/><path d="M0 80 L176 78 L176 96 L0 96Z" fill="#0c1c1c"/><ellipse cx="105" cy="92" rx="70" ry="12" fill="#1c3c38" opacity="0.9"/><path d="M10 95 Q30 86 70 82" stroke="#5a7a70" stroke-width="0.8" fill="none"/></g><g filter="url(#bl2)"><circle cx="94" cy="76" r="2.4" fill="#ffffff"/><circle cx="101" cy="74" r="2.4" fill="#ffffff"/><circle cx="108" cy="77" r="2.4" fill="#ffffff"/><circle cx="115" cy="75" r="2.4" fill="#ffffff"/><ellipse cx="104" cy="88" rx="8" ry="6" fill="#6a9088" opacity="0.45"/></g><rect x="0" y="95.8" width="176" height="3.2" fill="#c2c2c6"/><rect x="10" y="96" width="20" height="1" fill="#707078"/><rect x="150" y="96" width="22" height="1" fill="#707078"/><circle cx="4.5" cy="94.5" r="3.2" fill="#dde6ee"/><path d="M2.5 94 Q4.5 91.5 7 94.5" stroke="#2a5a90" stroke-width="1.1" fill="none"/></symbol>
<symbol id="sB2" viewBox="0 0 176 99"><rect width="176" height="99" fill="url(#skyB)"/><g filter="url(#bl)"><path d="M0 22 L6 18 L12 26 L14 85 L0 85Z" fill="#1e2018" opacity="0.9"/><rect x="10" y="40" width="14" height="42" fill="#0c0e10"/><rect x="10.5" y="44.1" width="1.8" height="1.5" fill="#a0a898" opacity="0.68"/><rect x="10.5" y="47.6" width="1.8" height="1.5" fill="#a0a898" opacity="0.67"/><rect x="19.5" y="47.6" width="1.8" height="1.5" fill="#a0a898" opacity="0.56"/><rect x="13.5" y="54.6" width="1.8" height="1.5" fill="#a0a898" opacity="0.71"/><rect x="13.5" y="58.1" width="1.8" height="1.5" fill="#a0a898" opacity="0.91"/><rect x="13.5" y="61.6" width="1.8" height="1.5" fill="#c8c0a0" opacity="0.82"/><rect x="19.5" y="61.6" width="1.8" height="1.5" fill="#c8c0a0" opacity="0.74"/><rect x="19.5" y="65.1" width="1.8" height="1.5" fill="#c8c0a0" opacity="0.71"/><rect x="13.5" y="68.6" width="1.8" height="1.5" fill="#c8c0a0" opacity="0.93"/><rect x="10.5" y="72.1" width="1.8" height="1.5" fill="#c8c0a0" opacity="0.60"/><rect x="13.5" y="72.1" width="1.8" height="1.5" fill="#c8c0a0" opacity="0.77"/><rect x="19.5" y="72.1" width="1.8" height="1.5" fill="#a0a898" opacity="0.66"/><rect x="13.5" y="75.6" width="1.8" height="1.5" fill="#a0a898" opacity="0.72"/><rect x="16.5" y="75.6" width="1.8" height="1.5" fill="#a0a898" opacity="0.80"/><path d="M22 50 Q35 38 50 44 Q62 36 70 42 L70 86 L22 86Z" fill="#0a0c0c"/><rect x="50.5" y="46.6" width="1.5" height="1.4" fill="#a8a090" opacity="0.86"/><rect x="34.5" y="51.6" width="1.5" height="1.4" fill="#c0b8a0" opacity="0.83"/><rect x="42.5" y="56.6" width="1.5" height="1.4" fill="#c0b8a0" opacity="0.99"/><rect x="46.5" y="56.6" width="1.5" height="1.4" fill="#a8a090" opacity="0.92"/><rect x="30.5" y="61.6" width="1.5" height="1.4" fill="#c0b8a0" opacity="0.90"/><rect x="34.5" y="61.6" width="1.5" height="1.4" fill="#a8a090" opacity="0.62"/><rect x="34.5" y="66.6" width="1.5" height="1.4" fill="#a8a090" opacity="0.91"/><rect x="55" y="32" width="15" height="34" fill="#0c0e10"/><rect x="67.5" y="36.2" width="1.8" height="1.5" fill="#b0b8b0" opacity="0.89"/><rect x="58.5" y="39.8" width="1.8" height="1.5" fill="#b0b8b0" opacity="0.80"/><rect x="58.5" y="43.4" width="1.8" height="1.5" fill="#b0b8b0" opacity="0.91"/><rect x="58.5" y="47.0" width="1.8" height="1.5" fill="#b0b8b0" opacity="0.85"/><rect x="61.5" y="54.2" width="1.8" height="1.5" fill="#b0b8b0" opacity="0.59"/><rect x="55.5" y="57.8" width="1.8" height="1.5" fill="#b0b8b0" opacity="0.59"/><rect x="58.5" y="61.4" width="1.8" height="1.5" fill="#b0b8b0" opacity="0.72"/><rect x="70" y="7" width="21" height="58" fill="#162026"/><rect x="72" y="6" width="16" height="2" fill="#b0c0b8"/><rect x="70.5" y="8.6" width="1.8" height="1.6" fill="#e8f4e8" opacity="0.65"/><rect x="80.1" y="8.6" width="1.8" height="1.6" fill="#c8e0d0" opacity="0.69"/><rect x="75.3" y="11.6" width="1.8" height="1.6" fill="#e8f4e8" opacity="0.55"/><rect x="77.7" y="11.6" width="1.8" height="1.6" fill="#e8f4e8" opacity="0.75"/><rect x="82.5" y="11.6" width="1.8" height="1.6" fill="#c8e0d0" opacity="0.85"/><rect x="75.3" y="14.6" width="1.8" height="1.6" fill="#c8e0d0" opacity="0.85"/><rect x="77.7" y="14.6" width="1.8" height="1.6" fill="#ffffff" opacity="0.70"/><rect x="80.1" y="14.6" width="1.8" height="1.6" fill="#c8e0d0" opacity="0.71"/><rect x="87.3" y="14.6" width="1.8" height="1.6" fill="#ffffff" opacity="0.91"/><rect x="70.5" y="17.6" width="1.8" height="1.6" fill="#ffffff" opacity="0.77"/><rect x="72.9" y="17.6" width="1.8" height="1.6" fill="#e8f4e8" opacity="0.58"/><rect x="82.5" y="17.6" width="1.8" height="1.6" fill="#ffffff" opacity="0.95"/><rect x="70.5" y="20.6" width="1.8" height="1.6" fill="#c8e0d0" opacity="0.77"/><rect x="72.9" y="20.6" width="1.8" height="1.6" fill="#c8e0d0" opacity="0.62"/><rect x="80.1" y="20.6" width="1.8" height="1.6" fill="#c8e0d0" opacity="0.63"/><rect x="70.5" y="23.6" width="1.8" height="1.6" fill="#ffffff" opacity="0.56"/><rect x="72.9" y="23.6" width="1.8" height="1.6" fill="#c8e0d0" opacity="0.84"/><rect x="80.1" y="23.6" width="1.8" height="1.6" fill="#ffffff" opacity="0.71"/><rect x="84.9" y="23.6" width="1.8" height="1.6" fill="#ffffff" opacity="0.77"/><rect x="87.3" y="23.6" width="1.8" height="1.6" fill="#ffffff" opacity="0.71"/><rect x="70.5" y="26.6" width="1.8" height="1.6" fill="#ffffff" opacity="0.91"/><rect x="72.9" y="26.6" width="1.8" height="1.6" fill="#c8e0d0" opacity="0.88"/><rect x="75.3" y="26.6" width="1.8" height="1.6" fill="#c8e0d0" opacity="0.96"/><rect x="84.9" y="26.6" width="1.8" height="1.6" fill="#ffffff" opacity="0.63"/><rect x="87.3" y="26.6" width="1.8" height="1.6" fill="#c8e0d0" opacity="0.64"/><rect x="70.5" y="29.6" width="1.8" height="1.6" fill="#c8e0d0" opacity="0.73"/><rect x="75.3" y="29.6" width="1.8" height="1.6" fill="#c8e0d0" opacity="0.72"/><rect x="80.1" y="29.6" width="1.8" height="1.6" fill="#e8f4e8" opacity="0.97"/><rect x="84.9" y="29.6" width="1.8" height="1.6" fill="#c8e0d0" opacity="0.84"/><rect x="70.5" y="32.6" width="1.8" height="1.6" fill="#e8f4e8" opacity="0.68"/><rect x="72.9" y="32.6" width="1.8" height="1.6" fill="#ffffff" opacity="0.80"/><rect x="80.1" y="32.6" width="1.8" height="1.6" fill="#c8e0d0" opacity="0.87"/><rect x="82.5" y="32.6" width="1.8" height="1.6" fill="#c8e0d0" opacity="0.93"/><rect x="84.9" y="32.6" width="1.8" height="1.6" fill="#c8e0d0" opacity="0.90"/><rect x="87.3" y="32.6" width="1.8" height="1.6" fill="#ffffff" opacity="0.80"/><rect x="70.5" y="35.6" width="1.8" height="1.6" fill="#c8e0d0" opacity="0.67"/><rect x="72.9" y="35.6" width="1.8" height="1.6" fill="#e8f4e8" opacity="0.94"/><rect x="75.3" y="35.6" width="1.8" height="1.6" fill="#ffffff" opacity="0.86"/><rect x="77.7" y="35.6" width="1.8" height="1.6" fill="#ffffff" opacity="0.60"/><rect x="80.1" y="35.6" width="1.8" height="1.6" fill="#ffffff" opacity="0.63"/><rect x="87.3" y="35.6" width="1.8" height="1.6" fill="#c8e0d0" opacity="0.73"/><rect x="75.3" y="38.6" width="1.8" height="1.6" fill="#c8e0d0" opacity="0.77"/><rect x="77.7" y="38.6" width="1.8" height="1.6" fill="#e8f4e8" opacity="0.87"/><rect x="80.1" y="38.6" width="1.8" height="1.6" fill="#ffffff" opacity="0.78"/><rect x="87.3" y="38.6" width="1.8" height="1.6" fill="#c8e0d0" opacity="0.86"/><rect x="72.9" y="41.6" width="1.8" height="1.6" fill="#e8f4e8" opacity="0.93"/><rect x="80.1" y="41.6" width="1.8" height="1.6" fill="#ffffff" opacity="0.88"/><rect x="70.5" y="44.6" width="1.8" height="1.6" fill="#e8f4e8" opacity="0.85"/><rect x="75.3" y="44.6" width="1.8" height="1.6" fill="#c8e0d0" opacity="0.95"/><rect x="87.3" y="44.6" width="1.8" height="1.6" fill="#ffffff" opacity="0.94"/><rect x="70.5" y="47.6" width="1.8" height="1.6" fill="#c8e0d0" opacity="0.87"/><rect x="77.7" y="47.6" width="1.8" height="1.6" fill="#ffffff" opacity="0.65"/><rect x="80.1" y="47.6" width="1.8" height="1.6" fill="#e8f4e8" opacity="0.71"/><rect x="87.3" y="47.6" width="1.8" height="1.6" fill="#e8f4e8" opacity="0.86"/><rect x="70.5" y="50.6" width="1.8" height="1.6" fill="#c8e0d0" opacity="0.65"/><rect x="72.9" y="50.6" width="1.8" height="1.6" fill="#e8f4e8" opacity="0.75"/><rect x="75.3" y="50.6" width="1.8" height="1.6" fill="#c8e0d0" opacity="0.82"/><rect x="80.1" y="50.6" width="1.8" height="1.6" fill="#ffffff" opacity="0.92"/><rect x="82.5" y="50.6" width="1.8" height="1.6" fill="#e8f4e8" opacity="0.68"/><rect x="70.5" y="53.6" width="1.8" height="1.6" fill="#e8f4e8" opacity="0.65"/><rect x="75.3" y="53.6" width="1.8" height="1.6" fill="#ffffff" opacity="0.79"/><rect x="77.7" y="53.6" width="1.8" height="1.6" fill="#e8f4e8" opacity="0.56"/><rect x="80.1" y="53.6" width="1.8" height="1.6" fill="#c8e0d0" opacity="0.72"/><rect x="84.9" y="53.6" width="1.8" height="1.6" fill="#e8f4e8" opacity="0.81"/><rect x="87.3" y="53.6" width="1.8" height="1.6" fill="#ffffff" opacity="0.98"/><rect x="70.5" y="56.6" width="1.8" height="1.6" fill="#ffffff" opacity="0.94"/><rect x="80.1" y="56.6" width="1.8" height="1.6" fill="#c8e0d0" opacity="0.58"/><rect x="82.5" y="56.6" width="1.8" height="1.6" fill="#e8f4e8" opacity="0.74"/><rect x="72.9" y="59.6" width="1.8" height="1.6" fill="#ffffff" opacity="0.64"/><rect x="75.3" y="59.6" width="1.8" height="1.6" fill="#c8e0d0" opacity="0.89"/><rect x="77.7" y="59.6" width="1.8" height="1.6" fill="#ffffff" opacity="0.56"/><rect x="100" y="48" width="11" height="20" fill="#4a5058"/><rect x="100.5" y="48.6" width="1.8" height="1.4" fill="#e0e8f0" opacity="0.89"/><rect x="103.0" y="51.6" width="1.8" height="1.4" fill="#e0e8f0" opacity="0.74"/><rect x="103.0" y="57.6" width="1.8" height="1.4" fill="#e0e8f0" opacity="0.69"/><rect x="105.5" y="57.6" width="1.8" height="1.4" fill="#e0e8f0" opacity="0.86"/><rect x="108.0" y="57.6" width="1.8" height="1.4" fill="#e0e8f0" opacity="0.91"/><rect x="100.5" y="60.6" width="1.8" height="1.4" fill="#e0e8f0" opacity="0.70"/><rect x="105.5" y="60.6" width="1.8" height="1.4" fill="#e0e8f0" opacity="0.77"/><rect x="108.0" y="60.6" width="1.8" height="1.4" fill="#e0e8f0" opacity="0.91"/><rect x="100.5" y="63.6" width="1.8" height="1.4" fill="#e0e8f0" opacity="0.93"/><rect x="105.5" y="63.6" width="1.8" height="1.4" fill="#e0e8f0" opacity="0.64"/><rect x="108.0" y="63.6" width="1.8" height="1.4" fill="#e0e8f0" opacity="0.97"/><rect x="100.5" y="66.6" width="1.8" height="1.4" fill="#e0e8f0" opacity="0.98"/><rect x="105.5" y="66.6" width="1.8" height="1.4" fill="#e0e8f0" opacity="0.62"/><rect x="116" y="30" width="34" height="42" fill="#101619"/><rect x="116.5" y="31.6" width="2.2" height="1.5" fill="#e8f4d8" opacity="0.56"/><rect x="119.5" y="31.6" width="2.2" height="1.5" fill="#ffffff" opacity="0.79"/><rect x="122.5" y="31.6" width="2.2" height="1.5" fill="#e8f4d8" opacity="0.76"/><rect x="125.5" y="31.6" width="2.2" height="1.5" fill="#ffffff" opacity="0.79"/><rect x="128.5" y="31.6" width="2.2" height="1.5" fill="#c8e0c0" opacity="0.70"/><rect x="143.5" y="31.6" width="2.2" height="1.5" fill="#e8f4d8" opacity="0.96"/><rect x="146.5" y="31.6" width="2.2" height="1.5" fill="#e8f4d8" opacity="0.59"/><rect x="122.5" y="35.0" width="2.2" height="1.5" fill="#ffffff" opacity="0.81"/><rect x="131.5" y="35.0" width="2.2" height="1.5" fill="#e8f4d8" opacity="0.81"/><rect x="140.5" y="35.0" width="2.2" height="1.5" fill="#ffffff" opacity="0.85"/><rect x="146.5" y="35.0" width="2.2" height="1.5" fill="#ffffff" opacity="0.76"/><rect x="122.5" y="38.4" width="2.2" height="1.5" fill="#c8e0c0" opacity="0.82"/><rect x="125.5" y="38.4" width="2.2" height="1.5" fill="#e8f4d8" opacity="0.91"/><rect x="131.5" y="38.4" width="2.2" height="1.5" fill="#ffffff" opacity="0.90"/><rect x="143.5" y="38.4" width="2.2" height="1.5" fill="#e8f4d8" opacity="0.96"/><rect x="146.5" y="38.4" width="2.2" height="1.5" fill="#e8f4d8" opacity="0.57"/><rect x="116.5" y="41.8" width="2.2" height="1.5" fill="#e8f4d8" opacity="0.97"/><rect x="125.5" y="41.8" width="2.2" height="1.5" fill="#ffffff" opacity="0.84"/><rect x="131.5" y="41.8" width="2.2" height="1.5" fill="#e8f4d8" opacity="0.76"/><rect x="146.5" y="41.8" width="2.2" height="1.5" fill="#e8f4d8" opacity="0.91"/><rect x="116.5" y="45.2" width="2.2" height="1.5" fill="#ffffff" opacity="0.70"/><rect x="125.5" y="45.2" width="2.2" height="1.5" fill="#e8f4d8" opacity="0.58"/><rect x="128.5" y="45.2" width="2.2" height="1.5" fill="#ffffff" opacity="0.92"/><rect x="143.5" y="45.2" width="2.2" height="1.5" fill="#e8f4d8" opacity="0.85"/><rect x="125.5" y="48.6" width="2.2" height="1.5" fill="#e8f4d8" opacity="0.92"/><rect x="134.5" y="48.6" width="2.2" height="1.5" fill="#ffffff" opacity="0.88"/><rect x="146.5" y="48.6" width="2.2" height="1.5" fill="#ffffff" opacity="0.71"/><rect x="116.5" y="52.0" width="2.2" height="1.5" fill="#ffffff" opacity="0.66"/><rect x="125.5" y="52.0" width="2.2" height="1.5" fill="#c8e0c0" opacity="0.69"/><rect x="131.5" y="52.0" width="2.2" height="1.5" fill="#ffffff" opacity="0.81"/><rect x="134.5" y="52.0" width="2.2" height="1.5" fill="#e8f4d8" opacity="0.55"/><rect x="137.5" y="52.0" width="2.2" height="1.5" fill="#e8f4d8" opacity="0.86"/><rect x="143.5" y="52.0" width="2.2" height="1.5" fill="#c8e0c0" opacity="0.76"/><rect x="146.5" y="52.0" width="2.2" height="1.5" fill="#ffffff" opacity="0.81"/><rect x="116.5" y="55.4" width="2.2" height="1.5" fill="#ffffff" opacity="0.89"/><rect x="119.5" y="55.4" width="2.2" height="1.5" fill="#e8f4d8" opacity="0.93"/><rect x="125.5" y="55.4" width="2.2" height="1.5" fill="#ffffff" opacity="0.61"/><rect x="134.5" y="55.4" width="2.2" height="1.5" fill="#ffffff" opacity="0.97"/><rect x="137.5" y="55.4" width="2.2" height="1.5" fill="#ffffff" opacity="0.61"/><rect x="146.5" y="55.4" width="2.2" height="1.5" fill="#c8e0c0" opacity="0.59"/><rect x="116.5" y="58.8" width="2.2" height="1.5" fill="#ffffff" opacity="0.85"/><rect x="131.5" y="58.8" width="2.2" height="1.5" fill="#e8f4d8" opacity="0.56"/><rect x="137.5" y="58.8" width="2.2" height="1.5" fill="#ffffff" opacity="0.95"/><rect x="143.5" y="58.8" width="2.2" height="1.5" fill="#e8f4d8" opacity="0.95"/><rect x="119.5" y="62.2" width="2.2" height="1.5" fill="#c8e0c0" opacity="0.74"/><rect x="122.5" y="62.2" width="2.2" height="1.5" fill="#e8f4d8" opacity="0.79"/><rect x="128.5" y="62.2" width="2.2" height="1.5" fill="#ffffff" opacity="0.57"/><rect x="134.5" y="62.2" width="2.2" height="1.5" fill="#c8e0c0" opacity="0.97"/><rect x="116.5" y="65.6" width="2.2" height="1.5" fill="#e8f4d8" opacity="0.87"/><rect x="119.5" y="65.6" width="2.2" height="1.5" fill="#e8f4d8" opacity="1.00"/><rect x="122.5" y="65.6" width="2.2" height="1.5" fill="#c8e0c0" opacity="0.83"/><rect x="125.5" y="65.6" width="2.2" height="1.5" fill="#ffffff" opacity="0.68"/><rect x="128.5" y="65.6" width="2.2" height="1.5" fill="#c8e0c0" opacity="0.67"/><rect x="131.5" y="65.6" width="2.2" height="1.5" fill="#ffffff" opacity="0.94"/><rect x="146.5" y="65.6" width="2.2" height="1.5" fill="#e8f4d8" opacity="0.82"/><rect x="119.5" y="69.0" width="2.2" height="1.5" fill="#e8f4d8" opacity="0.88"/><rect x="125.5" y="69.0" width="2.2" height="1.5" fill="#e8f4d8" opacity="0.61"/><rect x="128.5" y="69.0" width="2.2" height="1.5" fill="#c8e0c0" opacity="0.84"/><rect x="146.5" y="69.0" width="2.2" height="1.5" fill="#c8e0c0" opacity="0.73"/><path d="M148 40 Q160 34 176 38 L176 88 L148 88Z" fill="#0a0c0c"/><rect x="165.5" y="44.6" width="1.5" height="1.4" fill="#b0b8a8" opacity="0.70"/><rect x="150.5" y="49.6" width="1.5" height="1.4" fill="#b0b8a8" opacity="0.60"/><rect x="155.5" y="54.6" width="1.5" height="1.4" fill="#b0b8a8" opacity="0.62"/><rect x="160.5" y="59.6" width="1.5" height="1.4" fill="#b0b8a8" opacity="0.72"/><rect x="155.5" y="64.6" width="1.5" height="1.4" fill="#b0b8a8" opacity="0.67"/><circle cx="69" cy="42" r="1.7" fill="#50ff90"/><circle cx="76" cy="57" r="1.7" fill="#50ff90"/><circle cx="130" cy="52" r="1.7" fill="#50ff90"/><rect x="72" y="64" width="46" height="10" fill="#c07438" opacity="0.8"/><rect x="96" y="69" width="60" height="8" fill="#6a3424" opacity="0.6"/><path d="M0 80 L176 77 L176 96 L0 96Z" fill="#162224"/><path d="M30 96 Q70 84 110 82 Q140 84 176 90 L176 96Z" fill="#244440" opacity="0.85"/></g><g filter="url(#bl2)"><ellipse cx="20" cy="84" rx="17" ry="3.5" fill="#f0f0f0"/><path d="M55 88 Q90 78 125 84 Q150 88 165 94" stroke="#d8e0e0" stroke-width="3" fill="none" opacity="0.8"/><path d="M70 80 Q100 74 140 80" stroke="#ffffff" stroke-width="2" fill="none" opacity="0.6"/><ellipse cx="100" cy="74" rx="8" ry="3" fill="#fff4e0" opacity="0.7"/></g><rect x="0" y="95.8" width="176" height="3.2" fill="#c2c2c6"/><rect x="10" y="96" width="20" height="1" fill="#707078"/><rect x="150" y="96" width="22" height="1" fill="#707078"/><circle cx="4.5" cy="94.5" r="3.2" fill="#dde6ee"/><path d="M2.5 94 Q4.5 91.5 7 94.5" stroke="#2a5a90" stroke-width="1.1" fill="none"/></symbol>
<symbol id="sC" viewBox="0 0 176 99"><rect width="176" height="99" fill="#2a1a10"/><g filter="url(#bl)"><rect x="0" y="0" width="52" height="35" fill="#141212"/><rect x="14.5" y="0.6" width="5" height="3.5" fill="#4a6a78" opacity="0.95"/><rect x="35.5" y="0.6" width="5" height="3.5" fill="#605048" opacity="0.67"/><rect x="42.5" y="0.6" width="5" height="3.5" fill="#304850" opacity="0.85"/><rect x="7.5" y="6.6" width="5" height="3.5" fill="#304850" opacity="0.76"/><rect x="21.5" y="6.6" width="5" height="3.5" fill="#605048" opacity="0.59"/><rect x="28.5" y="6.6" width="5" height="3.5" fill="#605048" opacity="0.97"/><rect x="42.5" y="6.6" width="5" height="3.5" fill="#304850" opacity="0.60"/><rect x="0.5" y="12.6" width="5" height="3.5" fill="#805050" opacity="0.75"/><rect x="7.5" y="12.6" width="5" height="3.5" fill="#805050" opacity="0.80"/><rect x="14.5" y="12.6" width="5" height="3.5" fill="#4a6a78" opacity="0.77"/><rect x="21.5" y="12.6" width="5" height="3.5" fill="#605048" opacity="0.60"/><rect x="42.5" y="12.6" width="5" height="3.5" fill="#4a6a78" opacity="0.78"/><rect x="0.5" y="18.6" width="5" height="3.5" fill="#304850" opacity="0.59"/><rect x="7.5" y="18.6" width="5" height="3.5" fill="#605048" opacity="0.90"/><rect x="14.5" y="18.6" width="5" height="3.5" fill="#605048" opacity="0.83"/><rect x="21.5" y="18.6" width="5" height="3.5" fill="#805050" opacity="0.85"/><rect x="28.5" y="18.6" width="5" height="3.5" fill="#304850" opacity="0.87"/><rect x="42.5" y="18.6" width="5" height="3.5" fill="#304850" opacity="0.83"/><rect x="28.5" y="24.6" width="5" height="3.5" fill="#4a6a78" opacity="0.90"/><rect x="42.5" y="24.6" width="5" height="3.5" fill="#805050" opacity="0.62"/><rect x="28.5" y="30.6" width="5" height="3.5" fill="#4a6a78" opacity="0.86"/><rect x="35.5" y="30.6" width="5" height="3.5" fill="#605048" opacity="0.96"/><rect x="42.5" y="30.6" width="5" height="3.5" fill="#4a6a78" opacity="0.93"/><rect x="0" y="33" width="55" height="4" fill="#8a6a4a"/><rect x="0" y="37" width="55" height="26" fill="#6a4424"/><rect x="12" y="40" width="9" height="8" fill="#a08868" opacity="0.6"/><rect x="28" y="42" width="10" height="7" fill="#5a7060" opacity="0.6"/><rect x="9" y="55" width="13" height="6" fill="#c8d4e8"/><rect x="24" y="55" width="14" height="6" fill="#c8d4e8"/><rect x="39" y="55" width="14" height="6" fill="#c8d4e8"/><rect x="51" y="0" width="29" height="56" fill="#2a1e16"/><rect x="51.5" y="0.6" width="1" height="3" fill="#5a4434" opacity="0.93"/><rect x="54.5" y="0.6" width="1" height="3" fill="#5a4434" opacity="0.81"/><rect x="66.5" y="0.6" width="1" height="3" fill="#5a4434" opacity="0.65"/><rect x="57.5" y="4.6" width="1" height="3" fill="#5a4434" opacity="0.64"/><rect x="66.5" y="4.6" width="1" height="3" fill="#5a4434" opacity="0.56"/><rect x="69.5" y="4.6" width="1" height="3" fill="#5a4434" opacity="0.85"/><rect x="72.5" y="4.6" width="1" height="3" fill="#5a4434" opacity="0.90"/><rect x="75.5" y="4.6" width="1" height="3" fill="#5a4434" opacity="0.62"/><rect x="60.5" y="8.6" width="1" height="3" fill="#5a4434" opacity="0.66"/><rect x="63.5" y="8.6" width="1" height="3" fill="#5a4434" opacity="0.62"/><rect x="66.5" y="8.6" width="1" height="3" fill="#5a4434" opacity="0.81"/><rect x="72.5" y="8.6" width="1" height="3" fill="#5a4434" opacity="0.74"/><rect x="75.5" y="8.6" width="1" height="3" fill="#5a4434" opacity="0.91"/><rect x="78.5" y="8.6" width="1" height="3" fill="#5a4434" opacity="0.94"/><rect x="54.5" y="12.6" width="1" height="3" fill="#5a4434" opacity="0.59"/><rect x="69.5" y="12.6" width="1" height="3" fill="#5a4434" opacity="0.94"/><rect x="60.5" y="16.6" width="1" height="3" fill="#5a4434" opacity="0.77"/><rect x="69.5" y="16.6" width="1" height="3" fill="#5a4434" opacity="0.75"/><rect x="75.5" y="16.6" width="1" height="3" fill="#5a4434" opacity="0.63"/><rect x="51.5" y="20.6" width="1" height="3" fill="#5a4434" opacity="0.74"/><rect x="57.5" y="20.6" width="1" height="3" fill="#5a4434" opacity="0.87"/><rect x="60.5" y="20.6" width="1" height="3" fill="#5a4434" opacity="0.65"/><rect x="63.5" y="20.6" width="1" height="3" fill="#5a4434" opacity="0.75"/><rect x="66.5" y="20.6" width="1" height="3" fill="#5a4434" opacity="0.76"/><rect x="69.5" y="20.6" width="1" height="3" fill="#5a4434" opacity="0.99"/><rect x="72.5" y="20.6" width="1" height="3" fill="#5a4434" opacity="0.79"/><rect x="78.5" y="20.6" width="1" height="3" fill="#5a4434" opacity="0.72"/><rect x="54.5" y="24.6" width="1" height="3" fill="#5a4434" opacity="0.90"/><rect x="57.5" y="24.6" width="1" height="3" fill="#5a4434" opacity="0.84"/><rect x="63.5" y="24.6" width="1" height="3" fill="#5a4434" opacity="0.95"/><rect x="78.5" y="24.6" width="1" height="3" fill="#5a4434" opacity="0.71"/><rect x="54.5" y="28.6" width="1" height="3" fill="#5a4434" opacity="0.86"/><rect x="63.5" y="28.6" width="1" height="3" fill="#5a4434" opacity="0.98"/><rect x="54.5" y="32.6" width="1" height="3" fill="#5a4434" opacity="0.84"/><rect x="57.5" y="32.6" width="1" height="3" fill="#5a4434" opacity="0.82"/><rect x="69.5" y="32.6" width="1" height="3" fill="#5a4434" opacity="0.82"/><rect x="78.5" y="32.6" width="1" height="3" fill="#5a4434" opacity="0.93"/><rect x="51.5" y="36.6" width="1" height="3" fill="#5a4434" opacity="0.55"/><rect x="54.5" y="36.6" width="1" height="3" fill="#5a4434" opacity="0.96"/><rect x="60.5" y="36.6" width="1" height="3" fill="#5a4434" opacity="0.60"/><rect x="69.5" y="36.6" width="1" height="3" fill="#5a4434" opacity="0.58"/><rect x="72.5" y="36.6" width="1" height="3" fill="#5a4434" opacity="0.74"/><rect x="78.5" y="36.6" width="1" height="3" fill="#5a4434" opacity="0.97"/><rect x="51.5" y="40.6" width="1" height="3" fill="#5a4434" opacity="0.59"/><rect x="60.5" y="40.6" width="1" height="3" fill="#5a4434" opacity="0.70"/><rect x="66.5" y="40.6" width="1" height="3" fill="#5a4434" opacity="0.89"/><rect x="75.5" y="40.6" width="1" height="3" fill="#5a4434" opacity="0.65"/><rect x="54.5" y="44.6" width="1" height="3" fill="#5a4434" opacity="0.64"/><rect x="66.5" y="44.6" width="1" height="3" fill="#5a4434" opacity="0.92"/><rect x="75.5" y="44.6" width="1" height="3" fill="#5a4434" opacity="0.60"/><rect x="51.5" y="48.6" width="1" height="3" fill="#5a4434" opacity="0.78"/><rect x="57.5" y="48.6" width="1" height="3" fill="#5a4434" opacity="0.56"/><rect x="63.5" y="48.6" width="1" height="3" fill="#5a4434" opacity="0.65"/><rect x="72.5" y="48.6" width="1" height="3" fill="#5a4434" opacity="0.64"/><rect x="75.5" y="48.6" width="1" height="3" fill="#5a4434" opacity="0.61"/><rect x="78.5" y="48.6" width="1" height="3" fill="#5a4434" opacity="0.90"/><rect x="63.5" y="52.6" width="1" height="3" fill="#5a4434" opacity="0.79"/><rect x="66.5" y="52.6" width="1" height="3" fill="#5a4434" opacity="0.59"/><rect x="69.5" y="52.6" width="1" height="3" fill="#5a4434" opacity="0.62"/><rect x="80" y="0" width="11" height="38" fill="#4a3c34"/><rect x="80.5" y="0.6" width="2" height="1.6" fill="#f0e8e0" opacity="0.90"/><rect x="83.5" y="4.1" width="2" height="1.6" fill="#d0c8c0" opacity="0.90"/><rect x="86.5" y="4.1" width="2" height="1.6" fill="#f0e8e0" opacity="0.83"/><rect x="80.5" y="7.6" width="2" height="1.6" fill="#f0e8e0" opacity="0.66"/><rect x="86.5" y="7.6" width="2" height="1.6" fill="#d0c8c0" opacity="0.93"/><rect x="83.5" y="11.1" width="2" height="1.6" fill="#d0c8c0" opacity="0.79"/><rect x="83.5" y="14.6" width="2" height="1.6" fill="#f0e8e0" opacity="0.60"/><rect x="86.5" y="14.6" width="2" height="1.6" fill="#d0c8c0" opacity="0.61"/><rect x="86.5" y="18.1" width="2" height="1.6" fill="#f0e8e0" opacity="0.76"/><rect x="83.5" y="21.6" width="2" height="1.6" fill="#f0e8e0" opacity="0.93"/><rect x="80.5" y="25.1" width="2" height="1.6" fill="#f0e8e0" opacity="0.62"/><rect x="83.5" y="28.6" width="2" height="1.6" fill="#f0e8e0" opacity="0.79"/><rect x="80.5" y="32.1" width="2" height="1.6" fill="#d0c8c0" opacity="0.63"/><rect x="83.5" y="32.1" width="2" height="1.6" fill="#d0c8c0" opacity="0.87"/><rect x="86.5" y="32.1" width="2" height="1.6" fill="#f0e8e0" opacity="0.76"/><rect x="80.5" y="35.6" width="2" height="1.6" fill="#f0e8e0" opacity="0.67"/><rect x="91" y="0" width="19" height="32" fill="#0a0808"/><rect x="109" y="8" width="32" height="28" fill="#2e3448"/><rect x="114.1" y="10.6" width="2" height="1.6" fill="#e8f0ff" opacity="0.82"/><rect x="116.7" y="10.6" width="2" height="1.6" fill="#b8d0f0" opacity="0.73"/><rect x="119.3" y="10.6" width="2" height="1.6" fill="#e8f0ff" opacity="0.89"/><rect x="124.5" y="10.6" width="2" height="1.6" fill="#ffffff" opacity="0.70"/><rect x="127.1" y="10.6" width="2" height="1.6" fill="#b8d0f0" opacity="0.78"/><rect x="111.5" y="13.4" width="2" height="1.6" fill="#b8d0f0" opacity="0.63"/><rect x="116.7" y="13.4" width="2" height="1.6" fill="#e8f0ff" opacity="0.85"/><rect x="119.3" y="13.4" width="2" height="1.6" fill="#e8f0ff" opacity="0.94"/><rect x="121.9" y="13.4" width="2" height="1.6" fill="#e8f0ff" opacity="0.90"/><rect x="124.5" y="13.4" width="2" height="1.6" fill="#e8f0ff" opacity="0.95"/><rect x="129.7" y="13.4" width="2" height="1.6" fill="#b8d0f0" opacity="0.92"/><rect x="132.3" y="13.4" width="2" height="1.6" fill="#b8d0f0" opacity="0.69"/><rect x="134.9" y="13.4" width="2" height="1.6" fill="#b8d0f0" opacity="0.72"/><rect x="111.5" y="16.2" width="2" height="1.6" fill="#e8f0ff" opacity="0.56"/><rect x="121.9" y="16.2" width="2" height="1.6" fill="#e8f0ff" opacity="0.92"/><rect x="124.5" y="16.2" width="2" height="1.6" fill="#e8f0ff" opacity="1.00"/><rect x="134.9" y="16.2" width="2" height="1.6" fill="#ffffff" opacity="0.70"/><rect x="111.5" y="19.0" width="2" height="1.6" fill="#b8d0f0" opacity="0.61"/><rect x="114.1" y="19.0" width="2" height="1.6" fill="#b8d0f0" opacity="0.85"/><rect x="116.7" y="19.0" width="2" height="1.6" fill="#e8f0ff" opacity="0.93"/><rect x="121.9" y="19.0" width="2" height="1.6" fill="#ffffff" opacity="0.94"/><rect x="124.5" y="19.0" width="2" height="1.6" fill="#e8f0ff" opacity="0.91"/><rect x="134.9" y="19.0" width="2" height="1.6" fill="#b8d0f0" opacity="0.90"/><rect x="114.1" y="21.8" width="2" height="1.6" fill="#b8d0f0" opacity="0.71"/><rect x="116.7" y="21.8" width="2" height="1.6" fill="#e8f0ff" opacity="0.70"/><rect x="119.3" y="21.8" width="2" height="1.6" fill="#e8f0ff" opacity="0.65"/><rect x="121.9" y="21.8" width="2" height="1.6" fill="#e8f0ff" opacity="0.77"/><rect x="124.5" y="21.8" width="2" height="1.6" fill="#b8d0f0" opacity="0.84"/><rect x="127.1" y="21.8" width="2" height="1.6" fill="#b8d0f0" opacity="0.98"/><rect x="129.7" y="21.8" width="2" height="1.6" fill="#ffffff" opacity="0.95"/><rect x="132.3" y="21.8" width="2" height="1.6" fill="#b8d0f0" opacity="0.95"/><rect x="111.5" y="24.6" width="2" height="1.6" fill="#b8d0f0" opacity="0.81"/><rect x="114.1" y="24.6" width="2" height="1.6" fill="#ffffff" opacity="1.00"/><rect x="119.3" y="24.6" width="2" height="1.6" fill="#b8d0f0" opacity="0.74"/><rect x="127.1" y="24.6" width="2" height="1.6" fill="#b8d0f0" opacity="0.79"/><rect x="114.1" y="27.4" width="2" height="1.6" fill="#b8d0f0" opacity="0.82"/><rect x="116.7" y="27.4" width="2" height="1.6" fill="#ffffff" opacity="0.61"/><rect x="121.9" y="27.4" width="2" height="1.6" fill="#b8d0f0" opacity="0.92"/><rect x="127.1" y="27.4" width="2" height="1.6" fill="#e8f0ff" opacity="0.91"/><rect x="129.7" y="27.4" width="2" height="1.6" fill="#e8f0ff" opacity="0.65"/><rect x="111.5" y="30.2" width="2" height="1.6" fill="#b8d0f0" opacity="0.84"/><rect x="114.1" y="30.2" width="2" height="1.6" fill="#b8d0f0" opacity="0.64"/><rect x="116.7" y="30.2" width="2" height="1.6" fill="#b8d0f0" opacity="0.78"/><rect x="121.9" y="30.2" width="2" height="1.6" fill="#ffffff" opacity="0.55"/><rect x="127.1" y="30.2" width="2" height="1.6" fill="#b8d0f0" opacity="1.00"/><rect x="129.7" y="30.2" width="2" height="1.6" fill="#e8f0ff" opacity="0.63"/><rect x="134.9" y="30.2" width="2" height="1.6" fill="#e8f0ff" opacity="0.94"/><rect x="141" y="12" width="18" height="26" fill="#2e282a"/><rect x="141.5" y="12.6" width="2" height="1.5" fill="#e0c8b0" opacity="0.64"/><rect x="144.5" y="12.6" width="2" height="1.5" fill="#e0c8b0" opacity="0.78"/><rect x="153.5" y="12.6" width="2" height="1.5" fill="#e0c8b0" opacity="0.91"/><rect x="156.5" y="12.6" width="2" height="1.5" fill="#e0c8b0" opacity="0.82"/><rect x="141.5" y="15.6" width="2" height="1.5" fill="#e0c8b0" opacity="0.78"/><rect x="144.5" y="15.6" width="2" height="1.5" fill="#e0c8b0" opacity="0.90"/><rect x="153.5" y="15.6" width="2" height="1.5" fill="#e0c8b0" opacity="0.79"/><rect x="156.5" y="15.6" width="2" height="1.5" fill="#e0c8b0" opacity="0.65"/><rect x="141.5" y="18.6" width="2" height="1.5" fill="#e0c8b0" opacity="0.99"/><rect x="147.5" y="18.6" width="2" height="1.5" fill="#e0c8b0" opacity="0.87"/><rect x="153.5" y="18.6" width="2" height="1.5" fill="#e0c8b0" opacity="0.97"/><rect x="156.5" y="18.6" width="2" height="1.5" fill="#e0c8b0" opacity="0.75"/><rect x="141.5" y="21.6" width="2" height="1.5" fill="#e0c8b0" opacity="0.95"/><rect x="147.5" y="21.6" width="2" height="1.5" fill="#e0c8b0" opacity="0.76"/><rect x="156.5" y="21.6" width="2" height="1.5" fill="#e0c8b0" opacity="1.00"/><rect x="141.5" y="24.6" width="2" height="1.5" fill="#e0c8b0" opacity="0.71"/><rect x="144.5" y="24.6" width="2" height="1.5" fill="#e0c8b0" opacity="0.62"/><rect x="147.5" y="24.6" width="2" height="1.5" fill="#e0c8b0" opacity="0.61"/><rect x="153.5" y="24.6" width="2" height="1.5" fill="#e0c8b0" opacity="0.63"/><rect x="156.5" y="24.6" width="2" height="1.5" fill="#e0c8b0" opacity="0.90"/><rect x="144.5" y="27.6" width="2" height="1.5" fill="#e0c8b0" opacity="0.76"/><rect x="147.5" y="27.6" width="2" height="1.5" fill="#e0c8b0" opacity="0.78"/><rect x="150.5" y="27.6" width="2" height="1.5" fill="#e0c8b0" opacity="0.87"/><rect x="156.5" y="27.6" width="2" height="1.5" fill="#e0c8b0" opacity="0.88"/><rect x="141.5" y="30.6" width="2" height="1.5" fill="#e0c8b0" opacity="0.84"/><rect x="144.5" y="30.6" width="2" height="1.5" fill="#e0c8b0" opacity="0.57"/><rect x="150.5" y="30.6" width="2" height="1.5" fill="#e0c8b0" opacity="0.98"/><rect x="156.5" y="30.6" width="2" height="1.5" fill="#e0c8b0" opacity="0.98"/><rect x="141.5" y="33.6" width="2" height="1.5" fill="#e0c8b0" opacity="0.86"/><rect x="144.5" y="33.6" width="2" height="1.5" fill="#e0c8b0" opacity="0.82"/><rect x="150.5" y="33.6" width="2" height="1.5" fill="#e0c8b0" opacity="0.80"/><rect x="153.5" y="33.6" width="2" height="1.5" fill="#e0c8b0" opacity="0.68"/><rect x="156.5" y="33.6" width="2" height="1.5" fill="#e0c8b0" opacity="0.83"/><rect x="159" y="0" width="17" height="48" fill="#2e2218"/><rect x="167.5" y="0.6" width="2" height="2" fill="#907060" opacity="0.71"/><rect x="171.5" y="5.6" width="2" height="2" fill="#907060" opacity="0.82"/><rect x="167.5" y="10.6" width="2" height="2" fill="#907060" opacity="0.58"/><rect x="163.5" y="15.6" width="2" height="2" fill="#907060" opacity="0.68"/><rect x="159.5" y="20.6" width="2" height="2" fill="#907060" opacity="0.64"/><rect x="163.5" y="20.6" width="2" height="2" fill="#907060" opacity="0.62"/><rect x="167.5" y="20.6" width="2" height="2" fill="#907060" opacity="0.75"/><rect x="171.5" y="20.6" width="2" height="2" fill="#907060" opacity="0.98"/><rect x="167.5" y="25.6" width="2" height="2" fill="#907060" opacity="0.75"/><rect x="171.5" y="25.6" width="2" height="2" fill="#907060" opacity="0.94"/><rect x="159.5" y="30.6" width="2" height="2" fill="#907060" opacity="0.83"/><rect x="167.5" y="30.6" width="2" height="2" fill="#907060" opacity="0.99"/><rect x="171.5" y="30.6" width="2" height="2" fill="#907060" opacity="0.62"/><rect x="159.5" y="35.6" width="2" height="2" fill="#907060" opacity="0.87"/><rect x="167.5" y="35.6" width="2" height="2" fill="#907060" opacity="0.60"/><rect x="171.5" y="35.6" width="2" height="2" fill="#907060" opacity="0.85"/><rect x="163.5" y="40.6" width="2" height="2" fill="#907060" opacity="0.70"/><rect x="163.5" y="45.6" width="2" height="2" fill="#907060" opacity="0.62"/><path d="M96 44 Q102 30 112 34 Q122 28 130 36 L132 60 L96 60Z" fill="#3a3a18" opacity="0.9"/><path d="M130 40 L168 38 L168 58 L130 58Z" fill="#1e4a3a" opacity="0.8"/><rect x="136" y="46" width="6" height="9" fill="#c0e8d0" opacity="0.8"/><rect x="150" y="44" width="5" height="11" fill="#b0e0c8" opacity="0.7"/><rect x="0" y="60" width="176" height="39" fill="#5a3a20"/><path d="M0 62 L96 54 L176 58 L176 68 L0 72Z" fill="#4a2e18"/><path d="M0 72 L96 58 L130 60 L176 70 L176 96 L0 96Z" fill="#7a5030"/><path d="M0 64 L60 62 L72 68 L20 76 L0 80Z" fill="#a07038" opacity="0.9"/><path d="M0 84 Q18 80 28 94 L0 96Z" fill="#4a2c14"/><rect x="0" y="71" width="26" height="3" fill="#b04020"/><path d="M30 92 L96 70 M110 86 L176 74 M60 80 L140 62" stroke="#d8b890" stroke-width="1" opacity="0.7"/><circle cx="23" cy="26" r="1.9" fill="#fff4d0"/><circle cx="56" cy="30" r="1.9" fill="#fff4d0"/><circle cx="89" cy="33" r="1.9" fill="#fff4d0"/><circle cx="166" cy="27" r="1.9" fill="#fff4d0"/><circle cx="126" cy="52" r="1.9" fill="#fff4d0"/><circle cx="116" cy="40" r="1.6" fill="#ff3030"/><circle cx="141" cy="43" r="1.6" fill="#ff3030"/><circle cx="152" cy="44" r="1.6" fill="#ff3030"/><path d="M22 30 L22 94 M56 32 L56 66 M89 35 L89 64" stroke="#2a1a10" stroke-width="1"/><path d="M46 96 Q49 88 62 87 Q75 87 79 96Z" fill="#a81a1a"/><path d="M95 95 Q97 84 107 83 Q118 83 121 95Z" fill="#9a1818"/><path d="M133 90 Q134 79 142 78 Q150 78 152 90Z" fill="#8a2020"/><circle cx="50" cy="92" r="1.3" fill="#ffc0b0"/><circle cx="75" cy="92" r="1.3" fill="#ffc0b0"/><circle cx="99" cy="90" r="1.3" fill="#ffc0b0"/><circle cx="117" cy="90" r="1.3" fill="#ffc0b0"/><circle cx="136" cy="86" r="1.3" fill="#ffc0b0"/><circle cx="149" cy="86" r="1.3" fill="#ffc0b0"/><path d="M150 80 L164 68" stroke="#f0e0d0" stroke-width="1.6" opacity="0.7"/></g><rect x="0" y="95.8" width="176" height="3.2" fill="#c2c2c6"/><rect x="10" y="96" width="20" height="1" fill="#707078"/><rect x="150" y="96" width="22" height="1" fill="#707078"/><circle cx="4.5" cy="94.5" r="3.2" fill="#dde6ee"/><path d="M2.5 94 Q4.5 91.5 7 94.5" stroke="#2a5a90" stroke-width="1.1" fill="none"/></symbol>
<symbol id="sD" viewBox="0 0 176 99"><rect width="176" height="99" fill="#0c0908"/><g filter="url(#bl)"><rect x="97" y="0" width="15" height="28" fill="#4a3018"/><rect x="97.5" y="0.6" width="1.5" height="1.6" fill="#a87040" opacity="0.75"/><rect x="101.0" y="0.6" width="1.5" height="1.6" fill="#a87040" opacity="0.90"/><rect x="104.5" y="0.6" width="1.5" height="1.6" fill="#a87040" opacity="0.75"/><rect x="97.5" y="3.1" width="1.5" height="1.6" fill="#c08850" opacity="0.85"/><rect x="101.0" y="3.1" width="1.5" height="1.6" fill="#a87040" opacity="0.94"/><rect x="108.0" y="3.1" width="1.5" height="1.6" fill="#a87040" opacity="0.77"/><rect x="97.5" y="5.6" width="1.5" height="1.6" fill="#a87040" opacity="0.86"/><rect x="101.0" y="5.6" width="1.5" height="1.6" fill="#a87040" opacity="0.93"/><rect x="104.5" y="5.6" width="1.5" height="1.6" fill="#a87040" opacity="0.81"/><rect x="97.5" y="8.1" width="1.5" height="1.6" fill="#c08850" opacity="0.98"/><rect x="104.5" y="8.1" width="1.5" height="1.6" fill="#c08850" opacity="0.95"/><rect x="108.0" y="8.1" width="1.5" height="1.6" fill="#a87040" opacity="0.91"/><rect x="108.0" y="10.6" width="1.5" height="1.6" fill="#c08850" opacity="0.84"/><rect x="97.5" y="13.1" width="1.5" height="1.6" fill="#c08850" opacity="0.62"/><rect x="104.5" y="13.1" width="1.5" height="1.6" fill="#c08850" opacity="0.94"/><rect x="97.5" y="15.6" width="1.5" height="1.6" fill="#a87040" opacity="0.62"/><rect x="104.5" y="15.6" width="1.5" height="1.6" fill="#c08850" opacity="0.81"/><rect x="108.0" y="15.6" width="1.5" height="1.6" fill="#a87040" opacity="0.59"/><rect x="101.0" y="18.1" width="1.5" height="1.6" fill="#c08850" opacity="0.94"/><rect x="104.5" y="18.1" width="1.5" height="1.6" fill="#c08850" opacity="0.75"/><rect x="97.5" y="20.6" width="1.5" height="1.6" fill="#c08850" opacity="0.84"/><rect x="101.0" y="20.6" width="1.5" height="1.6" fill="#c08850" opacity="0.93"/><rect x="104.5" y="20.6" width="1.5" height="1.6" fill="#a87040" opacity="0.84"/><rect x="108.0" y="20.6" width="1.5" height="1.6" fill="#c08850" opacity="0.64"/><rect x="97.5" y="23.1" width="1.5" height="1.6" fill="#c08850" opacity="0.90"/><rect x="101.0" y="23.1" width="1.5" height="1.6" fill="#c08850" opacity="0.76"/><rect x="108.0" y="23.1" width="1.5" height="1.6" fill="#c08850" opacity="0.98"/><rect x="97.5" y="25.6" width="1.5" height="1.6" fill="#a87040" opacity="0.92"/><rect x="101.0" y="25.6" width="1.5" height="1.6" fill="#a87040" opacity="0.71"/><rect x="55" y="0" width="15" height="4" fill="#c8b888"/><rect x="44" y="4" width="30" height="42" fill="#1a1410" opacity="0.8"/><rect x="57" y="12" width="13" height="22" fill="#7a7a20"/><ellipse cx="63.5" cy="23" rx="5" ry="9" fill="#e0d860"/><ellipse cx="63.5" cy="20" rx="2.5" ry="4" fill="#f8f0a0"/><rect x="38" y="10" width="6.5" height="34" fill="#d03818"/><rect x="39.5" y="12" width="3.5" height="30" fill="#ff8a40"/><rect x="150" y="4" width="26" height="72" fill="#241a14"/><rect x="151" y="23" width="25" height="7" fill="#4a3a32"/><rect x="150" y="44" width="26" height="6" fill="#4a3a32"/><rect x="130" y="18" width="20" height="58" fill="#16100c"/><path d="M70 45 Q80 30 100 34 Q120 26 140 34 L140 62 L70 62Z" fill="#120e0a"/><circle cx="143" cy="10" r="2.8" fill="#ffffff"/><circle cx="94" cy="28" r="1.6" fill="#ffffff"/><circle cx="70" cy="38" r="1.6" fill="#ffffff"/><circle cx="159" cy="16" r="1" fill="#e0e0e0"/><rect x="0" y="50" width="176" height="26" fill="#22140c"/><rect x="15" y="40" width="3" height="16" fill="#40c070"/><rect x="0" y="54" width="70" height="20" fill="#5a3018" opacity="0.85"/><circle cx="22" cy="52" r="1.8" fill="#ffc060"/><circle cx="44" cy="52" r="1.8" fill="#ffc060"/><circle cx="60" cy="62" r="1.8" fill="#ffc060"/><circle cx="78" cy="58" r="1.8" fill="#ffc060"/><circle cx="92" cy="60" r="1.8" fill="#ffc060"/><circle cx="10" cy="64" r="2.4" fill="#ffe0a0"/><circle cx="34" cy="62" r="2.4" fill="#ffe0a0"/><circle cx="50" cy="60" r="2.4" fill="#ffe0a0"/><circle cx="30" cy="48" r="1.6" fill="#ff4030"/><circle cx="62" cy="66" r="1.6" fill="#ff4030"/><circle cx="132" cy="72" r="1.6" fill="#ff4030"/><circle cx="120" cy="70" r="1.6" fill="#ff4030"/><circle cx="82" cy="60" r="1.4" fill="#80ff80"/><circle cx="96" cy="62" r="1.4" fill="#80ff80"/><circle cx="48" cy="58" r="1.4" fill="#80ff80"/><rect x="62" y="58" width="50" height="16" fill="#3a2818" opacity="0.7"/><path d="M113 76 L115 66 Q125 62 136 66 L140 76Z" fill="#7a4024"/><rect x="0" y="74" width="176" height="22" fill="#2a211a"/><path d="M0 80 L176 77 L176 96 L0 96Z" fill="#3a2f28"/><path d="M0 88 L176 84 L176 96 L0 96Z" fill="#423630"/><circle cx="8" cy="58" r="1.3" fill="#ffb060"/><circle cx="16" cy="62" r="1.3" fill="#ffb060"/><circle cx="26" cy="66" r="1.3" fill="#ffb060"/><circle cx="40" cy="66" r="1.3" fill="#ffb060"/><circle cx="54" cy="68" r="1.3" fill="#ffb060"/><circle cx="70" cy="64" r="1.3" fill="#ffb060"/><circle cx="86" cy="66" r="1.3" fill="#ffb060"/><circle cx="104" cy="62" r="1.3" fill="#ffb060"/><circle cx="110" cy="68" r="1.3" fill="#ffb060"/><circle cx="124" cy="62" r="1.3" fill="#ffb060"/><circle cx="18" cy="70" r="1.2" fill="#ff5040"/><circle cx="46" cy="70" r="1.2" fill="#ff5040"/><circle cx="66" cy="70" r="1.2" fill="#ff5040"/><circle cx="98" cy="70" r="1.2" fill="#ff5040"/><circle cx="30" cy="58" r="1.2" fill="#fff0d0"/><circle cx="58" cy="56" r="1.2" fill="#fff0d0"/><circle cx="90" cy="56" r="1.2" fill="#fff0d0"/><path d="M0 68 L20 66 L24 82 L0 84Z" fill="#3a2a20" opacity="0.8"/><path d="M114 70 Q126 64 138 68 L140 76 L114 78Z" fill="#a85a34" opacity="0.8"/><circle cx="12" cy="74" r="2.2" fill="#fff0c0"/></g><g filter="url(#bl2)"><ellipse cx="40" cy="70" rx="28" ry="4" fill="#c86a38" opacity="0.6"/><ellipse cx="12" cy="74" rx="4" ry="3" fill="#fff0c0" opacity="0.8"/></g><rect x="0" y="95.8" width="176" height="3.2" fill="#c2c2c6"/><rect x="10" y="96" width="20" height="1" fill="#707078"/><rect x="150" y="96" width="22" height="1" fill="#707078"/><circle cx="4.5" cy="94.5" r="3.2" fill="#dde6ee"/><path d="M2.5 94 Q4.5 91.5 7 94.5" stroke="#2a5a90" stroke-width="1.1" fill="none"/></symbol>
<symbol id="sD2" viewBox="0 0 176 99"><rect width="176" height="99" fill="#0c0908"/><g filter="url(#bl)"><rect x="97" y="0" width="15" height="28" fill="#4a3018"/><rect x="97.5" y="0.6" width="1.5" height="1.6" fill="#a87040" opacity="0.75"/><rect x="101.0" y="0.6" width="1.5" height="1.6" fill="#a87040" opacity="0.93"/><rect x="108.0" y="0.6" width="1.5" height="1.6" fill="#c08850" opacity="0.82"/><rect x="101.0" y="3.1" width="1.5" height="1.6" fill="#c08850" opacity="0.70"/><rect x="108.0" y="3.1" width="1.5" height="1.6" fill="#a87040" opacity="0.84"/><rect x="101.0" y="5.6" width="1.5" height="1.6" fill="#c08850" opacity="0.70"/><rect x="104.5" y="5.6" width="1.5" height="1.6" fill="#a87040" opacity="0.76"/><rect x="97.5" y="8.1" width="1.5" height="1.6" fill="#a87040" opacity="0.65"/><rect x="104.5" y="8.1" width="1.5" height="1.6" fill="#a87040" opacity="0.83"/><rect x="108.0" y="8.1" width="1.5" height="1.6" fill="#c08850" opacity="0.65"/><rect x="97.5" y="10.6" width="1.5" height="1.6" fill="#c08850" opacity="0.91"/><rect x="101.0" y="10.6" width="1.5" height="1.6" fill="#c08850" opacity="0.65"/><rect x="104.5" y="10.6" width="1.5" height="1.6" fill="#a87040" opacity="0.97"/><rect x="108.0" y="10.6" width="1.5" height="1.6" fill="#a87040" opacity="0.80"/><rect x="97.5" y="13.1" width="1.5" height="1.6" fill="#a87040" opacity="0.96"/><rect x="104.5" y="13.1" width="1.5" height="1.6" fill="#c08850" opacity="0.80"/><rect x="108.0" y="13.1" width="1.5" height="1.6" fill="#c08850" opacity="0.89"/><rect x="97.5" y="15.6" width="1.5" height="1.6" fill="#a87040" opacity="0.70"/><rect x="101.0" y="15.6" width="1.5" height="1.6" fill="#c08850" opacity="0.98"/><rect x="108.0" y="15.6" width="1.5" height="1.6" fill="#c08850" opacity="0.99"/><rect x="97.5" y="18.1" width="1.5" height="1.6" fill="#a87040" opacity="0.69"/><rect x="101.0" y="18.1" width="1.5" height="1.6" fill="#a87040" opacity="0.76"/><rect x="108.0" y="18.1" width="1.5" height="1.6" fill="#c08850" opacity="0.80"/><rect x="101.0" y="20.6" width="1.5" height="1.6" fill="#c08850" opacity="0.77"/><rect x="108.0" y="20.6" width="1.5" height="1.6" fill="#a87040" opacity="0.71"/><rect x="97.5" y="23.1" width="1.5" height="1.6" fill="#c08850" opacity="0.68"/><rect x="108.0" y="23.1" width="1.5" height="1.6" fill="#c08850" opacity="0.55"/><rect x="97.5" y="25.6" width="1.5" height="1.6" fill="#a87040" opacity="0.78"/><rect x="101.0" y="25.6" width="1.5" height="1.6" fill="#a87040" opacity="0.85"/><rect x="104.5" y="25.6" width="1.5" height="1.6" fill="#a87040" opacity="1.00"/><rect x="108.0" y="25.6" width="1.5" height="1.6" fill="#a87040" opacity="0.67"/><rect x="55" y="0" width="15" height="4" fill="#c8b888"/><rect x="44" y="4" width="30" height="42" fill="#1a1410" opacity="0.8"/><rect x="57" y="12" width="13" height="22" fill="#7a7a20"/><ellipse cx="63.5" cy="23" rx="5" ry="9" fill="#e0d860"/><ellipse cx="63.5" cy="20" rx="2.5" ry="4" fill="#f8f0a0"/><rect x="38" y="10" width="6.5" height="34" fill="#d03818"/><rect x="39.5" y="12" width="3.5" height="30" fill="#ff8a40"/><rect x="150" y="4" width="26" height="72" fill="#241a14"/><rect x="151" y="23" width="25" height="7" fill="#4a3a32"/><rect x="150" y="44" width="26" height="6" fill="#4a3a32"/><rect x="130" y="18" width="20" height="58" fill="#16100c"/><path d="M70 45 Q80 30 100 34 Q120 26 140 34 L140 62 L70 62Z" fill="#120e0a"/><circle cx="143" cy="10" r="2.8" fill="#ffffff"/><circle cx="94" cy="28" r="1.6" fill="#ffffff"/><circle cx="70" cy="38" r="1.6" fill="#ffffff"/><circle cx="159" cy="16" r="1" fill="#e0e0e0"/><rect x="0" y="50" width="176" height="26" fill="#22140c"/><rect x="15" y="40" width="3" height="16" fill="#40c070"/><rect x="0" y="54" width="70" height="20" fill="#5a3018" opacity="0.85"/><circle cx="22" cy="52" r="1.8" fill="#ffc060"/><circle cx="44" cy="52" r="1.8" fill="#ffc060"/><circle cx="60" cy="62" r="1.8" fill="#ffc060"/><circle cx="78" cy="58" r="1.8" fill="#ffc060"/><circle cx="92" cy="60" r="1.8" fill="#ffc060"/><circle cx="10" cy="64" r="2.4" fill="#ffe0a0"/><circle cx="34" cy="62" r="2.4" fill="#ffe0a0"/><circle cx="50" cy="60" r="2.4" fill="#ffe0a0"/><circle cx="30" cy="48" r="1.6" fill="#ff4030"/><circle cx="62" cy="66" r="1.6" fill="#ff4030"/><circle cx="132" cy="72" r="1.6" fill="#ff4030"/><circle cx="120" cy="70" r="1.6" fill="#ff4030"/><circle cx="82" cy="60" r="1.4" fill="#80ff80"/><circle cx="96" cy="62" r="1.4" fill="#80ff80"/><circle cx="48" cy="58" r="1.4" fill="#80ff80"/><rect x="62" y="58" width="50" height="16" fill="#3a2818" opacity="0.7"/><path d="M113 76 L115 66 Q125 62 136 66 L140 76Z" fill="#7a4024"/><rect x="0" y="74" width="176" height="22" fill="#2a211a"/><path d="M0 80 L176 77 L176 96 L0 96Z" fill="#3a2f28"/><path d="M0 88 L176 84 L176 96 L0 96Z" fill="#423630"/><circle cx="8" cy="58" r="1.3" fill="#ffb060"/><circle cx="16" cy="62" r="1.3" fill="#ffb060"/><circle cx="26" cy="66" r="1.3" fill="#ffb060"/><circle cx="40" cy="66" r="1.3" fill="#ffb060"/><circle cx="54" cy="68" r="1.3" fill="#ffb060"/><circle cx="70" cy="64" r="1.3" fill="#ffb060"/><circle cx="86" cy="66" r="1.3" fill="#ffb060"/><circle cx="104" cy="62" r="1.3" fill="#ffb060"/><circle cx="110" cy="68" r="1.3" fill="#ffb060"/><circle cx="124" cy="62" r="1.3" fill="#ffb060"/><circle cx="18" cy="70" r="1.2" fill="#ff5040"/><circle cx="46" cy="70" r="1.2" fill="#ff5040"/><circle cx="66" cy="70" r="1.2" fill="#ff5040"/><circle cx="98" cy="70" r="1.2" fill="#ff5040"/><circle cx="30" cy="58" r="1.2" fill="#fff0d0"/><circle cx="58" cy="56" r="1.2" fill="#fff0d0"/><circle cx="90" cy="56" r="1.2" fill="#fff0d0"/><path d="M0 68 L20 66 L24 82 L0 84Z" fill="#3a2a20" opacity="0.8"/></g><g filter="url(#bl2)"><ellipse cx="50" cy="78" rx="45" ry="8" fill="#e0c8a8" opacity="0.75"/><path d="M15 72 Q60 70 100 74 Q130 76 160 72" stroke="#f0c898" stroke-width="4" fill="none" opacity="0.7"/><path d="M40 93 Q90 86 130 88" stroke="#fff8f0" stroke-width="6" fill="none" opacity="0.9"/><ellipse cx="169" cy="74" rx="6" ry="4" fill="#fff0c0"/><rect x="150" y="62" width="20" height="22" fill="#4a4a46" opacity="0.7"/></g><rect x="0" y="95.8" width="176" height="3.2" fill="#c2c2c6"/><rect x="10" y="96" width="20" height="1" fill="#707078"/><rect x="150" y="96" width="22" height="1" fill="#707078"/><circle cx="4.5" cy="94.5" r="3.2" fill="#dde6ee"/><path d="M2.5 94 Q4.5 91.5 7 94.5" stroke="#2a5a90" stroke-width="1.1" fill="none"/></symbol>
<symbol id="sD3" viewBox="0 0 176 99"><rect width="176" height="99" fill="#0c0908"/><g filter="url(#bl)"><rect x="97" y="0" width="15" height="28" fill="#4a3018"/><rect x="101.0" y="0.6" width="1.5" height="1.6" fill="#c08850" opacity="0.69"/><rect x="104.5" y="0.6" width="1.5" height="1.6" fill="#a87040" opacity="0.78"/><rect x="108.0" y="0.6" width="1.5" height="1.6" fill="#a87040" opacity="0.56"/><rect x="97.5" y="3.1" width="1.5" height="1.6" fill="#a87040" opacity="0.96"/><rect x="101.0" y="3.1" width="1.5" height="1.6" fill="#a87040" opacity="0.97"/><rect x="104.5" y="3.1" width="1.5" height="1.6" fill="#c08850" opacity="0.85"/><rect x="108.0" y="3.1" width="1.5" height="1.6" fill="#a87040" opacity="0.58"/><rect x="104.5" y="5.6" width="1.5" height="1.6" fill="#c08850" opacity="0.78"/><rect x="108.0" y="5.6" width="1.5" height="1.6" fill="#a87040" opacity="0.98"/><rect x="104.5" y="8.1" width="1.5" height="1.6" fill="#c08850" opacity="0.62"/><rect x="97.5" y="10.6" width="1.5" height="1.6" fill="#c08850" opacity="0.96"/><rect x="101.0" y="10.6" width="1.5" height="1.6" fill="#a87040" opacity="0.62"/><rect x="104.5" y="10.6" width="1.5" height="1.6" fill="#a87040" opacity="0.81"/><rect x="97.5" y="13.1" width="1.5" height="1.6" fill="#a87040" opacity="0.80"/><rect x="101.0" y="13.1" width="1.5" height="1.6" fill="#a87040" opacity="0.88"/><rect x="104.5" y="13.1" width="1.5" height="1.6" fill="#a87040" opacity="0.66"/><rect x="97.5" y="15.6" width="1.5" height="1.6" fill="#c08850" opacity="0.66"/><rect x="101.0" y="15.6" width="1.5" height="1.6" fill="#c08850" opacity="0.82"/><rect x="104.5" y="15.6" width="1.5" height="1.6" fill="#c08850" opacity="0.89"/><rect x="108.0" y="15.6" width="1.5" height="1.6" fill="#a87040" opacity="0.75"/><rect x="97.5" y="18.1" width="1.5" height="1.6" fill="#a87040" opacity="0.82"/><rect x="101.0" y="18.1" width="1.5" height="1.6" fill="#a87040" opacity="0.67"/><rect x="97.5" y="20.6" width="1.5" height="1.6" fill="#a87040" opacity="0.74"/><rect x="101.0" y="20.6" width="1.5" height="1.6" fill="#c08850" opacity="0.66"/><rect x="104.5" y="20.6" width="1.5" height="1.6" fill="#c08850" opacity="0.74"/><rect x="97.5" y="23.1" width="1.5" height="1.6" fill="#c08850" opacity="0.97"/><rect x="101.0" y="23.1" width="1.5" height="1.6" fill="#c08850" opacity="0.61"/><rect x="108.0" y="23.1" width="1.5" height="1.6" fill="#a87040" opacity="0.92"/><rect x="101.0" y="25.6" width="1.5" height="1.6" fill="#a87040" opacity="0.70"/><rect x="104.5" y="25.6" width="1.5" height="1.6" fill="#a87040" opacity="0.78"/><rect x="108.0" y="25.6" width="1.5" height="1.6" fill="#a87040" opacity="0.74"/><rect x="55" y="0" width="15" height="4" fill="#c8b888"/><rect x="44" y="4" width="30" height="42" fill="#1a1410" opacity="0.8"/><rect x="57" y="12" width="13" height="22" fill="#7a7a20"/><ellipse cx="63.5" cy="23" rx="5" ry="9" fill="#e0d860"/><ellipse cx="63.5" cy="20" rx="2.5" ry="4" fill="#f8f0a0"/><rect x="38" y="10" width="6.5" height="34" fill="#d03818"/><rect x="39.5" y="12" width="3.5" height="30" fill="#ff8a40"/><rect x="150" y="4" width="26" height="72" fill="#241a14"/><rect x="151" y="23" width="25" height="7" fill="#4a3a32"/><rect x="150" y="44" width="26" height="6" fill="#4a3a32"/><rect x="130" y="18" width="20" height="58" fill="#16100c"/><path d="M70 45 Q80 30 100 34 Q120 26 140 34 L140 62 L70 62Z" fill="#120e0a"/><circle cx="143" cy="10" r="2.8" fill="#ffffff"/><circle cx="94" cy="28" r="1.6" fill="#ffffff"/><circle cx="70" cy="38" r="1.6" fill="#ffffff"/><circle cx="159" cy="16" r="1" fill="#e0e0e0"/><rect x="0" y="50" width="176" height="26" fill="#22140c"/><rect x="15" y="40" width="3" height="16" fill="#40c070"/><rect x="0" y="54" width="70" height="20" fill="#5a3018" opacity="0.85"/><circle cx="22" cy="52" r="1.8" fill="#ffc060"/><circle cx="44" cy="52" r="1.8" fill="#ffc060"/><circle cx="60" cy="62" r="1.8" fill="#ffc060"/><circle cx="78" cy="58" r="1.8" fill="#ffc060"/><circle cx="92" cy="60" r="1.8" fill="#ffc060"/><circle cx="10" cy="64" r="2.4" fill="#ffe0a0"/><circle cx="34" cy="62" r="2.4" fill="#ffe0a0"/><circle cx="50" cy="60" r="2.4" fill="#ffe0a0"/><circle cx="30" cy="48" r="1.6" fill="#ff4030"/><circle cx="62" cy="66" r="1.6" fill="#ff4030"/><circle cx="132" cy="72" r="1.6" fill="#ff4030"/><circle cx="120" cy="70" r="1.6" fill="#ff4030"/><circle cx="82" cy="60" r="1.4" fill="#80ff80"/><circle cx="96" cy="62" r="1.4" fill="#80ff80"/><circle cx="48" cy="58" r="1.4" fill="#80ff80"/><rect x="62" y="58" width="50" height="16" fill="#3a2818" opacity="0.7"/><path d="M113 76 L115 66 Q125 62 136 66 L140 76Z" fill="#7a4024"/><rect x="0" y="74" width="176" height="22" fill="#2a211a"/><path d="M0 80 L176 77 L176 96 L0 96Z" fill="#3a2f28"/><path d="M0 88 L176 84 L176 96 L0 96Z" fill="#423630"/><circle cx="8" cy="58" r="1.3" fill="#ffb060"/><circle cx="16" cy="62" r="1.3" fill="#ffb060"/><circle cx="26" cy="66" r="1.3" fill="#ffb060"/><circle cx="40" cy="66" r="1.3" fill="#ffb060"/><circle cx="54" cy="68" r="1.3" fill="#ffb060"/><circle cx="70" cy="64" r="1.3" fill="#ffb060"/><circle cx="86" cy="66" r="1.3" fill="#ffb060"/><circle cx="104" cy="62" r="1.3" fill="#ffb060"/><circle cx="110" cy="68" r="1.3" fill="#ffb060"/><circle cx="124" cy="62" r="1.3" fill="#ffb060"/><circle cx="18" cy="70" r="1.2" fill="#ff5040"/><circle cx="46" cy="70" r="1.2" fill="#ff5040"/><circle cx="66" cy="70" r="1.2" fill="#ff5040"/><circle cx="98" cy="70" r="1.2" fill="#ff5040"/><circle cx="30" cy="58" r="1.2" fill="#fff0d0"/><circle cx="58" cy="56" r="1.2" fill="#fff0d0"/><circle cx="90" cy="56" r="1.2" fill="#fff0d0"/><path d="M0 68 L20 66 L24 82 L0 84Z" fill="#3a2a20" opacity="0.8"/></g><g filter="url(#bl2)"><path d="M10 76 Q60 72 100 76 Q140 82 176 86" stroke="#f8e8c0" stroke-width="6" fill="none" opacity="0.85"/><path d="M20 86 Q80 82 176 92" stroke="#e0b060" stroke-width="3" fill="none" opacity="0.7"/><ellipse cx="30" cy="78" rx="20" ry="5" fill="#fff4d8" opacity="0.7"/></g><rect x="0" y="95.8" width="176" height="3.2" fill="#c2c2c6"/><rect x="10" y="96" width="20" height="1" fill="#707078"/><rect x="150" y="96" width="22" height="1" fill="#707078"/><circle cx="4.5" cy="94.5" r="3.2" fill="#dde6ee"/><path d="M2.5 94 Q4.5 91.5 7 94.5" stroke="#2a5a90" stroke-width="1.1" fill="none"/></symbol>
<!--/SCENES-->
<symbol id="cam" viewBox="0 0 32 26">
<path d="M0 1 Q0 0 1 0 L31 0 Q32 0 32 1 L32 11.2 L0 11.2Z" fill="#d4d6e3"/>
<rect x="0" y="0" width="6" height="11.2" fill="#cacbda"/>
<rect x="0" y="9.6" width="32" height="1.6" fill="#e4e6ef"/>
<path d="M2.6 11 A13.5 13.8 0 0 0 29.6 11Z" fill="#4b4c58"/>
<rect x="3" y="11" width="26.2" height="1.6" fill="#393a45"/>
<circle cx="16" cy="17.8" r="4" fill="#3b3c47"/>
<circle cx="17.1" cy="17" r="1.3" fill="#f0f0f4"/>
<circle cx="14.4" cy="20" r="0.9" fill="#d0d0d8"/>
</symbol>
<symbol id="tico" viewBox="0 0 14 16"><rect x="0.5" y="0.5" width="12.5" height="15" fill="#3a4850"/><rect x="2.5" y="2" width="9" height="12" fill="#4e5e66"/><rect x="5" y="3" width="3" height="2" fill="#6a7a82"/></symbol>
</defs></svg>
<div id="win" class="a"></div>

<!-- title bar -->
<svg class="a" style="left:4px;top:4px" width="24" height="24" viewBox="0 0 24 24">
<circle cx="11.3" cy="11.1" r="4.9" fill="#5a1014" stroke="#a80c16" stroke-width="2.8"/>
<ellipse cx="13.2" cy="13.6" rx="3.4" ry="2.6" transform="rotate(40 13.2 13.6)" fill="#f4f2f4"/>
<path d="M14 15 L17.6 19" stroke="#e6e4ea" stroke-width="2.2" stroke-linecap="round"/>
</svg>
<div class="a title">Netcam Studio Client - Library Manager</div>
<div class="a wbtn" style="left:820px"></div>
<div class="a wbtn" style="left:851px"></div>
<div class="a wbtn" style="left:882px"></div>
<div class="a wbtn" style="left:913px"></div>
<svg class="a" style="left:828px;top:10px" width="12" height="10"><path d="M1 3 L1 1 L3 1 M9 1 L11 1 L11 3 M11 7 L11 9 L9 9 M3 9 L1 9 L1 7" stroke="#555" stroke-width="1" fill="none"/><rect x="3.5" y="3.5" width="5" height="3" stroke="#555" stroke-width="1.5" fill="none"/></svg>
<div class="a" style="left:861px;top:15px;width:9px;height:2px;background:#606064"></div>
<div class="a" style="left:892px;top:11px;width:9px;height:7px;border:2px solid #606064"></div>
<svg class="a" style="left:923px;top:11.5px" width="10" height="7"><path d="M1 0.5 L9 6.5 M9 0.5 L1 6.5" stroke="#606064" stroke-width="2"/></svg>

<!-- tabs -->
<div class="a" style="left:9px;top:29px;width:55px;height:18px;border:1px solid #c4c2cc;border-radius:1px;background:radial-gradient(ellipse at 75% 50%,#e8d8f2,#e2dcf0 60%,#dedcee)"></div>
<svg class="a" style="left:28px;top:30px" width="16" height="16" viewBox="0 0 16 16"><path d="M2.3 2.3 L13.7 13.7 M13.7 2.3 L2.3 13.7" stroke="#000" stroke-width="3.4"/></svg>
<div class="a" style="left:66px;top:28px;width:49px;height:23px;background:#fff;border:1px solid #b5b6ba;border-bottom:none;border-radius:2px 2px 0 0;z-index:2"></div>
<div class="a tab" style="left:77px;top:34px;z-index:3;color:#26264a">Home</div>
<div class="a tab" style="left:130px;top:34px;color:#4a4a58">Settings</div>

<!-- ribbon -->
<div class="a" style="left:5px;top:49px;width:939px;height:619px;border:1px solid #a9aaae;background:linear-gradient(#dadbdf,#d8d9dd)"></div>
<div id="ribbon" class="a"></div>
<!-- group separators -->
<div class="a" style="left:164px;top:52px;width:1px;height:86px;background:#d8d9dc"></div>
<div class="a" style="left:287px;top:52px;width:1px;height:86px;background:#d8d9dc"></div>
<div class="a" style="left:396px;top:52px;width:1px;height:86px;background:#d8d9dc"></div>
<div class="a sep" style="left:24px;top:122px;width:123px"></div>
<div class="a sep" style="left:172px;top:122px;width:104px"></div>
<div class="a sep" style="left:296px;top:122px;width:86px"></div>
<div class="a gl" style="left:8px;top:125px;width:141px;letter-spacing:-0.2px">Sources</div>
<div class="a gl" style="left:165px;top:125px;width:111px">Library / Stats</div>
<div class="a gl" style="left:288px;top:125px;width:96px">Information</div>
<svg class="a" style="left:156px;top:132px" width="6" height="6"><path d="M5 0 L5 5 L0 5Z" fill="#9a9aa0"/></svg>
<svg class="a" style="left:279px;top:132px" width="6" height="6"><path d="M5 0 L5 5 L0 5Z" fill="#9a9aa0"/></svg>
<svg class="a" style="left:388px;top:132px" width="6" height="6"><path d="M5 0 L5 5 L0 5Z" fill="#9a9aa0"/></svg>

<!-- Views -->
<svg class="a" style="left:16px;top:54px" width="34" height="34" viewBox="0 0 34 34">
<g fill="#f2f2f2" stroke="#2e2e2e" stroke-width="1.6">
<rect x="1.5" y="1.5" width="14" height="14" rx="1.2"/><rect x="18.5" y="1.5" width="14" height="14" rx="1.2"/>
<rect x="1.5" y="18.5" width="14" height="14" rx="1.2"/><rect x="18.5" y="18.5" width="14" height="14" rx="1.2"/></g>
</svg>
<div class="a bt" style="left:8px;top:91px;width:48px">Views</div>
<svg class="a" style="left:29px;top:108px" width="8" height="5"><path d="M0 0 L7 0 L3.5 4Z" fill="#1a1a1a"/></svg>

<!-- Sources -->
<svg class="a" style="left:68px;top:59px" width="32" height="26"><use href="#cam"/></svg>
<div class="a bt" style="left:56px;top:91px;width:56px">Sources</div>
<svg class="a" style="left:80px;top:108px" width="8" height="5"><path d="M0 0 L7 0 L3.5 4Z" fill="#1a1a1a"/></svg>

<!-- Add Source -->
<svg class="a" style="left:119px;top:58.5px" width="32" height="26"><use href="#cam"/></svg>
<svg class="a" style="left:134px;top:70px" width="18" height="18" viewBox="0 0 18 18"><path d="M9 1.5 L9 16.5 M1.5 9 L16.5 9" stroke="#1f9b26" stroke-width="4.4"/></svg>
<div class="a bt" style="left:108px;top:91px;width:52px">Add<br>Source</div>

<!-- Library highlighted -->
<div class="a" style="left:168px;top:52px;width:50px;height:69px;background:linear-gradient(#cfd0d3,#c4c5c9);border-radius:1px"></div>
<svg class="a" style="left:176px;top:54px" width="34" height="34" viewBox="0 0 34 34">
<rect x="1" y="1" width="32" height="32" fill="#f6f6f6"/>
<rect x="3.5" y="3.5" width="27" height="20" fill="#ef6148"/>
<circle cx="17.3" cy="13.4" r="6.4" fill="#fff"/>
<path d="M15.2 10 L15.2 17 L20.5 13.5Z" fill="#213556"/>
<rect x="3.5" y="27.6" width="27" height="1.8" fill="#d8d8d8"/>
<rect x="3.5" y="27.6" width="10" height="1.8" fill="#2a2a30"/>
<circle cx="14" cy="28.5" r="2.2" fill="#f2c235"/>
</svg>
<div class="a bt" style="left:168px;top:91px;width:50px">Library<br>[1919]</div>

<!-- Connected Users globe -->
<svg class="a" style="left:232px;top:52px" width="38" height="38" viewBox="0 0 38 38">
<defs><clipPath id="gc"><circle cx="18.9" cy="18.8" r="15.9"/></clipPath></defs>
<circle cx="18.9" cy="18.8" r="15.9" fill="#1f9dc6"/>
<g clip-path="url(#gc)" fill="#f4c43c" stroke="#b8cc50" stroke-width="0.5">
<path d="M6 13.5 L6.8 8.5 L11 5.2 L15 4.3 L17.5 7.2 L18.2 9.6 L15.6 12 L12.2 13.4 L10.2 15.2 L10.6 17.6 L13 19.6 L11.5 20 L8.8 17.6 L7.2 15.2Z"/>
<path d="M12 21 L17 20.6 L21 23 L22.6 26.2 L20.2 29 L17.4 32.6 L15.6 34.5 L14.6 30.5 L12.6 26.4 L11.7 23.2Z"/>
<path d="M28 12.5 L31 10.6 L34 12 L36 16 L35.5 22 L33 21.5 L29.5 19.6 L28.4 16.4Z"/>
<path d="M27.2 6.6 L29.5 7.8 L29 10.2 L27 9Z"/>
<path d="M18.2 4.6 L21.2 5.6 L20.4 7.6 L18.6 6.6Z"/>
</g>
</svg>
<div class="a bt" style="left:220px;top:91px;width:60px">Connected<br>Users</div>

<!-- Event Logs -->
<svg class="a" style="left:299px;top:56px" width="34" height="30" viewBox="0 0 34 30">
<defs><linearGradient id="wy" x1="0" y1="0" x2="0" y2="1"><stop offset="0" stop-color="#f8e07a"/><stop offset="1" stop-color="#f2cf52"/></linearGradient></defs>
<path d="M17 2 L32 28 L2 28Z" fill="url(#wy)" stroke="#2e2e2e" stroke-width="2.2" stroke-linejoin="round"/>
<rect x="15.8" y="10" width="2.4" height="9" fill="#222"/><rect x="15.8" y="21.5" width="2.4" height="2.5" fill="#222"/>
</svg>
<div class="a bt" style="left:290px;top:91px;width:50px">Event<br>Logs</div>

<!-- About bulb -->
<svg class="a" style="left:353px;top:54px" width="28" height="34" viewBox="0 0 28 34">
<circle cx="14" cy="12.5" r="11.5" fill="#f5cb2a"/>
<circle cx="14" cy="12.5" r="8" fill="#fbe372"/>
<path d="M10 9 L12 21 M18 9 L16 21" stroke="#444" stroke-width="1.4" fill="none"/>
<rect x="10" y="22" width="8" height="8" rx="1" fill="#8e8e94"/>
<rect x="10" y="24" width="8" height="1" fill="#c8c8cc"/><rect x="10" y="27" width="8" height="1" fill="#c8c8cc"/>
<path d="M11.5 30 L16.5 30 L14 33Z" fill="#6e6e74"/>
</svg>
<div class="a bt" style="left:341px;top:91px;width:50px">About</div>
<svg class="a" style="left:920px;top:122px" width="16" height="12" viewBox="0 0 16 12"><path d="M9.1 3.1 L3.2 9.1 L5.3 11.2 L9.1 7.8 L12.6 11.2 L15 8.9Z" fill="#f4f4f6" stroke="#545458" stroke-width="1.3" stroke-linejoin="round"/></svg>

<!-- toolbar -->
<div id="tb" class="a"></div>
<svg class="a" style="left:16px;top:150px" width="34" height="38" viewBox="0 0 34 38">
<path d="M16.4 8.9 A10 10 0 0 1 25.6 23" stroke="#000" stroke-width="3.2" fill="none"/>
<path d="M7.4 14.6 A10 10 0 0 0 16.4 28.9" stroke="#000" stroke-width="3.2" fill="none"/>
<path d="M10.6 8.9 L16.8 3.3 L16.8 14.3Z" fill="#000"/>
<path d="M22 28.9 L15.9 23.4 L15.9 34.4Z" fill="#000"/>
</svg>
<svg class="a" style="left:58px;top:152px" width="33" height="33" viewBox="0 0 33 33">
<circle cx="16.1" cy="16.7" r="16" fill="#dedede"/>
<path d="M16 7.5 L16 23" stroke="#bcbcbc" stroke-width="4.2"/>
<path d="M8.2 16.5 L16 24.5 L23.8 16.5" stroke="#bcbcbc" stroke-width="4.2" fill="none"/>
</svg>
<svg class="a" style="left:99px;top:152px" width="34" height="34" viewBox="0 0 34 34">
<path d="M6.6 9.6 L16.7 3 L28 9.6" stroke="#4e4e5a" stroke-width="1.3" fill="none"/>
<circle cx="16.7" cy="3.8" r="1.9" fill="#9a9aa4"/>
<rect x="2.3" y="10.4" width="29" height="22" fill="#fbfbfb" stroke="#575764" stroke-width="2"/>
<rect x="5.1" y="13" width="24.1" height="15.7" fill="#3f3d5a"/>
<rect x="5.1" y="28.7" width="24.1" height="1.3" fill="#cfeee0"/>
<circle cx="9.6" cy="16.1" r="2.6" fill="#f4d046"/>
<path d="M5.1 28.7 L12.5 21.5 L17.5 25.8 L21.8 18.2 L29.2 26 L29.2 28.7Z" fill="#25a27b"/>
</svg>

<svg class="a" style="left:380px;top:148px" width="40" height="40" viewBox="0 0 40 40">
<rect x="5.6" y="15" width="30.7" height="20.7" fill="#ebebed"/>
<rect x="5" y="8" width="31.4" height="7" fill="#3a3f50"/>
<path d="M16 11 L18.5 6 M19.5 11 L22 6 M23 11 L25.5 6 M26.5 11 L29 6" stroke="#e8e8ec" stroke-width="1.3"/>
<path d="M11.4 21.2 L17 18.4 L17 34.1" stroke="#2e2e34" stroke-width="1.4" fill="none"/>
<ellipse cx="26.3" cy="22.4" rx="3.6" ry="3.8" stroke="#2e2e34" stroke-width="1.3" fill="none"/>
<ellipse cx="26.3" cy="29.4" rx="4.5" ry="4.6" stroke="#2e2e34" stroke-width="1.3" fill="none"/>
</svg>
<div class="a lbl" style="left:421px;top:162px">From</div>
<div class="a combo" style="left:454px;width:96px">21.01.2018</div>
<div class="a dd" style="left:538px;top:167px"></div>
<div class="a lbl" style="left:558px;top:162px">To</div>
<div class="a combo" style="left:577px;width:101px">22.01.2018</div>
<div class="a dd" style="left:666px;top:167px"></div>
<svg class="a" style="left:687.4px;top:156.2px" width="31.6" height="25.7" viewBox="0 0 32 26" preserveAspectRatio="none"><use href="#cam"/></svg>
<div class="a lbl" style="left:723px;top:162px">Source</div>
<div class="a combo" style="left:764px;width:121px">10. Network Sou…</div>
<div class="a dd" style="left:872px;top:167px"></div>
<div class="a" style="left:892px;top:151px;width:1px;height:34px;background:#dcdcdf"></div>
<svg class="a" style="left:902px;top:152px" width="30" height="34" viewBox="0 0 30 34">
<path d="M10 4 L10 1.5 L20 1.5 L20 4" stroke="#d0d0d2" stroke-width="2" fill="none"/>
<rect x="1" y="4" width="28" height="5" rx="1" fill="#d0d0d2"/>
<path d="M3 10 L27 10 L25 32 L5 32Z" fill="#d0d0d2"/>
<path d="M10 13 L10 29 M15 13 L15 29 M20 13 L20 29" stroke="#c2c2c5" stroke-width="1.5"/>
</svg>

<!-- status row -->
<div id="sr" class="a"></div>
<div class="a" style="left:13px;top:201px;color:#1e1e38;letter-spacing:-0.13px">Period: 16 Loaded: 16</div>
<div class="a" style="left:817px;top:201px;color:#1e1e38;letter-spacing:-0.1px">Total: 16 Entries [24 MB]</div>

<!-- content -->
<div id="content" class="a"></div>
<div class="a" style="left:925px;top:221px;width:15px;height:416px;background:linear-gradient(90deg,#f9f9fa,#fcfcfd)"></div>
<svg class="a" style="left:928px;top:227px" width="8" height="5"><path d="M0.5 4 L3.5 0.8 L6.5 4Z" fill="#6e6e72"/></svg>
<div class="a" style="left:928px;top:238px;width:7px;height:222px;border-radius:4px;background:linear-gradient(90deg,#c8c9cd,#dfe0e3 50%,#c8c9cd);border:1px solid #b9babe"></div>
<svg class="a" style="left:928px;top:627px" width="8" height="5"><path d="M0.5 0.8 L6.5 0.8 L3.5 4Z" fill="#6e6e72"/></svg>
<div class="a" style="left:9px;top:221px;width:916px;height:416px;overflow:hidden">
<div class="a th" style="left:14px;top:5px"><svg class="a ph" width="176" height="99"><use href="#sA"/></svg><svg class="a" style="left:163px;top:118px" width="14" height="16"><use href="#tico"/></svg></div>
<div class="a cap" style="left:11px;top:147px">10. Network Source (Custom) -<br><span style="letter-spacing:0.15px">2018.01.21 13:15:08 - 00:02</span></div>
<div class="a th" style="left:202px;top:5px"><svg class="a ph" width="176" height="99"><use href="#sB"/></svg><svg class="a" style="left:163px;top:118px" width="14" height="16"><use href="#tico"/></svg></div>
<div class="a cap" style="left:199px;top:147px">10. Network Source (Custom) -<br><span style="letter-spacing:0.15px">2018.01.21 13:15:04 - 00:02</span></div>
<div class="a th" style="left:390px;top:5px"><svg class="a ph" width="176" height="99"><use href="#sB2"/></svg><svg class="a" style="left:163px;top:118px" width="14" height="16"><use href="#tico"/></svg></div>
<div class="a cap" style="left:387px;top:147px">10. Network Source (Custom) -<br><span style="letter-spacing:0.15px">2018.01.21 13:14:59 - 00:02</span></div>
<div class="a th" style="left:578px;top:5px"><svg class="a ph" width="176" height="99"><use href="#sC"/></svg><svg class="a" style="left:163px;top:118px" width="14" height="16"><use href="#tico"/></svg></div>
<div class="a cap" style="left:575px;top:147px">10. Network Source (Custom) -<br><span style="letter-spacing:0.15px">2018.01.21 13:14:45 - 00:13</span></div>
<div class="a th" style="left:14px;top:186px"><svg class="a ph" width="176" height="99"><use href="#sD"/></svg><svg class="a" style="left:163px;top:118px" width="14" height="16"><use href="#tico"/></svg></div>
<div class="a cap" style="left:11px;top:328px">10. Network Source (Custom) -<br><span style="letter-spacing:0.15px">2018.01.21 13:14:40 - 00:03</span></div>
<div class="a th" style="left:202px;top:186px"><svg class="a ph" width="176" height="99"><use href="#sD2"/></svg><svg class="a" style="left:163px;top:118px" width="14" height="16"><use href="#tico"/></svg></div>
<div class="a cap" style="left:199px;top:328px">10. Network Source (Custom) -<br><span style="letter-spacing:0.15px">2018.01.21 13:14:34 - 00:02</span></div>
<div class="a th" style="left:390px;top:186px"><svg class="a ph" width="176" height="99"><use href="#sD3"/></svg><svg class="a" style="left:163px;top:118px" width="14" height="16"><use href="#tico"/></svg></div>
<div class="a cap" style="left:387px;top:328px">10. Network Source (Custom) -<br><span style="letter-spacing:0.15px">2018.01.21 13:14:30 - 00:02</span></div>
<div class="a th" style="left:578px;top:186px"><svg class="a ph" width="176" height="99"><use href="#sA2"/></svg><svg class="a" style="left:163px;top:118px" width="14" height="16"><use href="#tico"/></svg></div>
<div class="a cap" style="left:575px;top:328px">10. Network Source (Custom) -<br><span style="letter-spacing:0.15px">2018.01.21 13:14:25 - 00:03</span></div>
<div class="a th" style="left:14px;top:367px"><svg class="a ph" width="176" height="99"><use href="#sA"/></svg><svg class="a" style="left:163px;top:118px" width="14" height="16"><use href="#tico"/></svg></div>
<div class="a th" style="left:202px;top:367px"><svg class="a ph" width="176" height="99"><use href="#sC"/></svg><svg class="a" style="left:163px;top:118px" width="14" height="16"><use href="#tico"/></svg></div>
<div class="a th" style="left:390px;top:367px"><svg class="a ph" width="176" height="99"><use href="#sD"/></svg><svg class="a" style="left:163px;top:118px" width="14" height="16"><use href="#tico"/></svg></div>
<div class="a th" style="left:578px;top:367px"><svg class="a ph" width="176" height="99"><use href="#sD"/></svg><svg class="a" style="left:163px;top:118px" width="14" height="16"><use href="#tico"/></svg></div>
</div>

<!-- status bar -->
<div id="status" class="a"></div>
<div class="a st" style="left:13px;color:#1a2a9a">Online @ http://localhost:8100</div>
<div class="a st" style="left:173px">Server: 2,50%</div>
<div class="a st" style="left:257px">Client: 0,96%</div>
<div class="a st" style="left:336px">Free HDD: 199Gb</div>
<div class="a st" style="left:432px">Connected: 1 (0 Kb/s)</div>
<svg class="a" style="left:929px;top:653px" width="13" height="12"><path d="M2 10.5 L11.5 1 M6 10.5 L11.5 5 M10 10.5 L11.5 9" stroke="#8e8e94" stroke-width="1.1" stroke-dasharray="1.4 0.6"/></svg>
</body></html>
